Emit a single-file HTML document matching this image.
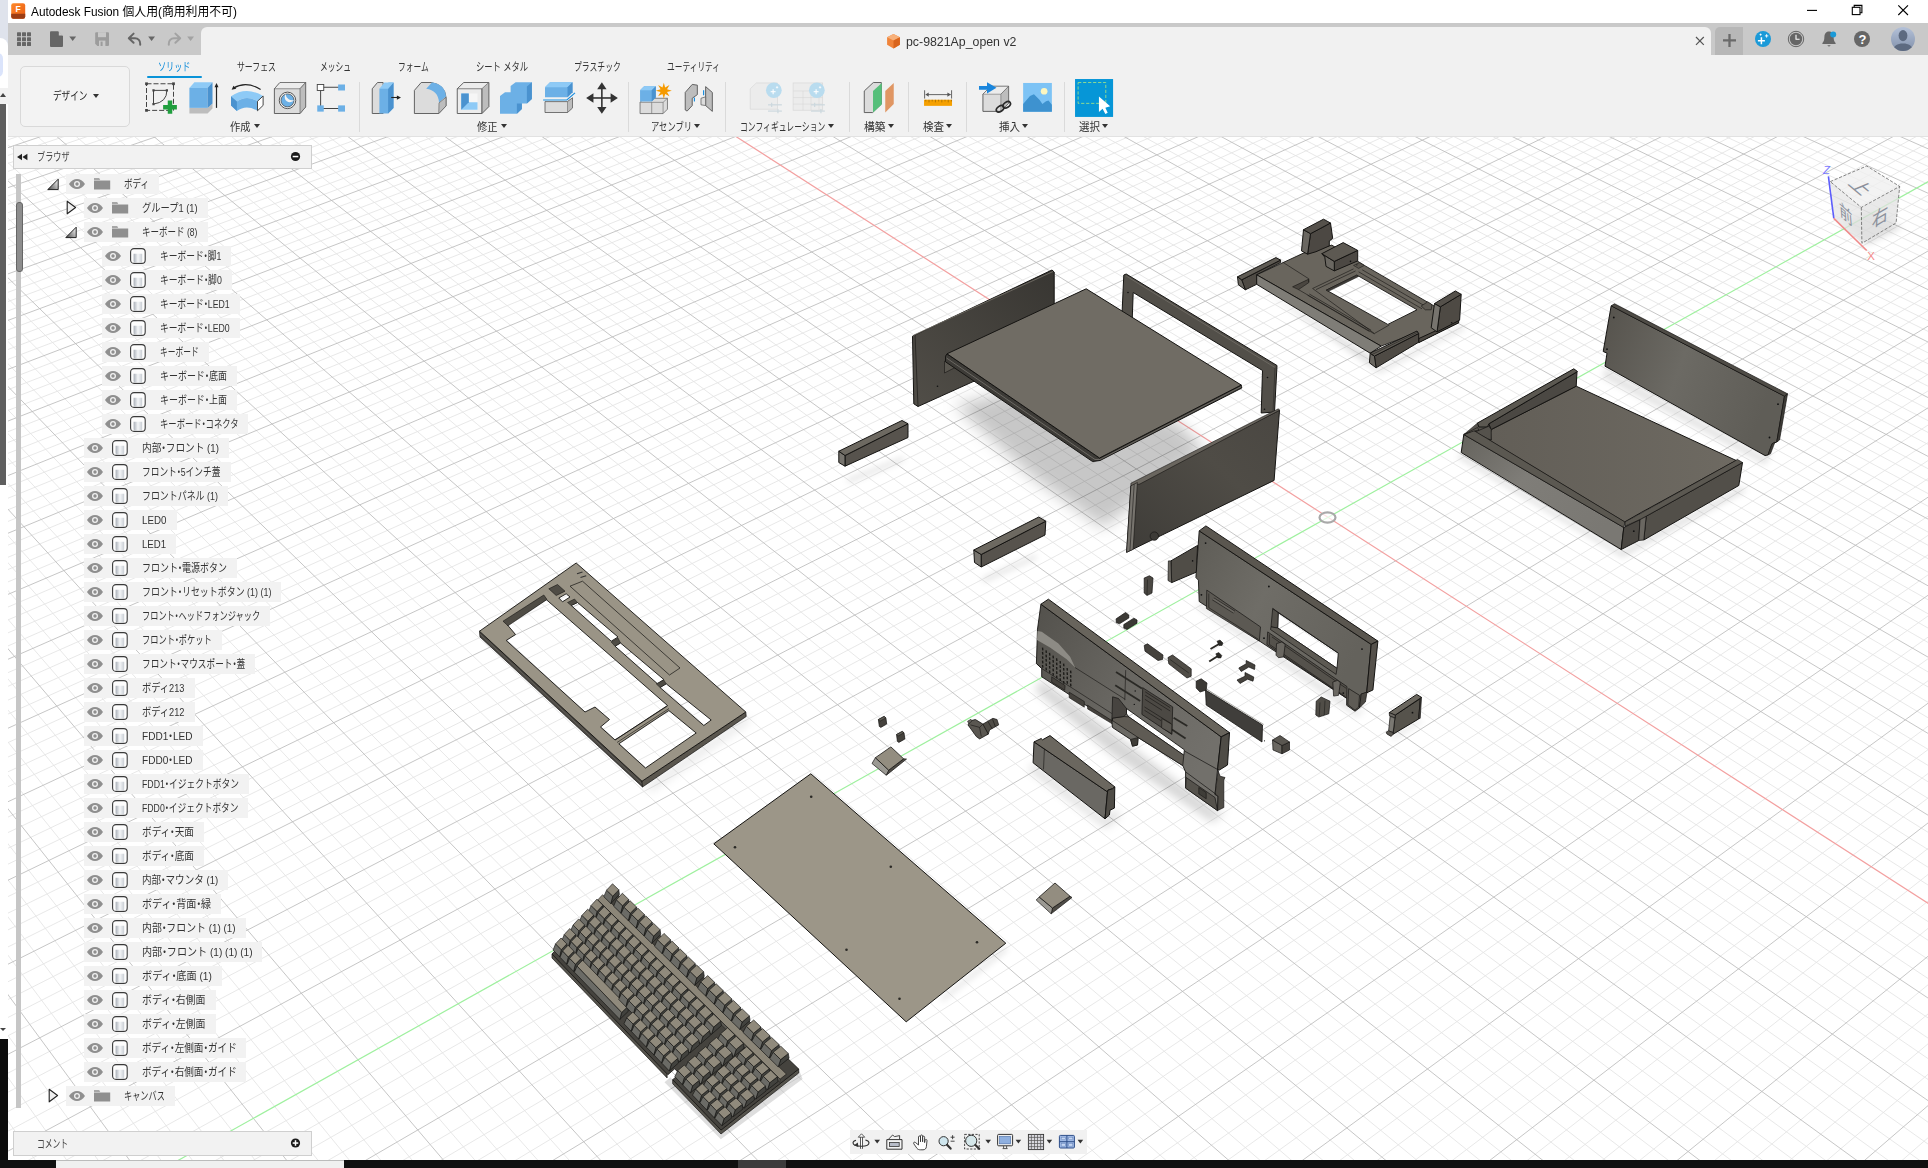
<!DOCTYPE html>
<html><head><meta charset="utf-8"><title>Autodesk Fusion</title>
<style>
html,body{margin:0;padding:0;background:#fff;}
body{width:1928px;height:1168px;position:relative;overflow:hidden;font-family:"Liberation Sans","Noto Sans CJK JP",sans-serif;font-size:11px;color:#333;}
.abs{position:absolute;}
#vp{position:absolute;left:0;top:137px;width:1928px;height:1023px;background:#fff;overflow:hidden;}
#vp svg{position:absolute;left:0;top:0;}
.rb{position:absolute;height:20px;background:#f2f2f2;}
.ic{position:absolute;overflow:visible;}
.tx{position:absolute;white-space:nowrap;font-size:11.5px;line-height:18px;height:18px;color:#333;transform-origin:0 50%;}
.tt{position:absolute;white-space:nowrap;height:18px;transform-origin:0 50%;}
.md{font-style:normal;margin:0 -0.27em}
.dd{position:absolute;width:0;height:0;border-left:3.2px solid transparent;border-right:3.2px solid transparent;border-top:4px solid #333;}
.vdiv{position:absolute;width:1px;top:82px;height:50px;background:#dadada;}
</style></head><body>
<!-- viewport -->
<div id="vp"><svg width="1928" height="1023" viewBox="0 0 1928 1023">
<g>
<path d="M-5.0 -0.6L8.2 -5.0M-5.0 7.1L31.3 -5.0M-5.0 22.8L77.5 -5.0M-5.0 30.8L100.6 -5.0M-5.0 38.8L123.7 -5.0M-5.0 47.0L146.8 -5.0M-5.0 63.4L192.9 -5.0M-5.0 71.8L216.0 -5.0M-5.0 80.2L239.1 -5.0M-5.0 88.7L262.2 -5.0M-5.0 106.0L308.4 -5.0M-5.0 1010.2L7.3 1028.0M-5.0 114.8L331.5 -5.0M-5.0 965.5L38.7 1028.0M-5.0 123.6L354.6 -5.0M-5.0 922.3L70.2 1028.0M-5.0 132.6L377.6 -5.0M-5.0 880.5L101.6 1028.0M-5.0 150.8L423.8 -5.0M-5.0 800.8L164.5 1028.0M-5.0 160.0L446.9 -5.0M-5.0 762.8L196.0 1028.0M-5.0 169.3L470.0 -5.0M-5.0 725.9L227.4 1028.0M-5.0 178.7L493.1 -5.0M-5.0 690.2L258.9 1028.0M-5.0 197.8L539.3 -5.0M-5.0 621.9L321.8 1028.0M-5.0 207.6L562.4 -5.0M-5.0 589.2L353.3 1028.0M-5.0 217.4L585.4 -5.0M-5.0 557.4L384.7 1028.0M-5.0 227.3L608.5 -5.0M-5.0 526.5L416.2 1028.0M-5.0 247.4L654.7 -5.0M-5.0 467.3L479.1 1028.0M-5.0 257.7L677.8 -5.0M-5.0 438.8L510.6 1028.0M-5.0 268.0L700.9 -5.0M-5.0 411.1L542.0 1028.0M-5.0 278.5L724.0 -5.0M-5.0 384.2L573.5 1028.0M-5.0 299.8L770.2 -5.0M-5.0 332.3L636.4 1028.0M-5.0 310.6L793.3 -5.0M-5.0 307.3L667.8 1028.0M-5.0 321.5L816.3 -5.0M-5.0 283.0L699.3 1028.0M-5.0 332.6L839.4 -5.0M-5.0 259.3L730.8 1028.0M-5.0 355.1L885.6 -5.0M-5.0 213.5L793.7 1028.0M-5.0 366.5L908.7 -5.0M-5.0 191.4L825.1 1028.0M-5.0 378.1L931.8 -5.0M-5.0 169.8L856.6 1028.0M-5.0 389.8L954.9 -5.0M-5.0 148.8L888.0 1028.0M-5.0 413.6L1001.1 -5.0M-5.0 108.0L951.0 1028.0M-5.0 425.7L1024.2 -5.0M-5.0 88.4L982.4 1028.0M-5.0 438.0L1047.2 -5.0M-5.0 69.1L1013.9 1028.0M-5.0 450.4L1070.3 -5.0M-5.0 50.3L1045.3 1028.0M-5.0 475.6L1116.5 -5.0M-5.0 13.9L1108.2 1028.0M-5.0 488.5L1139.6 -5.0M-5.0 -3.8L1139.7 1028.0M-5.0 501.5L1162.7 -5.0M13.0 -5.0L1171.2 1028.0M-5.0 514.6L1185.8 -5.0M32.3 -5.0L1202.6 1028.0M-5.0 541.4L1232.0 -5.0M71.0 -5.0L1265.5 1028.0M-5.0 555.1L1255.1 -5.0M90.4 -5.0L1297.0 1028.0M-5.0 568.9L1278.2 -5.0M109.7 -5.0L1328.4 1028.0M-5.0 582.9L1301.2 -5.0M129.1 -5.0L1359.9 1028.0M-5.0 611.5L1347.4 -5.0M167.8 -5.0L1422.8 1028.0M-5.0 626.0L1370.5 -5.0M187.1 -5.0L1454.3 1028.0M-5.0 640.8L1393.6 -5.0M206.5 -5.0L1485.7 1028.0M-5.0 655.7L1416.7 -5.0M225.8 -5.0L1517.2 1028.0M-5.0 686.2L1462.9 -5.0M264.5 -5.0L1580.1 1028.0M-5.0 701.7L1486.0 -5.0M283.9 -5.0L1611.6 1028.0M-5.0 717.4L1509.1 -5.0M303.2 -5.0L1643.0 1028.0M-5.0 733.4L1532.2 -5.0M322.6 -5.0L1674.5 1028.0M-5.0 765.9L1578.3 -5.0M361.3 -5.0L1737.4 1028.0M-5.0 782.5L1601.4 -5.0M380.6 -5.0L1768.9 1028.0M-5.0 799.3L1624.5 -5.0M400.0 -5.0L1800.3 1028.0M-5.0 816.4L1647.6 -5.0M419.3 -5.0L1831.8 1028.0M-5.0 851.3L1693.8 -5.0M458.0 -5.0L1894.7 1028.0M-5.0 869.1L1716.9 -5.0M477.4 -5.0L1926.2 1028.0M-5.0 887.1L1740.0 -5.0M496.7 -5.0L1933.0 1010.6M-5.0 905.4L1763.1 -5.0M516.1 -5.0L1933.0 988.7M-5.0 942.9L1809.3 -5.0M554.8 -5.0L1933.0 945.9M-5.0 962.0L1832.4 -5.0M574.1 -5.0L1933.0 925.0M-5.0 981.4L1855.4 -5.0M593.5 -5.0L1933.0 904.5M-5.0 1001.1L1878.5 -5.0M612.8 -5.0L1933.0 884.3M19.7 1028.0L1924.7 -5.0M651.5 -5.0L1933.0 844.8M57.3 1028.0L1933.0 3.1M670.9 -5.0L1933.0 825.5M94.8 1028.0L1933.0 15.9M690.2 -5.0L1933.0 806.5M132.4 1028.0L1933.0 28.8M709.6 -5.0L1933.0 787.8M207.4 1028.0L1933.0 55.4M748.3 -5.0L1933.0 751.2M245.0 1028.0L1933.0 69.0M767.6 -5.0L1933.0 733.4M282.5 1028.0L1933.0 82.8M787.0 -5.0L1933.0 715.7M320.1 1028.0L1933.0 96.9M806.3 -5.0L1933.0 698.4M395.1 1028.0L1933.0 125.6M845.0 -5.0L1933.0 664.4M432.7 1028.0L1933.0 140.4M864.4 -5.0L1933.0 647.8M470.2 1028.0L1933.0 155.4M883.7 -5.0L1933.0 631.4M507.7 1028.0L1933.0 170.6M903.1 -5.0L1933.0 615.3M582.8 1028.0L1933.0 201.9M941.8 -5.0L1933.0 583.7M620.4 1028.0L1933.0 217.9M961.1 -5.0L1933.0 568.2M657.9 1028.0L1933.0 234.2M980.5 -5.0L1933.0 552.9M695.4 1028.0L1933.0 250.8M999.8 -5.0L1933.0 537.8M770.5 1028.0L1933.0 284.9M1038.5 -5.0L1933.0 508.3M808.1 1028.0L1933.0 302.4M1057.9 -5.0L1933.0 493.9M845.6 1028.0L1933.0 320.3M1077.2 -5.0L1933.0 479.6M883.2 1028.0L1933.0 338.4M1096.6 -5.0L1933.0 465.5M958.2 1028.0L1933.0 375.8M1135.3 -5.0L1933.0 437.9M995.8 1028.0L1933.0 395.0M1154.6 -5.0L1933.0 424.4M1033.3 1028.0L1933.0 414.5M1174.0 -5.0L1933.0 411.0M1070.9 1028.0L1933.0 434.5M1193.3 -5.0L1933.0 397.8M1145.9 1028.0L1933.0 475.5M1232.0 -5.0L1933.0 371.9M1183.5 1028.0L1933.0 496.6M1251.4 -5.0L1933.0 359.2M1221.0 1028.0L1933.0 518.2M1270.7 -5.0L1933.0 346.7M1258.6 1028.0L1933.0 540.2M1290.1 -5.0L1933.0 334.3M1333.6 1028.0L1933.0 585.6M1328.8 -5.0L1933.0 310.0M1371.2 1028.0L1933.0 608.9M1348.2 -5.0L1933.0 298.0M1408.7 1028.0L1933.0 632.8M1367.5 -5.0L1933.0 286.2M1446.3 1028.0L1933.0 657.2M1386.9 -5.0L1933.0 274.6M1521.4 1028.0L1933.0 707.6M1425.6 -5.0L1933.0 251.7M1558.9 1028.0L1933.0 733.6M1444.9 -5.0L1933.0 240.4M1596.4 1028.0L1933.0 760.2M1464.3 -5.0L1933.0 229.3M1634.0 1028.0L1933.0 787.4M1483.6 -5.0L1933.0 218.3M1709.1 1028.0L1933.0 843.7M1522.3 -5.0L1933.0 196.8M1746.6 1028.0L1933.0 872.8M1541.7 -5.0L1933.0 186.1M1784.2 1028.0L1933.0 902.6M1561.0 -5.0L1933.0 175.7M1821.7 1028.0L1933.0 933.1M1580.4 -5.0L1933.0 165.3M1896.8 1028.0L1933.0 996.4M1619.1 -5.0L1933.0 144.9M1638.4 -5.0L1933.0 134.9M1657.8 -5.0L1933.0 125.0M1677.1 -5.0L1933.0 115.2M1715.8 -5.0L1933.0 95.9M1735.2 -5.0L1933.0 86.4M1754.5 -5.0L1933.0 77.0M1773.9 -5.0L1933.0 67.7M1812.6 -5.0L1933.0 49.4M1832.0 -5.0L1933.0 40.4M1851.3 -5.0L1933.0 31.6M1870.7 -5.0L1933.0 22.7M1909.4 -5.0L1933.0 5.4M1928.7 -5.0L1933.0 -3.1" stroke="#e4e4e4" stroke-width="0.85" fill="none"/>
<path d="M-5.0 15.0L54.4 -5.0M-5.0 55.1L169.8 -5.0M-5.0 97.3L285.3 -5.0M-5.0 141.6L400.7 -5.0M-5.0 840.0L133.1 1028.0M-5.0 188.2L516.2 -5.0M-5.0 655.5L290.4 1028.0M-5.0 237.3L631.6 -5.0M-5.0 496.5L447.6 1028.0M-5.0 289.1L747.1 -5.0M-5.0 357.9L604.9 1028.0M-5.0 343.8L862.5 -5.0M-5.0 236.1L762.2 1028.0M-5.0 401.6L978.0 -5.0M-5.0 128.2L919.5 1028.0M-5.0 462.9L1093.4 -5.0M-5.0 31.9L1076.8 1028.0M-5.0 528.0L1208.9 -5.0M51.7 -5.0L1234.1 1028.0M-5.0 597.1L1324.3 -5.0M148.4 -5.0L1391.4 1028.0M-5.0 670.8L1439.8 -5.0M245.2 -5.0L1548.7 1028.0M-5.0 749.5L1555.2 -5.0M341.9 -5.0L1705.9 1028.0M-5.0 833.7L1670.7 -5.0M438.7 -5.0L1863.2 1028.0M-5.0 924.0L1786.2 -5.0M535.4 -5.0L1933.0 967.1M-5.0 1021.1L1901.6 -5.0M632.2 -5.0L1933.0 864.4M357.6 1028.0L1933.0 111.1M825.7 -5.0L1933.0 681.3M545.3 1028.0L1933.0 186.1M922.4 -5.0L1933.0 599.4M733.0 1028.0L1933.0 267.7M1019.2 -5.0L1933.0 523.0M920.7 1028.0L1933.0 356.9M1115.9 -5.0L1933.0 451.6M1108.4 1028.0L1933.0 454.8M1212.7 -5.0L1933.0 384.8M1296.1 1028.0L1933.0 562.6M1309.5 -5.0L1933.0 322.0M1483.8 1028.0L1933.0 682.1M1406.2 -5.0L1933.0 263.1M1671.5 1028.0L1933.0 815.2M1503.0 -5.0L1933.0 207.5M1859.2 1028.0L1933.0 964.3M1599.7 -5.0L1933.0 155.0M1696.5 -5.0L1933.0 105.5M1793.3 -5.0L1933.0 58.5M1890.0 -5.0L1933.0 14.0" stroke="#bcbcbc" stroke-width="0.85" fill="none"/>
<path d="M728.9 -5.0L1933.0 769.4" stroke="#f3a0a0" stroke-width="1.2" fill="none"/>
<path d="M169.9 1028.0L1933.0 42.0" stroke="#9ff09f" stroke-width="1.2" fill="none"/>
</g>
<g transform="translate(0,-137)" stroke-linejoin="round">
<defs><filter id="b5" x="-20%" y="-20%" width="140%" height="140%"><feGaussianBlur stdDeviation="5"/></filter><filter id="b3" x="-20%" y="-20%" width="140%" height="140%"><feGaussianBlur stdDeviation="3"/></filter><filter id="b8" x="-20%" y="-20%" width="140%" height="140%"><feGaussianBlur stdDeviation="8"/></filter><linearGradient id="gpl" x1="0" y1="0" x2="1" y2="0"><stop offset="0" stop-color="#3a3834"/><stop offset="1" stop-color="#55524b"/></linearGradient><linearGradient id="glp" x1="1" y1="0" x2="0" y2="1"><stop offset="0" stop-color="#383632"/><stop offset="1" stop-color="#514e48"/></linearGradient><linearGradient id="grp" x1="0" y1="1" x2="1" y2="0"><stop offset="0" stop-color="#3e3c38"/><stop offset="0.6" stop-color="#4f4c46"/><stop offset="1" stop-color="#4a4742"/></linearGradient></defs>
<path d="M955.0 405.0L1020.0 390.0L1175.0 420.0L1205.0 450.0L1102.5 527.5L1030.0 475.0Z" fill="#000" fill-opacity="0.22" filter="url(#b8)"/>
<path d="M912.5 336.2L1052.0 270.0L1054.2 272.0L1054.2 345.0L918.0 406.5L913.8 403.8Z" fill="url(#glp)" stroke="#151412" stroke-width="1.0" />
<path d="M915.0 334.5L918.0 406.5" fill="none" stroke="#1c1b19" stroke-width="0.7"/>
<path d="M913.2 336.2L915.0 334.5L1053.0 271.5" fill="none" stroke="#77736b" stroke-width="0.8"/>
<path d="M944.5 361.2L955.0 356.2L955.0 367.5L944.5 373.0Z" fill="#5a5750" stroke="#151412" stroke-width="0.6" />
<circle cx="937.5" cy="386.2" r="0.8" fill="#111"/>
<path d="M1123.8 275.0L1126.2 274.0L1277.0 365.5L1274.5 412.0L1261.2 413.0L1262.5 370.5L1133.2 292.5L1132.0 325.0L1121.5 325.0Z" fill="#524f49" stroke="#151412" stroke-width="1.0" />
<path d="M1126.2 276.0L1275.0 367.5" fill="none" stroke="#77736b" stroke-width="0.7"/>
<path d="M1275.0 367.5L1273.0 412.0" fill="none" stroke="#2a2927" stroke-width="0.6"/>
<circle cx="1128.0" cy="292.5" r="0.8" fill="#111"/>
<circle cx="1267.5" cy="377.5" r="0.8" fill="#111"/>
<circle cx="1264.5" cy="409.2" r="0.8" fill="#111"/>
<path d="M945.5 356.2L947.0 353.8L1099.5 458.0L1241.2 385.0L1241.8 388.0L1100.0 460.5L1092.5 461.5L945.5 361.8Z" fill="#3d3b37" stroke="#151412" stroke-width="1.0" />
<path d="M946.5 358.0L1095.0 459.5L1100.0 459.5L1241.5 386.5" fill="none" stroke="#8a877f" stroke-width="0.6"/>
<path d="M947.0 353.8L1086.2 288.8L1241.2 385.0L1099.5 458.0Z" fill="#706c64" stroke="#151412" stroke-width="1.0" />
<path d="M1130.9 485.8L1279.5 410.2L1274.1 480.4L1126.6 552.3Z" fill="url(#grp)" stroke="#151412" stroke-width="1.0" />
<path d="M1130.9 485.8L1139.9 484.0L1279.5 410.2L1278.4 408.8L1130.9 483.2Z" fill="#6a665f" stroke="#151412" stroke-width="0.6" />
<path d="M1130.9 485.8L1137.4 482.5L1133.1 549.4L1126.6 552.3Z" fill="#77746e" stroke="#151412" stroke-width="0.6" />
<path d="M1134.2 484.3L1129.9 550.9" fill="none" stroke="#1c1b19" stroke-width="0.6"/>
<circle cx="1154.3" cy="536.1" r="4.2" fill="#3d3b37" stroke="#1c1b19" stroke-width="0.8"/>
<path d="M1256.7 285.1L1370.2 355.3L1376.9 369.4L1438.7 338.6L1462.1 325.2L1465.4 328.5L1378.6 373.6L1368.6 365.3Z" fill="#000" fill-opacity="0.12" filter="url(#b3)"/>
<path d="M1241.7 279.8L1280.6 260.1L1280.6 262.6L1256.7 274.8L1256.7 284.3L1245.4 289.8Z" fill="#4e4a44" stroke="#151412" stroke-width="1.0" />
<path d="M1237.5 276.8L1241.7 279.8L1245.4 289.8L1238.4 284.8Z" fill="#6a6761" stroke="#151412" stroke-width="1.0" />
<path d="M1237.5 276.8L1275.9 257.6L1280.6 260.1L1241.7 279.8Z" fill="#5f5b54" stroke="#151412" stroke-width="1.0" />
<path d="M1256.7 274.8L1303.5 253.1L1331.8 245.1L1364.4 265.4L1432.8 305.2L1458.7 322.7L1418.7 342.2L1417.0 332.7L1381.1 346.1Z M1326.3 290.1L1356.9 275.1L1417.0 309.8L1387.8 324.4Z" fill-rule="evenodd" fill="#69655d" stroke="#151412" stroke-width="0.9"/>
<path d="M1326.3 290.1L1356.9 275.1L1358.6 276.5L1328.5 291.3Z" fill="#3f3c38" stroke="#151412" stroke-width="0.5" />
<path d="M1256.7 274.8L1381.1 346.1L1370.2 353.2L1256.7 284.3Z" fill="#7f7d77" stroke="#151412" stroke-width="1.0" />
<path d="M1418.7 338.6L1458.7 320.2L1458.7 322.7L1418.7 342.7Z" fill="#4e4a44" stroke="#151412" stroke-width="1.0" />
<path d="M1292.6 286.8L1308.5 279.3L1308.8 282.6L1298.5 289.6Z" fill="#4a4640" stroke="#151412" stroke-width="0.6" />
<path d="M1282.6 262.1L1308.8 278.8L1308.8 282.1" fill="none" stroke="#151412" stroke-width="0.6"/>
<path d="M1312.6 288.5L1353.5 268.9" fill="none" stroke="#151412" stroke-width="0.6"/>
<path d="M1316.0 289.6L1355.6 270.9" fill="none" stroke="#151412" stroke-width="0.6"/>
<path d="M1312.6 288.5L1374.4 333.5L1389.4 324.9" fill="none" stroke="#151412" stroke-width="0.6"/>
<path d="M1307.6 295.2L1369.4 331.5" fill="none" stroke="#151412" stroke-width="0.6"/>
<path d="M1309.3 294.0L1371.1 330.2" fill="none" stroke="#151412" stroke-width="0.6"/>
<path d="M1358.6 271.8L1422.0 308.8" fill="none" stroke="#151412" stroke-width="0.6"/>
<path d="M1362.2 269.8L1427.0 307.2" fill="none" stroke="#151412" stroke-width="0.6"/>
<path d="M1298.5 289.6L1374.4 333.9" fill="none" stroke="#151412" stroke-width="0.6"/>
<path d="M1310.5 233.7L1330.5 223.0L1332.7 238.4L1329.3 240.9L1329.3 245.9L1316.0 251.7L1307.6 254.2Z" fill="#4c4843" stroke="#151412" stroke-width="1.0" />
<path d="M1303.5 229.7L1310.5 233.7L1307.6 254.2L1301.5 250.9Z" fill="#6a6761" stroke="#151412" stroke-width="1.0" />
<path d="M1303.5 229.7L1323.5 219.2L1330.5 223.0L1310.5 233.7Z" fill="#55514b" stroke="#151412" stroke-width="1.0" />
<path d="M1334.3 261.4L1357.7 250.4L1357.7 260.9L1334.3 270.9Z" fill="#4c4843" stroke="#151412" stroke-width="1.0" />
<path d="M1321.8 253.7L1334.3 261.4L1334.3 270.9L1326.0 266.4L1324.8 257.1Z" fill="#6a6761" stroke="#151412" stroke-width="1.0" />
<path d="M1321.8 253.7L1343.2 242.6L1357.7 250.4L1334.3 261.4Z" fill="#5d5952" stroke="#151412" stroke-width="1.0" />
<circle cx="1350.5" cy="261.4" r="0.8" fill="#111"/>
<path d="M1353.5 265.4L1359.4 262.6L1364.4 265.4L1358.6 268.4Z" fill="#5a564f" stroke="#151412" stroke-width="0.5" />
<circle cx="1356.9" cy="264.8" r="0.6" fill="#111"/>
<path d="M1421.2 306.0L1427.8 301.8L1432.0 304.8L1431.2 309.8L1425.3 309.8Z" fill="#5f5b54" stroke="#151412" stroke-width="0.6" />
<path d="M1440.4 306.8L1461.2 294.3L1459.6 320.2L1437.0 331.9Z" fill="#4e4a44" stroke="#151412" stroke-width="1.0" />
<path d="M1434.5 303.5L1440.4 306.8L1437.0 331.9L1431.2 327.7Z" fill="#77746e" stroke="#151412" stroke-width="1.0" />
<path d="M1434.5 303.5L1455.4 291.0L1461.2 294.3L1440.4 306.8Z" fill="#55514b" stroke="#151412" stroke-width="1.0" />
<circle cx="1451.7" cy="322.7" r="0.8" fill="#111"/>
<path d="M1374.4 356.1L1418.7 333.5L1418.7 342.2L1376.1 367.8Z" fill="#4e4a44" stroke="#151412" stroke-width="1.0" />
<path d="M1370.2 353.2L1374.4 356.1L1376.1 367.8L1369.4 362.8Z" fill="#6a6761" stroke="#151412" stroke-width="1.0" />
<path d="M1370.2 353.2L1417.0 331.0L1418.7 333.5L1374.4 356.1Z" fill="#5f5b54" stroke="#151412" stroke-width="1.0" />
<path d="M1371.9 354.6L1417.8 332.2" fill="none" stroke="#151412" stroke-width="0.5"/>
<defs><linearGradient id="gbp" x1="0" y1="0" x2="1" y2="0.3"><stop offset="0" stop-color="#55524c"/><stop offset="0.5" stop-color="#6c6a64"/><stop offset="1" stop-color="#5f5d57"/></linearGradient><linearGradient id="gfl" x1="0" y1="0" x2="1" y2="0"><stop offset="0" stop-color="#625e57"/><stop offset="1" stop-color="#6e6a62"/></linearGradient><linearGradient id="glw" x1="0" y1="0" x2="1" y2="0.6"><stop offset="0" stop-color="#65635d"/><stop offset="0.45" stop-color="#7f7d78"/><stop offset="1" stop-color="#7a7873"/></linearGradient></defs>
<path d="M1605.0 367.5L1765.0 456.2L1772.5 452.5L1765.0 465.0L1602.5 377.5Z" fill="#000" fill-opacity="0.1" filter="url(#b3)"/>
<path d="M1611.2 305.8L1784.5 396.2L1776.8 442.0L1772.0 443.8L1768.0 455.0L1765.0 455.5L1605.0 366.2L1607.0 353.2L1603.2 351.5Z" fill="url(#gbp)" stroke="#151412" stroke-width="1.0" />
<path d="M1611.2 305.8L1614.5 303.8L1787.5 393.8L1784.5 396.2Z" fill="#4f4c46" stroke="#151412" stroke-width="0.7" />
<path d="M1784.5 396.2L1787.5 393.8L1779.5 440.0L1776.8 442.0Z" fill="#3f3d38" stroke="#151412" stroke-width="0.7" />
<path d="M1772.0 443.8L1775.0 442.0L1770.5 453.8L1768.0 455.0Z" fill="#3f3d38" stroke="#151412" stroke-width="0.6" />
<circle cx="1613.8" cy="317.5" r="0.9" fill="#111"/>
<circle cx="1607.0" cy="349.2" r="0.9" fill="#111"/>
<circle cx="1778.0" cy="404.2" r="0.9" fill="#111"/>
<circle cx="1769.5" cy="437.5" r="0.9" fill="#111"/>
<path d="M1461.2 453.8L1621.2 551.2L1740.0 487.5L1747.5 490.0L1622.5 557.5L1457.5 457.5Z" fill="#000" fill-opacity="0.12" filter="url(#b3)"/>
<path d="M1491.2 429.5L1576.2 386.2L1736.2 460.5L1641.2 512.5L1624.5 522.0L1488.8 440.0Z" fill="url(#gfl)" stroke="#151412" stroke-width="1.0" />
<path d="M1463.8 434.5L1477.5 423.0L1490.0 423.8L1491.2 440.0L1475.0 433.0Z" fill="#55524c" stroke="#151412" stroke-width="0.5" />
<path d="M1488.8 423.8L1577.0 372.0L1576.2 386.2L1491.2 429.5Z" fill="#4b4843" stroke="#151412" stroke-width="1.0" />
<path d="M1477.5 423.0L1573.8 368.8L1577.5 371.5L1488.8 423.8L1487.5 427.0L1478.8 427.0Z" fill="#5b5851" stroke="#151412" stroke-width="1.0" />
<path d="M1475.0 432.0L1488.8 426.2L1491.2 429.5L1491.2 440.0L1487.5 438.8Z" fill="#55524c" stroke="#151412" stroke-width="0.7" />
<path d="M1463.8 434.5L1623.8 527.5L1621.2 549.5L1461.2 452.5Z" fill="url(#glw)" stroke="#151412" stroke-width="1.0" />
<path d="M1463.8 434.5L1473.8 430.5L1625.0 522.0L1623.8 527.5Z" fill="#5b5851" stroke="#151412" stroke-width="0.7" />
<path d="M1463.8 434.5L1477.5 427.5L1478.8 430.0L1473.8 431.0Z" fill="#5b5851" stroke="#151412" stroke-width="0.6" />
<path d="M1623.8 527.5L1640.0 519.5L1638.8 540.5L1621.2 549.5Z" fill="#4b4843" stroke="#151412" stroke-width="1.0" />
<circle cx="1633.8" cy="531.2" r="0.9" fill="#111"/>
<path d="M1646.2 516.2L1742.5 462.5L1738.8 485.5L1643.8 540.0Z" fill="#524f49" stroke="#151412" stroke-width="1.0" />
<path d="M1640.0 519.5L1646.2 516.2L1643.8 540.0L1638.8 540.5Z" fill="#6a6761" stroke="#151412" stroke-width="0.7" />
<path d="M1737.5 459.5L1742.5 462.5L1646.2 516.2L1640.0 519.5L1625.0 526.2L1625.0 522.0L1641.2 513.0Z" fill="#5b5851" stroke="#151412" stroke-width="0.7" />
<path d="M846.2 479.5L902.5 457.0L905.0 460.0L850.0 482.5Z" fill="#000" fill-opacity="0.12" filter="url(#b3)"/>
<path d="M845.0 455.5L908.0 423.8L908.0 437.5L845.0 466.2Z" fill="#57534d" stroke="#151412" stroke-width="1.0" />
<path d="M838.8 451.2L845.0 455.5L845.0 466.2L838.8 462.5Z" fill="#77746e" stroke="#151412" stroke-width="1.0" />
<path d="M838.8 451.2L902.0 420.5L908.0 423.8L845.0 455.5Z" fill="#6d6961" stroke="#151412" stroke-width="1.0" />
<path d="M981.2 578.8L1035.0 555.0L1037.5 558.0L985.0 582.0Z" fill="#000" fill-opacity="0.12" filter="url(#b3)"/>
<path d="M981.2 554.5L1045.8 521.2L1045.0 535.0L981.2 567.0Z" fill="#57534d" stroke="#151412" stroke-width="1.0" />
<path d="M973.8 550.0L981.2 554.5L981.2 567.0L974.5 562.5Z" fill="#77746e" stroke="#151412" stroke-width="1.0" />
<path d="M973.8 550.0L1038.8 517.0L1045.8 521.2L981.2 554.5Z" fill="#6d6961" stroke="#151412" stroke-width="1.0" />
<path d="M1144.2 578.0L1149.5 575.8L1153.0 578.0L1152.0 593.0L1147.0 595.5L1144.2 593.0Z" fill="#4b4843" stroke="#151412" stroke-width="0.7" />
<path d="M1147.5 579.5L1147.0 595.0" fill="none" stroke="#151412" stroke-width="0.5"/>
<path d="M1116.2 618.8L1125.5 612.5L1128.8 615.0L1128.8 618.0L1119.5 623.8L1116.2 622.5Z" fill="#3b3935" stroke="#151412" stroke-width="0.7" />
<path d="M1123.8 624.5L1133.8 618.2L1137.0 620.0L1137.0 623.2L1127.0 629.5L1123.8 628.0Z" fill="#3b3935" stroke="#151412" stroke-width="0.7" />
<defs><linearGradient id="gif" x1="0" y1="0" x2="1" y2="0.5"><stop offset="0" stop-color="#5e5c56"/><stop offset="0.45" stop-color="#6f6d67"/><stop offset="1" stop-color="#64625c"/></linearGradient></defs>
<path d="M1170.9 560.9L1197.6 545.4L1196.4 572.1L1171.7 582.6Z" fill="#504d47" stroke="#151412" stroke-width="1.0" />
<path d="M1168.4 560.9L1170.9 560.9L1171.7 582.6L1168.0 580.5Z" fill="#6a6761" stroke="#151412" stroke-width="0.7" />
<circle cx="1192.6" cy="560.9" r="0.8" fill="#111"/>
<path d="M1199.2 602.7L1347.0 700.3L1355.3 712.0L1367.0 707.0L1357.0 717.0L1196.7 606.8Z" fill="#000" fill-opacity="0.1" filter="url(#b3)"/>
<path d="M1199.2 530.9L1371.2 644.4L1366.7 692.8L1361.2 694.0L1359.5 707.8L1355.0 711.2L1346.7 705.3L1346.7 698.3L1199.2 601.5L1198.4 580.1L1195.9 577.6Z M1278.2 612.7L1338.3 653.2L1337.0 668.3L1277.7 628.0Z" fill-rule="evenodd" fill="url(#gif)" stroke="#151412" stroke-width="0.9"/>
<path d="M1272.7 608.5L1278.2 612.7L1277.7 628.0L1271.0 626.9Z" fill="#524f49" stroke="#151412" stroke-width="0.7" />
<path d="M1271.0 626.9L1277.7 628.0L1337.0 668.3L1336.1 674.4L1270.5 629.5Z" fill="#5d5a53" stroke="#151412" stroke-width="0.7" />
<path d="M1272.7 608.5L1338.3 653.2" fill="none" stroke="#151412" stroke-width="0.7"/>
<path d="M1199.2 530.9L1205.9 525.9L1377.9 641.1L1371.2 644.4Z" fill="#5a564f" stroke="#151412" stroke-width="1.0" />
<path d="M1371.2 644.4L1377.9 641.1L1372.9 690.0L1366.7 692.8Z" fill="#55514b" stroke="#151412" stroke-width="1.0" />
<path d="M1361.2 694.0L1367.0 692.0L1365.4 702.0L1359.5 707.8Z" fill="#4b4843" stroke="#151412" stroke-width="0.7" />
<path d="M1206.8 590.1L1260.5 626.9L1259.3 641.1L1206.4 608.5Z" fill="#5c5953" stroke="#151412" stroke-width="0.7" />
<path d="M1208.8 593.5L1208.8 607.7L1258.5 639.4" fill="none" stroke="#151412" stroke-width="0.6"/>
<path d="M1213.1 598.8L1234.3 612.2" fill="none" stroke="#2d2b28" stroke-width="3.2"/>
<path d="M1213.1 598.8L1234.3 612.2" fill="none" stroke="#6a6761" stroke-width="1.6"/>
<path d="M1267.7 631.9L1347.0 686.6L1346.7 698.3L1266.9 644.4Z" fill="#55524c" stroke="#151412" stroke-width="0.7" />
<path d="M1269.4 634.4L1269.4 644.4L1345.3 696.6" fill="none" stroke="#151412" stroke-width="0.6"/>
<path d="M1271.9 636.9L1346.2 688.3" fill="none" stroke="#151412" stroke-width="0.6"/>
<path d="M1276.5 643.6L1281.9 641.9L1285.2 644.4L1283.6 656.9L1278.5 657.7L1276.0 655.2Z" fill="#6a6761" stroke="#151412" stroke-width="0.7" />
<path d="M1332.8 682.0L1337.8 680.3L1340.3 682.8L1338.6 695.3L1333.6 696.1Z" fill="#6a6761" stroke="#151412" stroke-width="0.7" />
<path d="M1348.7 688.6L1359.5 695.3L1358.7 707.0L1355.0 710.3L1347.8 704.5Z" fill="#5e5b55" stroke="#151412" stroke-width="0.7" />
<circle cx="1205.6" cy="543.1" r="0.9" fill="#111"/>
<circle cx="1268.9" cy="586.5" r="0.9" fill="#111"/>
<circle cx="1201.4" cy="594.8" r="0.9" fill="#111"/>
<circle cx="1264.0" cy="638.2" r="0.9" fill="#111"/>
<circle cx="1362.0" cy="649.1" r="0.9" fill="#111"/>
<circle cx="1343.3" cy="693.1" r="0.9" fill="#111"/>
<defs><linearGradient id="gbz" x1="0" y1="0" x2="1" y2="0.6"><stop offset="0" stop-color="#53514c"/><stop offset="0.5" stop-color="#686661"/><stop offset="1" stop-color="#72706b"/></linearGradient></defs>
<path d="M1041.7 680.2L1132.5 747.5L1217.5 812.5L1227.5 808.8L1212.5 822.5L1112.5 755.0L1035.0 690.2Z" fill="#000" fill-opacity="0.16" filter="url(#b5)"/>
<path d="M1040.9 604.2L1221.2 736.9L1217.5 770.0L1215.0 794.4L1218.1 796.2L1217.5 810.6L1185.6 788.1L1185.6 771.9L1182.8 765.6L1138.1 737.5L1137.5 745.0L1132.5 746.2L1130.6 739.4L1112.5 727.5L1111.8 721.9L1041.7 676.8L1041.7 668.5L1036.4 663.5L1037.5 629.2Z M1126.5 708.5L1184.4 749.8L1183.8 755.2L1128.8 716.9L1126.5 713.8Z" fill-rule="evenodd" fill="url(#gbz)" stroke="#151412" stroke-width="0.9"/>
<path d="M1040.9 604.2L1048.4 599.2L1229.5 732.7L1221.2 736.9Z" fill="#68645c" stroke="#151412" stroke-width="1.0" />
<path d="M1221.2 736.9L1229.5 732.7L1227.5 765.0L1219.4 770.0L1217.5 770.0Z" fill="#4f4c46" stroke="#151412" stroke-width="1.0" />
<path d="M1218.1 770.6L1220.0 776.2L1225.0 777.5L1223.8 780.0L1223.8 807.5L1217.5 810.6L1218.1 796.2L1215.0 794.4Z" fill="#4f4c46" stroke="#151412" stroke-width="0.7" />
<path d="M1186.2 777.5L1215.0 797.5L1217.5 810.6L1185.6 788.1Z" fill="#55524c" stroke="#151412" stroke-width="0.7" />
<path d="M1198.8 787.5L1206.2 792.5L1206.2 798.8L1198.8 793.8Z" fill="#3f3d38" stroke="#151412" stroke-width="0.6" />
<path d="M1184.8 751.2L1218.5 770.0" fill="none" stroke="#151412" stroke-width="0.7"/>
<path d="M1185.6 771.9L1216.2 794.4" fill="none" stroke="#151412" stroke-width="0.7"/>
<path d="M1112.5 718.1L1123.8 716.5L1128.8 716.9L1183.8 755.2L1182.8 765.6L1138.1 737.5L1112.5 720.6Z" fill="#5f5b54" stroke="#151412" stroke-width="0.7" />
<path d="M1112.6 696.8L1118.5 698.5L1126.5 708.5L1126.5 713.8L1123.8 716.5L1112.5 718.1L1111.8 721.9Z" fill="#474440" stroke="#151412" stroke-width="0.7" />
<path d="M1130.6 739.4L1138.1 737.5L1137.5 745.0L1132.5 746.2Z" fill="#3f3d38" stroke="#151412" stroke-width="0.6" />
<path d="M1037.5 630.9L1041.7 631.7L1058.4 643.4L1070.1 656.8L1075.1 667.6L1066.7 659.3L1050.0 647.6L1037.0 640.1Z" fill="#8d8b85" stroke="none" stroke-width="1.0" />
<path d="M1036.4 663.5L1041.7 668.5L1111.8 713.5" fill="none" stroke="#151412" stroke-width="0.6"/>
<path d="M1075.1 667.6L1125.2 699.3" fill="none" stroke="#151412" stroke-width="0.6"/>
<path d="M1125.7 670.1L1124.8 700.2" fill="none" stroke="#151412" stroke-width="0.6"/>
<path d="M1042.5 647.6L1042.9 650.3" fill="none" stroke="#1b1a17" stroke-width="1.35"/>
<path d="M1042.5 651.9L1042.9 654.6" fill="none" stroke="#1b1a17" stroke-width="1.35"/>
<path d="M1042.5 656.3L1042.9 658.9" fill="none" stroke="#1b1a17" stroke-width="1.35"/>
<path d="M1042.5 660.6L1042.9 663.3" fill="none" stroke="#1b1a17" stroke-width="1.35"/>
<path d="M1042.5 665.0L1042.9 667.6" fill="none" stroke="#1b1a17" stroke-width="1.35"/>
<path d="M1046.0 650.3L1046.4 652.9" fill="none" stroke="#1b1a17" stroke-width="1.35"/>
<path d="M1046.0 654.6L1046.4 657.3" fill="none" stroke="#1b1a17" stroke-width="1.35"/>
<path d="M1046.0 658.9L1046.4 661.6" fill="none" stroke="#1b1a17" stroke-width="1.35"/>
<path d="M1046.0 663.3L1046.4 666.0" fill="none" stroke="#1b1a17" stroke-width="1.35"/>
<path d="M1046.0 667.6L1046.4 670.3" fill="none" stroke="#1b1a17" stroke-width="1.35"/>
<path d="M1049.5 652.9L1049.9 655.6" fill="none" stroke="#1b1a17" stroke-width="1.35"/>
<path d="M1049.5 657.3L1049.9 659.9" fill="none" stroke="#1b1a17" stroke-width="1.35"/>
<path d="M1049.5 661.6L1049.9 664.3" fill="none" stroke="#1b1a17" stroke-width="1.35"/>
<path d="M1049.5 666.0L1049.9 668.6" fill="none" stroke="#1b1a17" stroke-width="1.35"/>
<path d="M1049.5 670.3L1049.9 673.0" fill="none" stroke="#1b1a17" stroke-width="1.35"/>
<path d="M1053.0 655.6L1053.4 658.3" fill="none" stroke="#1b1a17" stroke-width="1.35"/>
<path d="M1053.0 659.9L1053.4 662.6" fill="none" stroke="#1b1a17" stroke-width="1.35"/>
<path d="M1053.0 664.3L1053.4 667.0" fill="none" stroke="#1b1a17" stroke-width="1.35"/>
<path d="M1053.0 668.6L1053.4 671.3" fill="none" stroke="#1b1a17" stroke-width="1.35"/>
<path d="M1053.0 673.0L1053.4 675.6" fill="none" stroke="#1b1a17" stroke-width="1.35"/>
<path d="M1056.6 658.3L1056.9 661.0" fill="none" stroke="#1b1a17" stroke-width="1.35"/>
<path d="M1056.6 662.6L1056.9 665.3" fill="none" stroke="#1b1a17" stroke-width="1.35"/>
<path d="M1056.6 667.0L1056.9 669.6" fill="none" stroke="#1b1a17" stroke-width="1.35"/>
<path d="M1056.6 671.3L1056.9 674.0" fill="none" stroke="#1b1a17" stroke-width="1.35"/>
<path d="M1056.6 675.6L1056.9 678.3" fill="none" stroke="#1b1a17" stroke-width="1.35"/>
<path d="M1060.1 661.0L1060.4 663.6" fill="none" stroke="#1b1a17" stroke-width="1.35"/>
<path d="M1060.1 665.3L1060.4 668.0" fill="none" stroke="#1b1a17" stroke-width="1.35"/>
<path d="M1060.1 669.6L1060.4 672.3" fill="none" stroke="#1b1a17" stroke-width="1.35"/>
<path d="M1060.1 674.0L1060.4 676.6" fill="none" stroke="#1b1a17" stroke-width="1.35"/>
<path d="M1060.1 678.3L1060.4 681.0" fill="none" stroke="#1b1a17" stroke-width="1.35"/>
<path d="M1063.6 663.6L1063.9 666.3" fill="none" stroke="#1b1a17" stroke-width="1.35"/>
<path d="M1063.6 668.0L1063.9 670.6" fill="none" stroke="#1b1a17" stroke-width="1.35"/>
<path d="M1063.6 672.3L1063.9 675.0" fill="none" stroke="#1b1a17" stroke-width="1.35"/>
<path d="M1063.6 676.6L1063.9 679.3" fill="none" stroke="#1b1a17" stroke-width="1.35"/>
<path d="M1063.6 681.0L1063.9 683.7" fill="none" stroke="#1b1a17" stroke-width="1.35"/>
<path d="M1067.1 668.0L1067.4 670.6" fill="none" stroke="#1b1a17" stroke-width="1.35"/>
<path d="M1067.1 672.3L1067.4 675.0" fill="none" stroke="#1b1a17" stroke-width="1.35"/>
<path d="M1067.1 676.6L1067.4 679.3" fill="none" stroke="#1b1a17" stroke-width="1.35"/>
<path d="M1067.1 681.0L1067.4 683.7" fill="none" stroke="#1b1a17" stroke-width="1.35"/>
<path d="M1070.6 670.6L1070.9 673.3" fill="none" stroke="#1b1a17" stroke-width="1.35"/>
<path d="M1070.6 675.0L1070.9 677.6" fill="none" stroke="#1b1a17" stroke-width="1.35"/>
<path d="M1070.6 679.3L1070.9 682.0" fill="none" stroke="#1b1a17" stroke-width="1.35"/>
<path d="M1070.6 683.7L1070.9 686.3" fill="none" stroke="#1b1a17" stroke-width="1.35"/>
<path d="M1116.0 672.1L1141.9 688.5" fill="none" stroke="#2a2925" stroke-width="1.8"/>
<path d="M1115.2 685.2L1140.2 701.0" fill="none" stroke="#2a2925" stroke-width="1.8"/>
<path d="M1173.6 717.7L1187.3 726.1" fill="none" stroke="#2a2925" stroke-width="1.8"/>
<path d="M1171.9 729.4L1185.6 738.6" fill="none" stroke="#2a2925" stroke-width="1.8"/>
<path d="M1142.7 687.7L1172.7 706.9L1171.9 734.4L1141.9 714.4Z" fill="#4c4944" stroke="#151412" stroke-width="0.7" />
<path d="M1145.2 691.8L1170.2 707.7" fill="none" stroke="#151412" stroke-width="0.6"/>
<path d="M1145.2 695.2L1170.2 711.0" fill="none" stroke="#151412" stroke-width="0.6"/>
<path d="M1144.9 699.3L1161.9 710.2" fill="none" stroke="#151412" stroke-width="0.6"/>
<path d="M1144.4 706.9L1171.1 723.6" fill="none" stroke="#151412" stroke-width="0.6"/>
<path d="M1144.4 710.2L1161.1 720.7" fill="none" stroke="#151412" stroke-width="0.6"/>
<path d="M1161.9 718.5L1171.9 724.4L1171.6 733.6L1161.6 727.7Z" fill="#5a5751" stroke="#151412" stroke-width="0.6" />
<circle cx="1135.2" cy="691.0" r="0.7" fill="#111"/>
<circle cx="1134.3" cy="704.4" r="0.7" fill="#111"/>
<path d="M1051.7 676.8L1065.1 685.5L1064.7 690.2L1051.7 682.2Z" fill="#45423d" stroke="#151412" stroke-width="0.6" />
<path d="M1069.2 692.2L1084.3 701.5L1084.3 707.2L1069.2 697.7Z" fill="#45423d" stroke="#151412" stroke-width="0.6" />
<path d="M1087.6 705.2L1111.8 720.6L1111.8 723.6L1087.6 708.9Z" fill="#45423d" stroke="#151412" stroke-width="0.6" />
<path d="M1144.2 645.5L1147.5 643.8L1163.0 655.0L1162.5 659.5L1158.0 660.5L1145.0 651.2Z" fill="#45423d" stroke="#151412" stroke-width="0.7" />
<path d="M1168.0 657.5L1172.5 655.0L1191.2 668.8L1191.2 676.2L1187.0 678.0L1168.8 663.8Z" fill="#504d47" stroke="#151412" stroke-width="0.7" />
<path d="M1170.0 659.5L1188.8 673.0" fill="none" stroke="#151412" stroke-width="0.5"/>
<path d="M1210.5 649.0L1220.8 643.0" fill="none" stroke="#2a2925" stroke-width="2.0"/>
<path d="M1209.2 661.5L1219.5 655.0" fill="none" stroke="#2a2925" stroke-width="2.0"/>
<path d="M1217.0 641.2L1220.0 640.0L1223.0 643.0L1222.0 645.5L1219.0 645.5Z" fill="#2a2925" stroke="#151412" stroke-width="0.5" />
<path d="M1215.8 653.8L1218.8 652.5L1221.8 655.5L1220.8 658.0L1217.8 658.0Z" fill="#2a2925" stroke="#151412" stroke-width="0.5" />
<path d="M1238.8 668.0L1246.2 663.8L1246.2 660.5L1255.0 665.0L1254.5 669.5L1248.8 667.0L1241.2 671.5Z" fill="#45423d" stroke="#151412" stroke-width="0.7" />
<path d="M1237.0 680.0L1245.0 676.2L1245.0 672.5L1253.8 677.0L1253.0 681.2L1247.5 679.2L1240.0 683.5Z" fill="#45423d" stroke="#151412" stroke-width="0.7" />
<path d="M1205.5 690.0L1262.5 725.0L1262.0 742.0L1206.2 705.0Z" fill="#403e3b" stroke="#151412" stroke-width="0.8" />
<path d="M1207.0 689.5L1263.8 724.5" fill="none" stroke="#8a8882" stroke-width="0.7"/>
<path d="M1196.2 681.2L1201.2 678.8L1207.0 683.0L1206.2 690.0L1200.0 692.0L1196.2 688.0Z" fill="#3b3935" stroke="#151412" stroke-width="0.7" />
<circle cx="1264.5" cy="740.8" r="0.6" fill="#111"/>
<path d="M1272.5 740.0L1282.0 745.5L1282.0 753.8L1273.0 750.0Z" fill="#6a6761" stroke="#151412" stroke-width="0.7" />
<path d="M1282.0 745.5L1289.5 742.0L1289.5 750.0L1282.0 753.8Z" fill="#45423d" stroke="#151412" stroke-width="0.7" />
<path d="M1272.5 740.0L1280.0 735.5L1289.5 742.0L1282.0 745.5Z" fill="#5a5751" stroke="#151412" stroke-width="0.7" />
<path d="M1316.2 701.2L1321.2 697.0L1330.0 701.2L1328.8 713.8L1318.8 717.0L1315.8 715.0Z" fill="#504d47" stroke="#151412" stroke-width="0.7" />
<path d="M1320.0 702.5L1319.2 716.2" fill="none" stroke="#151412" stroke-width="0.5"/>
<path d="M1325.0 700.5L1324.2 715.0" fill="none" stroke="#151412" stroke-width="0.5"/>
<path d="M1391.0 736.9L1419.1 719.5L1422.1 721.3L1394.0 739.3Z" fill="#000" fill-opacity="0.12" filter="url(#b3)"/>
<path d="M1395.2 715.1L1420.3 698.6L1418.7 718.9L1393.1 734.2Z" fill="#56534c" stroke="#151412" stroke-width="1.0" />
<path d="M1420.3 698.6L1421.5 697.4L1420.2 718.3L1418.7 718.9Z" fill="#45423d" stroke="#151412" stroke-width="0.7" />
<path d="M1389.2 712.7L1416.7 694.4L1421.5 697.4L1395.2 715.1Z" fill="#6b675f" stroke="#151412" stroke-width="1.0" />
<path d="M1389.2 712.7L1395.2 715.1L1395.2 718.0L1389.5 715.9Z" fill="#6a6761" stroke="#151412" stroke-width="0.7" />
<path d="M1390.1 716.2L1394.9 718.3L1393.1 732.4L1388.6 730.9Z" fill="#7a7872" stroke="#151412" stroke-width="0.7" />
<path d="M1386.2 732.1L1388.6 730.9L1393.1 732.6L1393.1 734.4L1391.0 736.4L1386.8 733.9Z" fill="#5a5751" stroke="#151412" stroke-width="0.7" />
<circle cx="1412.5" cy="712.7" r="0.9" fill="#111"/>
<path d="M1033.1 763.8L1105.0 820.0L1115.0 810.0L1120.0 815.0L1106.2 827.5L1030.0 770.0Z" fill="#000" fill-opacity="0.16" filter="url(#b5)"/>
<path d="M1034.0 741.9L1107.5 791.9L1105.0 818.8L1033.1 762.8Z" fill="#6a6863" stroke="#151412" stroke-width="1.0" />
<path d="M1034.0 741.9L1041.2 738.5L1042.5 739.8L1050.0 735.6L1114.8 786.9L1112.5 788.8L1108.1 790.0L1107.5 791.9Z" fill="#6b675f" stroke="#151412" stroke-width="1.0" />
<path d="M1107.5 791.9L1108.1 790.0L1112.5 788.8L1114.8 786.9L1114.4 808.1L1110.0 810.2L1109.4 815.0L1105.0 818.8Z" fill="#4f4c46" stroke="#151412" stroke-width="1.0" />
<path d="M1044.4 748.8L1043.5 769.4" fill="none" stroke="#151412" stroke-width="0.6"/>
<path d="M645.0 787.0L745.8 716.5L751.2 720.5L651.2 791.2Z" fill="#000" fill-opacity="0.1" filter="url(#b5)"/>
<path d="M479.5 631.2L642.0 781.2L642.5 787.0L480.0 637.0Z" fill="#4a4742" stroke="#151412" stroke-width="0.7" />
<path d="M479.8 634.0L642.2 784.0" fill="none" stroke="#77746e" stroke-width="0.5"/>
<path d="M642.0 781.2L745.8 712.0L746.2 716.5L642.5 787.0Z" fill="#5a564e" stroke="#151412" stroke-width="0.7" />
<path d="M479.5 631.2L576.2 563.0L745.8 712.0L642.0 781.2Z M507.5 625.0L546.2 599.5L667.5 705.5L615.0 740.0L600.5 727.0L609.5 719.5L595.0 707.0L585.0 712.0L506.2 640.5L515.5 634.5Z M618.8 743.8L668.8 710.5L696.2 733.0L645.5 768.0Z M571.2 605.5L577.5 602.5L618.0 637.0L611.2 641.2Z M615.0 646.2L620.5 643.0L663.8 679.5L657.5 683.8Z M660.0 687.5L666.2 683.8L711.2 720.0L703.8 725.5Z M558.8 598.0L566.2 593.8L570.0 597.0L562.5 601.8Z" fill-rule="evenodd" fill="#9a9486" stroke="#151412" stroke-width="0.9"/>
<path d="M503.0 621.2L543.8 595.0L547.0 599.5L508.0 625.8Z" fill="#4f4c45" stroke="#151412" stroke-width="0.6" />
<path d="M567.5 602.5L574.5 599.0L577.5 602.5L571.2 605.5Z" fill="#4f4c45" stroke="#151412" stroke-width="0.5" />
<path d="M611.2 642.0L618.0 638.0L620.5 643.0L615.0 646.2Z" fill="#4f4c45" stroke="#151412" stroke-width="0.5" />
<path d="M656.2 683.8L663.8 680.0L666.2 683.8L660.0 687.5Z" fill="#4f4c45" stroke="#151412" stroke-width="0.5" />
<path d="M548.8 588.8L557.5 584.5L565.0 591.2L556.2 595.5Z" fill="#4f4c45" stroke="#151412" stroke-width="0.6" />
<path d="M615.0 740.0L667.5 706.0" fill="none" stroke="#151412" stroke-width="0.6"/>
<path d="M617.0 742.5L669.0 708.5" fill="none" stroke="#151412" stroke-width="0.6"/>
<path d="M570.0 586.2L582.5 581.2L680.0 668.0L669.5 675.0Z" fill="none" stroke="#151412" stroke-width="0.7" />
<path d="M577.0 573.8L582.5 572.0" fill="none" stroke="#333" stroke-width="1.2"/>
<path d="M580.5 577.5L586.2 575.8" fill="none" stroke="#333" stroke-width="1.2"/>
<path d="M878.4 719.5L884.1 716.4L885.9 717.9L886.7 724.1L880.8 727.4L879.3 726.4Z" fill="#45423d" stroke="#151412" stroke-width="0.7" />
<path d="M878.4 719.5L884.1 716.4L885.9 717.9L879.9 721.2Z" fill="#5f5c55" stroke="#151412" stroke-width="0.5" />
<path d="M896.5 734.5L902.2 731.4L904.0 732.8L904.9 739.0L898.9 742.4L897.4 741.4Z" fill="#45423d" stroke="#151412" stroke-width="0.7" />
<path d="M896.5 734.5L902.2 731.4L904.0 732.8L898.0 736.1Z" fill="#5f5c55" stroke="#151412" stroke-width="0.5" />
<path d="M888.7 770.2L903.6 758.8L906.5 759.1L886.4 775.2Z" fill="#4f4c46" stroke="#151412" stroke-width="0.7" />
<path d="M872.0 763.5L875.4 757.7L888.7 770.2L886.2 775.2Z" fill="#9b9993" stroke="#151412" stroke-width="0.7" />
<path d="M875.4 757.7L890.9 746.9L903.6 758.8L888.7 770.2Z" fill="#938d80" stroke="#151412" stroke-width="0.8" />
<path d="M982.9 724.1L992.9 718.3L997.0 719.5L998.7 724.9L989.6 729.9L988.3 734.1L984.6 734.9Z" fill="#4f4c46" stroke="#151412" stroke-width="0.7" />
<path d="M988.3 722.0L992.1 728.7" fill="none" stroke="#151412" stroke-width="0.6"/>
<path d="M992.5 719.3L995.4 726.6" fill="none" stroke="#151412" stroke-width="0.6"/>
<path d="M968.0 724.9L970.5 720.8L975.4 719.5L982.9 724.1L988.3 734.1L979.6 738.9L976.3 736.5Z" fill="#5a5751" stroke="#151412" stroke-width="0.8" />
<path d="M970.5 724.9L979.6 727.4L982.9 724.1" fill="none" stroke="#151412" stroke-width="0.6"/>
<path d="M979.6 727.4L981.3 736.5" fill="none" stroke="#151412" stroke-width="0.6"/>
<path d="M967.6 721.2L970.9 719.3L972.1 720.8L968.8 723.7Z" fill="#6a6761" stroke="#151412" stroke-width="0.6" />
<path d="M940.0 998.8L1005.8 946.2L1007.5 950.0L942.5 1001.2Z" fill="#000" fill-opacity="0.12" filter="url(#b3)"/>
<path d="M713.8 843.8L810.8 773.8L1005.8 943.2L906.2 1021.8Z" fill="#9c9688" stroke="#151412" stroke-width="1.0" />
<circle cx="811.2" cy="796.8" r="1.3" fill="#2a2925"/>
<circle cx="735.0" cy="847.2" r="1.3" fill="#2a2925"/>
<circle cx="890.8" cy="866.8" r="1.3" fill="#2a2925"/>
<circle cx="977.0" cy="942.2" r="1.3" fill="#2a2925"/>
<circle cx="846.5" cy="949.8" r="1.3" fill="#2a2925"/>
<circle cx="899.5" cy="998.8" r="1.3" fill="#2a2925"/>
<path d="M1052.5 908.0L1070.0 896.2L1072.0 897.5L1051.2 913.8Z" fill="#4f4c46" stroke="#151412" stroke-width="0.7" />
<path d="M1036.2 900.0L1039.2 897.0L1052.5 908.0L1051.2 913.8Z" fill="#9b9993" stroke="#151412" stroke-width="0.7" />
<path d="M1039.2 897.0L1055.0 883.0L1070.0 896.2L1052.5 908.0Z" fill="#938d80" stroke="#151412" stroke-width="0.8" />
<path d="M721.0 1130.0L798.7 1069.0L802.6 1079.0L720.8 1139.3L664.5 1082.2L670.3 1077.2Z" fill="#000" fill-opacity="0.13" filter="url(#b4)"/>
<path d="M798.7 1069.0L721.0 1130.0L672.7 1079.7L672.7 1083.7L721.0 1134.0L798.7 1073.0Z" fill="#55534c" stroke="#151412" stroke-width="0.7" />
<path d="M552.0 954.0L667.1 1073.9L667.1 1077.9L552.0 958.0Z" fill="#55534c" stroke="#151412" stroke-width="0.7" />
<path d="M612.0 889.0L798.7 1069.0L721.0 1130.0L672.7 1079.7L679.5 1073.8L674.7 1068.8L667.9 1074.7L552.0 954.0Z" fill="#45433e" stroke="#151412" stroke-width="0.8" />
<path d="M602.6 894.7L786.4 1074.1L780.1 1079.1L597.7 900.0Z" fill="#8c8678" stroke="#151412" stroke-width="0.6" />
<path d="M597.7 900.0L780.1 1079.1L779.8 1082.3L597.5 903.2Z" fill="#5a5852" stroke="#151412" stroke-width="0.4" />
<path d="M618.8 889.8L612.8 896.2L610.8 903.6L619.4 894.4Z" fill="#42423e" stroke="#141412" stroke-width="0.65" />
<path d="M606.6 890.2L612.8 896.2L610.8 903.6L603.8 896.7Z" fill="#6b6b66" stroke="#141412" stroke-width="0.65" />
<path d="M612.5 883.8L618.8 889.8L612.8 896.2L606.6 890.2Z" fill="#908a7c" stroke="#141412" stroke-width="0.65" />
<path d="M628.7 899.4L622.6 905.8L620.7 913.1L629.4 904.0Z" fill="#42423e" stroke="#141412" stroke-width="0.65" />
<path d="M616.4 899.8L622.6 905.8L620.7 913.1L613.6 906.2Z" fill="#6b6b66" stroke="#141412" stroke-width="0.65" />
<path d="M622.4 893.3L628.7 899.4L622.6 905.8L616.4 899.8Z" fill="#908a7c" stroke="#141412" stroke-width="0.65" />
<path d="M602.9 905.2L597.1 911.5L595.2 918.7L603.5 909.8Z" fill="#42423e" stroke="#141412" stroke-width="0.65" />
<path d="M591.1 905.5L597.1 911.5L595.2 918.7L588.4 911.9Z" fill="#6b6b66" stroke="#141412" stroke-width="0.65" />
<path d="M596.9 899.2L602.9 905.2L597.1 911.5L591.1 905.5Z" fill="#908a7c" stroke="#141412" stroke-width="0.65" />
<path d="M636.5 906.9L630.3 913.3L628.3 920.6L637.1 911.5Z" fill="#42423e" stroke="#141412" stroke-width="0.65" />
<path d="M624.0 907.2L630.3 913.3L628.3 920.6L621.1 913.6Z" fill="#6b6b66" stroke="#141412" stroke-width="0.65" />
<path d="M630.1 900.8L636.5 906.9L630.3 913.3L624.0 907.2Z" fill="#908a7c" stroke="#141412" stroke-width="0.65" />
<path d="M610.3 912.4L604.4 918.7L602.5 925.9L610.9 917.1Z" fill="#42423e" stroke="#141412" stroke-width="0.65" />
<path d="M598.3 912.7L604.4 918.7L602.5 925.9L595.6 919.0Z" fill="#6b6b66" stroke="#141412" stroke-width="0.65" />
<path d="M604.2 906.4L610.3 912.4L604.4 918.7L598.3 912.7Z" fill="#908a7c" stroke="#141412" stroke-width="0.65" />
<path d="M644.3 914.4L638.0 920.8L636.0 928.1L644.9 919.1Z" fill="#42423e" stroke="#141412" stroke-width="0.65" />
<path d="M631.7 914.6L638.0 920.8L636.0 928.1L628.8 921.1Z" fill="#6b6b66" stroke="#141412" stroke-width="0.65" />
<path d="M637.9 908.2L644.3 914.4L638.0 920.8L631.7 914.6Z" fill="#908a7c" stroke="#141412" stroke-width="0.65" />
<path d="M593.7 915.1L587.9 921.3L586.1 928.5L594.3 919.7Z" fill="#42423e" stroke="#141412" stroke-width="0.65" />
<path d="M582.0 915.3L587.9 921.3L586.1 928.5L579.3 921.7Z" fill="#6b6b66" stroke="#141412" stroke-width="0.65" />
<path d="M587.7 909.2L593.7 915.1L587.9 921.3L582.0 915.3Z" fill="#908a7c" stroke="#141412" stroke-width="0.65" />
<path d="M617.7 919.7L611.7 926.0L609.8 933.2L618.3 924.4Z" fill="#42423e" stroke="#141412" stroke-width="0.65" />
<path d="M605.6 919.9L611.7 926.0L609.8 933.2L602.8 926.3Z" fill="#6b6b66" stroke="#141412" stroke-width="0.65" />
<path d="M611.5 913.7L617.7 919.7L611.7 926.0L605.6 919.9Z" fill="#908a7c" stroke="#141412" stroke-width="0.65" />
<path d="M652.2 922.0L645.8 928.4L643.8 935.7L652.8 926.7Z" fill="#42423e" stroke="#141412" stroke-width="0.65" />
<path d="M639.4 922.2L645.8 928.4L643.8 935.7L636.5 928.6Z" fill="#6b6b66" stroke="#141412" stroke-width="0.65" />
<path d="M645.7 915.8L652.2 922.0L645.8 928.4L639.4 922.2Z" fill="#908a7c" stroke="#141412" stroke-width="0.65" />
<path d="M600.9 922.3L595.1 928.5L593.3 935.7L601.5 927.0Z" fill="#42423e" stroke="#141412" stroke-width="0.65" />
<path d="M589.1 922.5L595.1 928.5L593.3 935.7L586.4 928.8Z" fill="#6b6b66" stroke="#141412" stroke-width="0.65" />
<path d="M594.9 916.3L600.9 922.3L595.1 928.5L589.1 922.5Z" fill="#908a7c" stroke="#141412" stroke-width="0.65" />
<path d="M584.6 924.9L578.9 930.9L577.1 938.1L585.2 929.5Z" fill="#42423e" stroke="#141412" stroke-width="0.65" />
<path d="M573.1 925.0L578.9 930.9L577.1 938.1L570.4 931.3Z" fill="#6b6b66" stroke="#141412" stroke-width="0.65" />
<path d="M578.7 918.9L584.6 924.9L578.9 930.9L573.1 925.0Z" fill="#908a7c" stroke="#141412" stroke-width="0.65" />
<path d="M625.2 927.1L619.2 933.3L617.2 940.6L625.8 931.7Z" fill="#42423e" stroke="#141412" stroke-width="0.65" />
<path d="M613.0 927.2L619.2 933.3L617.2 940.6L610.2 933.6Z" fill="#6b6b66" stroke="#141412" stroke-width="0.65" />
<path d="M619.0 921.0L625.2 927.1L619.2 933.3L613.0 927.2Z" fill="#908a7c" stroke="#141412" stroke-width="0.65" />
<path d="M608.2 929.6L602.4 935.7L600.5 943.0L608.8 934.2Z" fill="#42423e" stroke="#141412" stroke-width="0.65" />
<path d="M596.3 929.7L602.4 935.7L600.5 943.0L593.6 936.0Z" fill="#6b6b66" stroke="#141412" stroke-width="0.65" />
<path d="M602.1 923.6L608.2 929.6L602.4 935.7L596.3 929.7Z" fill="#908a7c" stroke="#141412" stroke-width="0.65" />
<path d="M660.1 929.7L653.7 936.1L651.7 943.4L660.8 934.4Z" fill="#42423e" stroke="#141412" stroke-width="0.65" />
<path d="M647.3 929.8L653.7 936.1L651.7 943.4L644.3 936.2Z" fill="#6b6b66" stroke="#141412" stroke-width="0.65" />
<path d="M653.6 923.4L660.1 929.7L653.7 936.1L647.3 929.8Z" fill="#908a7c" stroke="#141412" stroke-width="0.65" />
<path d="M591.7 932.1L586.0 938.1L584.2 945.3L592.3 936.7Z" fill="#42423e" stroke="#141412" stroke-width="0.65" />
<path d="M580.1 932.1L586.0 938.1L584.2 945.3L577.4 938.4Z" fill="#6b6b66" stroke="#141412" stroke-width="0.65" />
<path d="M585.8 926.1L591.7 932.1L586.0 938.1L580.1 932.1Z" fill="#908a7c" stroke="#141412" stroke-width="0.65" />
<path d="M575.6 934.5L570.1 940.4L568.3 947.5L576.2 939.1Z" fill="#42423e" stroke="#141412" stroke-width="0.65" />
<path d="M564.3 934.5L570.1 940.4L568.3 947.5L561.7 940.7Z" fill="#6b6b66" stroke="#141412" stroke-width="0.65" />
<path d="M569.8 928.5L575.6 934.5L570.1 940.4L564.3 934.5Z" fill="#908a7c" stroke="#141412" stroke-width="0.65" />
<path d="M632.8 934.5L626.7 940.8L624.7 948.0L633.4 939.2Z" fill="#42423e" stroke="#141412" stroke-width="0.65" />
<path d="M620.4 934.6L626.7 940.8L624.7 948.0L617.6 940.9Z" fill="#6b6b66" stroke="#141412" stroke-width="0.65" />
<path d="M626.5 928.3L632.8 934.5L626.7 940.8L620.4 934.6Z" fill="#908a7c" stroke="#141412" stroke-width="0.65" />
<path d="M615.6 937.0L609.7 943.1L607.8 950.3L616.2 941.6Z" fill="#42423e" stroke="#141412" stroke-width="0.65" />
<path d="M603.6 937.0L609.7 943.1L607.8 950.3L600.8 943.3Z" fill="#6b6b66" stroke="#141412" stroke-width="0.65" />
<path d="M609.5 930.8L615.6 937.0L609.7 943.1L603.6 937.0Z" fill="#908a7c" stroke="#141412" stroke-width="0.65" />
<path d="M598.9 939.3L593.2 945.4L591.3 952.5L599.5 944.0Z" fill="#42423e" stroke="#141412" stroke-width="0.65" />
<path d="M587.2 939.3L593.2 945.4L591.3 952.5L584.5 945.6Z" fill="#6b6b66" stroke="#141412" stroke-width="0.65" />
<path d="M592.9 933.3L598.9 939.3L593.2 945.4L587.2 939.3Z" fill="#908a7c" stroke="#141412" stroke-width="0.65" />
<path d="M670.6 939.8L664.1 946.2L662.0 953.5L671.3 944.5Z" fill="#42423e" stroke="#141412" stroke-width="0.65" />
<path d="M657.6 939.8L664.1 946.2L662.0 953.5L654.5 946.2Z" fill="#6b6b66" stroke="#141412" stroke-width="0.65" />
<path d="M664.0 933.4L670.6 939.8L664.1 946.2L657.6 939.8Z" fill="#908a7c" stroke="#141412" stroke-width="0.65" />
<path d="M582.7 941.6L577.0 947.6L575.3 954.7L583.2 946.3Z" fill="#42423e" stroke="#141412" stroke-width="0.65" />
<path d="M571.2 941.6L577.0 947.6L575.3 954.7L568.6 947.9Z" fill="#6b6b66" stroke="#141412" stroke-width="0.65" />
<path d="M576.8 935.7L582.7 941.6L577.0 947.6L571.2 941.6Z" fill="#908a7c" stroke="#141412" stroke-width="0.65" />
<path d="M640.4 942.0L634.2 948.2L632.2 955.5L641.0 946.7Z" fill="#42423e" stroke="#141412" stroke-width="0.65" />
<path d="M627.9 942.0L634.2 948.2L632.2 955.5L625.0 948.3Z" fill="#6b6b66" stroke="#141412" stroke-width="0.65" />
<path d="M634.0 935.8L640.4 942.0L634.2 948.2L627.9 942.0Z" fill="#908a7c" stroke="#141412" stroke-width="0.65" />
<path d="M566.8 943.9L561.3 949.7L559.6 956.8L567.4 948.5Z" fill="#42423e" stroke="#141412" stroke-width="0.65" />
<path d="M555.6 943.8L561.3 949.7L559.6 956.8L553.1 950.0Z" fill="#6b6b66" stroke="#141412" stroke-width="0.65" />
<path d="M561.1 938.0L566.8 943.9L561.3 949.7L555.6 943.8Z" fill="#908a7c" stroke="#141412" stroke-width="0.65" />
<path d="M623.1 944.4L617.1 950.5L615.2 957.7L623.7 949.0Z" fill="#42423e" stroke="#141412" stroke-width="0.65" />
<path d="M610.9 944.3L617.1 950.5L615.2 957.7L608.1 950.6Z" fill="#6b6b66" stroke="#141412" stroke-width="0.65" />
<path d="M616.9 938.2L623.1 944.4L617.1 950.5L610.9 944.3Z" fill="#908a7c" stroke="#141412" stroke-width="0.65" />
<path d="M606.2 946.7L600.4 952.7L598.5 959.8L606.8 951.3Z" fill="#42423e" stroke="#141412" stroke-width="0.65" />
<path d="M594.4 946.6L600.4 952.7L598.5 959.8L591.6 952.9Z" fill="#6b6b66" stroke="#141412" stroke-width="0.65" />
<path d="M600.1 940.6L606.2 946.7L600.4 952.7L594.4 946.6Z" fill="#908a7c" stroke="#141412" stroke-width="0.65" />
<path d="M678.7 947.7L672.2 954.0L670.1 961.3L679.4 952.3Z" fill="#42423e" stroke="#141412" stroke-width="0.65" />
<path d="M665.5 947.6L672.2 954.0L670.1 961.3L662.5 954.0Z" fill="#6b6b66" stroke="#141412" stroke-width="0.65" />
<path d="M672.1 941.2L678.7 947.7L672.2 954.0L665.5 947.6Z" fill="#908a7c" stroke="#141412" stroke-width="0.65" />
<path d="M589.8 948.9L584.1 954.8L582.3 961.9L590.4 953.5Z" fill="#42423e" stroke="#141412" stroke-width="0.65" />
<path d="M578.2 948.8L584.1 954.8L582.3 961.9L575.6 955.0Z" fill="#6b6b66" stroke="#141412" stroke-width="0.65" />
<path d="M583.8 942.9L589.8 948.9L584.1 954.8L578.2 948.8Z" fill="#908a7c" stroke="#141412" stroke-width="0.65" />
<path d="M648.1 949.6L641.8 955.8L639.8 963.1L648.7 954.3Z" fill="#42423e" stroke="#141412" stroke-width="0.65" />
<path d="M635.5 949.5L641.8 955.8L639.8 963.1L632.6 955.8Z" fill="#6b6b66" stroke="#141412" stroke-width="0.65" />
<path d="M641.7 943.3L648.1 949.6L641.8 955.8L635.5 949.5Z" fill="#908a7c" stroke="#141412" stroke-width="0.65" />
<path d="M573.9 951.2L568.3 957.0L566.6 964.1L574.4 955.8Z" fill="#42423e" stroke="#141412" stroke-width="0.65" />
<path d="M562.6 951.0L568.3 957.0L566.6 964.1L560.0 957.2Z" fill="#6b6b66" stroke="#141412" stroke-width="0.65" />
<path d="M568.1 945.2L573.9 951.2L568.3 957.0L562.6 951.0Z" fill="#908a7c" stroke="#141412" stroke-width="0.65" />
<path d="M630.6 951.9L624.5 958.0L622.6 965.2L631.2 956.5Z" fill="#42423e" stroke="#141412" stroke-width="0.65" />
<path d="M618.3 951.7L624.5 958.0L622.6 965.2L615.5 958.0Z" fill="#6b6b66" stroke="#141412" stroke-width="0.65" />
<path d="M624.3 945.6L630.6 951.9L624.5 958.0L618.3 951.7Z" fill="#908a7c" stroke="#141412" stroke-width="0.65" />
<path d="M613.5 954.1L607.6 960.1L605.8 967.2L614.2 958.7Z" fill="#42423e" stroke="#141412" stroke-width="0.65" />
<path d="M601.6 953.9L607.6 960.1L605.8 967.2L598.8 960.2Z" fill="#6b6b66" stroke="#141412" stroke-width="0.65" />
<path d="M607.4 947.9L613.5 954.1L607.6 960.1L601.6 953.9Z" fill="#908a7c" stroke="#141412" stroke-width="0.65" />
<path d="M686.9 955.6L680.3 961.9L678.2 969.2L687.6 960.3Z" fill="#42423e" stroke="#141412" stroke-width="0.65" />
<path d="M673.6 955.4L680.3 961.9L678.2 969.2L670.5 961.8Z" fill="#6b6b66" stroke="#141412" stroke-width="0.65" />
<path d="M680.2 949.1L686.9 955.6L680.3 961.9L673.6 955.4Z" fill="#908a7c" stroke="#141412" stroke-width="0.65" />
<path d="M596.9 956.2L591.2 962.1L589.4 969.2L597.5 960.8Z" fill="#42423e" stroke="#141412" stroke-width="0.65" />
<path d="M585.3 956.0L591.2 962.1L589.4 969.2L582.6 962.3Z" fill="#6b6b66" stroke="#141412" stroke-width="0.65" />
<path d="M591.0 950.1L596.9 956.2L591.2 962.1L585.3 956.0Z" fill="#908a7c" stroke="#141412" stroke-width="0.65" />
<path d="M655.9 957.3L649.5 963.4L647.5 970.7L656.5 961.9Z" fill="#42423e" stroke="#141412" stroke-width="0.65" />
<path d="M643.1 957.1L649.5 963.4L647.5 970.7L640.2 963.4Z" fill="#6b6b66" stroke="#141412" stroke-width="0.65" />
<path d="M649.4 950.9L655.9 957.3L649.5 963.4L643.1 957.1Z" fill="#908a7c" stroke="#141412" stroke-width="0.65" />
<path d="M581.0 958.5L575.4 964.3L573.6 971.4L581.6 963.1Z" fill="#42423e" stroke="#141412" stroke-width="0.65" />
<path d="M569.6 958.3L575.4 964.3L573.6 971.4L567.0 964.5Z" fill="#6b6b66" stroke="#141412" stroke-width="0.65" />
<path d="M575.1 952.5L581.0 958.5L575.4 964.3L569.6 958.3Z" fill="#908a7c" stroke="#141412" stroke-width="0.65" />
<path d="M638.2 959.4L632.0 965.5L630.1 972.7L638.8 964.1Z" fill="#42423e" stroke="#141412" stroke-width="0.65" />
<path d="M625.8 959.2L632.0 965.5L630.1 972.7L622.9 965.5Z" fill="#6b6b66" stroke="#141412" stroke-width="0.65" />
<path d="M631.9 953.1L638.2 959.4L632.0 965.5L625.8 959.2Z" fill="#908a7c" stroke="#141412" stroke-width="0.65" />
<path d="M621.0 961.5L615.0 967.5L613.1 974.7L621.6 966.2Z" fill="#42423e" stroke="#141412" stroke-width="0.65" />
<path d="M608.9 961.3L615.0 967.5L613.1 974.7L606.1 967.6Z" fill="#6b6b66" stroke="#141412" stroke-width="0.65" />
<path d="M614.8 955.3L621.0 961.5L615.0 967.5L608.9 961.3Z" fill="#908a7c" stroke="#141412" stroke-width="0.65" />
<path d="M604.2 963.6L598.4 969.5L596.5 976.6L604.8 968.2Z" fill="#42423e" stroke="#141412" stroke-width="0.65" />
<path d="M592.4 963.3L598.4 969.5L596.5 976.6L589.7 969.6Z" fill="#6b6b66" stroke="#141412" stroke-width="0.65" />
<path d="M598.2 957.4L604.2 963.6L598.4 969.5L592.4 963.3Z" fill="#908a7c" stroke="#141412" stroke-width="0.65" />
<path d="M695.2 963.6L688.5 969.9L686.4 977.2L695.9 968.3Z" fill="#42423e" stroke="#141412" stroke-width="0.65" />
<path d="M681.8 963.4L688.5 969.9L686.4 977.2L678.7 969.7Z" fill="#6b6b66" stroke="#141412" stroke-width="0.65" />
<path d="M688.4 957.0L695.2 963.6L688.5 969.9L681.8 963.4Z" fill="#908a7c" stroke="#141412" stroke-width="0.65" />
<path d="M663.7 965.0L657.3 971.1L655.3 978.4L664.4 969.6Z" fill="#42423e" stroke="#141412" stroke-width="0.65" />
<path d="M650.8 964.7L657.3 971.1L655.3 978.4L647.9 971.0Z" fill="#6b6b66" stroke="#141412" stroke-width="0.65" />
<path d="M657.2 958.6L663.7 965.0L657.3 971.1L650.8 964.7Z" fill="#908a7c" stroke="#141412" stroke-width="0.65" />
<path d="M645.8 967.0L639.6 973.1L637.6 980.3L646.5 971.7Z" fill="#42423e" stroke="#141412" stroke-width="0.65" />
<path d="M633.3 966.8L639.6 973.1L637.6 980.3L630.4 973.0Z" fill="#6b6b66" stroke="#141412" stroke-width="0.65" />
<path d="M639.4 960.7L645.8 967.0L639.6 973.1L633.3 966.8Z" fill="#908a7c" stroke="#141412" stroke-width="0.65" />
<path d="M628.4 969.1L622.4 975.0L620.5 982.2L629.1 973.7Z" fill="#42423e" stroke="#141412" stroke-width="0.65" />
<path d="M616.2 968.8L622.4 975.0L620.5 982.2L613.4 975.0Z" fill="#6b6b66" stroke="#141412" stroke-width="0.65" />
<path d="M622.2 962.8L628.4 969.1L622.4 975.0L616.2 968.8Z" fill="#908a7c" stroke="#141412" stroke-width="0.65" />
<path d="M611.5 971.0L605.6 976.9L603.8 984.0L612.1 975.7Z" fill="#42423e" stroke="#141412" stroke-width="0.65" />
<path d="M599.6 970.7L605.6 976.9L603.8 984.0L596.9 976.9Z" fill="#6b6b66" stroke="#141412" stroke-width="0.65" />
<path d="M605.4 964.8L611.5 971.0L605.6 976.9L599.6 970.7Z" fill="#908a7c" stroke="#141412" stroke-width="0.65" />
<path d="M703.6 971.7L696.8 978.0L694.6 985.3L704.3 976.4Z" fill="#42423e" stroke="#141412" stroke-width="0.65" />
<path d="M690.0 971.4L696.8 978.0L694.6 985.3L686.9 977.7Z" fill="#6b6b66" stroke="#141412" stroke-width="0.65" />
<path d="M696.7 965.1L703.6 971.7L696.8 978.0L690.0 971.4Z" fill="#908a7c" stroke="#141412" stroke-width="0.65" />
<path d="M671.6 972.8L665.1 978.9L663.1 986.1L672.3 977.4Z" fill="#42423e" stroke="#141412" stroke-width="0.65" />
<path d="M658.6 972.4L665.1 978.9L663.1 986.1L655.6 978.7Z" fill="#6b6b66" stroke="#141412" stroke-width="0.65" />
<path d="M665.0 966.3L671.6 972.8L665.1 978.9L658.6 972.4Z" fill="#908a7c" stroke="#141412" stroke-width="0.65" />
<path d="M653.6 974.7L647.3 980.8L645.3 988.0L654.2 979.4Z" fill="#42423e" stroke="#141412" stroke-width="0.65" />
<path d="M640.9 974.4L647.3 980.8L645.3 988.0L638.0 980.7Z" fill="#6b6b66" stroke="#141412" stroke-width="0.65" />
<path d="M647.1 968.3L653.6 974.7L647.3 980.8L640.9 974.4Z" fill="#908a7c" stroke="#141412" stroke-width="0.65" />
<path d="M636.0 976.7L629.9 982.6L627.9 989.8L636.6 981.3Z" fill="#42423e" stroke="#141412" stroke-width="0.65" />
<path d="M623.6 976.3L629.9 982.6L627.9 989.8L620.8 982.5Z" fill="#6b6b66" stroke="#141412" stroke-width="0.65" />
<path d="M629.7 970.3L636.0 976.7L629.9 982.6L623.6 976.3Z" fill="#908a7c" stroke="#141412" stroke-width="0.65" />
<path d="M618.9 978.5L612.9 984.4L611.0 991.5L619.5 983.2Z" fill="#42423e" stroke="#141412" stroke-width="0.65" />
<path d="M606.8 978.1L612.9 984.4L611.0 991.5L604.1 984.4Z" fill="#6b6b66" stroke="#141412" stroke-width="0.65" />
<path d="M612.7 972.3L618.9 978.5L612.9 984.4L606.8 978.1Z" fill="#908a7c" stroke="#141412" stroke-width="0.65" />
<path d="M679.6 980.6L673.0 986.7L671.0 994.0L680.3 985.3Z" fill="#42423e" stroke="#141412" stroke-width="0.65" />
<path d="M666.5 980.2L673.0 986.7L671.0 994.0L663.4 986.5Z" fill="#6b6b66" stroke="#141412" stroke-width="0.65" />
<path d="M672.9 974.1L679.6 980.6L673.0 986.7L666.5 980.2Z" fill="#908a7c" stroke="#141412" stroke-width="0.65" />
<path d="M714.6 982.3L707.7 988.6L705.5 995.9L715.3 987.0Z" fill="#42423e" stroke="#141412" stroke-width="0.65" />
<path d="M700.8 981.9L707.7 988.6L705.5 995.9L697.6 988.2Z" fill="#6b6b66" stroke="#141412" stroke-width="0.65" />
<path d="M707.7 975.6L714.6 982.3L707.7 988.6L700.8 981.9Z" fill="#908a7c" stroke="#141412" stroke-width="0.65" />
<path d="M661.3 982.5L655.0 988.5L653.0 995.7L662.0 987.2Z" fill="#42423e" stroke="#141412" stroke-width="0.65" />
<path d="M648.6 982.1L655.0 988.5L653.0 995.7L645.6 988.3Z" fill="#6b6b66" stroke="#141412" stroke-width="0.65" />
<path d="M654.9 976.0L661.3 982.5L655.0 988.5L648.6 982.1Z" fill="#908a7c" stroke="#141412" stroke-width="0.65" />
<path d="M643.6 984.3L637.4 990.3L635.4 997.4L644.2 989.0Z" fill="#42423e" stroke="#141412" stroke-width="0.65" />
<path d="M631.1 983.9L637.4 990.3L635.4 997.4L628.3 990.1Z" fill="#6b6b66" stroke="#141412" stroke-width="0.65" />
<path d="M637.2 977.9L643.6 984.3L637.4 990.3L631.1 983.9Z" fill="#908a7c" stroke="#141412" stroke-width="0.65" />
<path d="M626.3 986.1L620.3 991.9L618.4 999.1L626.9 990.7Z" fill="#42423e" stroke="#141412" stroke-width="0.65" />
<path d="M614.2 985.6L620.3 991.9L618.4 999.1L611.4 991.8Z" fill="#6b6b66" stroke="#141412" stroke-width="0.65" />
<path d="M620.1 979.8L626.3 986.1L620.3 991.9L614.2 985.6Z" fill="#908a7c" stroke="#141412" stroke-width="0.65" />
<path d="M627.7 1006.7L621.7 1012.4L619.8 1019.4L628.3 1011.3Z" fill="#42423e" stroke="#141412" stroke-width="0.65" />
<path d="M577.0 966.0L621.7 1012.4L619.8 1019.4L574.4 972.2Z" fill="#6b6b66" stroke="#141412" stroke-width="0.65" />
<path d="M582.6 960.2L627.7 1006.7L621.7 1012.4L577.0 966.0Z" fill="#908a7c" stroke="#141412" stroke-width="0.65" />
<path d="M687.7 988.6L681.0 994.7L678.9 1001.9L688.3 993.2Z" fill="#42423e" stroke="#141412" stroke-width="0.65" />
<path d="M674.4 988.1L681.0 994.7L678.9 1001.9L671.3 994.3Z" fill="#6b6b66" stroke="#141412" stroke-width="0.65" />
<path d="M680.9 981.9L687.7 988.6L681.0 994.7L674.4 988.1Z" fill="#908a7c" stroke="#141412" stroke-width="0.65" />
<path d="M669.2 990.3L662.8 996.3L660.7 1003.5L669.9 995.0Z" fill="#42423e" stroke="#141412" stroke-width="0.65" />
<path d="M656.3 989.8L662.8 996.3L660.7 1003.5L653.3 996.1Z" fill="#6b6b66" stroke="#141412" stroke-width="0.65" />
<path d="M662.7 983.8L669.2 990.3L662.8 996.3L656.3 989.8Z" fill="#908a7c" stroke="#141412" stroke-width="0.65" />
<path d="M723.2 990.6L716.2 996.8L714.0 1004.1L723.9 995.3Z" fill="#42423e" stroke="#141412" stroke-width="0.65" />
<path d="M709.2 990.1L716.2 996.8L714.0 1004.1L706.0 996.4Z" fill="#6b6b66" stroke="#141412" stroke-width="0.65" />
<path d="M716.2 983.8L723.2 990.6L716.2 996.8L709.2 990.1Z" fill="#908a7c" stroke="#141412" stroke-width="0.65" />
<path d="M651.3 992.1L645.0 998.0L643.0 1005.1L651.9 996.7Z" fill="#42423e" stroke="#141412" stroke-width="0.65" />
<path d="M638.7 991.5L645.0 998.0L643.0 1005.1L635.8 997.8Z" fill="#6b6b66" stroke="#141412" stroke-width="0.65" />
<path d="M644.9 985.6L651.3 992.1L645.0 998.0L638.7 991.5Z" fill="#908a7c" stroke="#141412" stroke-width="0.65" />
<path d="M633.8 993.7L627.7 999.6L625.8 1006.7L634.4 998.4Z" fill="#42423e" stroke="#141412" stroke-width="0.65" />
<path d="M621.5 993.2L627.7 999.6L625.8 1006.7L618.7 999.4Z" fill="#6b6b66" stroke="#141412" stroke-width="0.65" />
<path d="M627.5 987.4L633.8 993.7L627.7 999.6L621.5 993.2Z" fill="#908a7c" stroke="#141412" stroke-width="0.65" />
<path d="M695.8 996.6L689.1 1002.6L687.0 1009.9L696.5 1001.2Z" fill="#42423e" stroke="#141412" stroke-width="0.65" />
<path d="M682.4 996.0L689.1 1002.6L687.0 1009.9L679.3 1002.3Z" fill="#6b6b66" stroke="#141412" stroke-width="0.65" />
<path d="M689.0 989.9L695.8 996.6L689.1 1002.6L682.4 996.0Z" fill="#908a7c" stroke="#141412" stroke-width="0.65" />
<path d="M677.2 998.2L670.7 1004.2L668.6 1011.4L677.8 1002.9Z" fill="#42423e" stroke="#141412" stroke-width="0.65" />
<path d="M664.1 997.7L670.7 1004.2L668.6 1011.4L661.1 1003.9Z" fill="#6b6b66" stroke="#141412" stroke-width="0.65" />
<path d="M670.5 991.6L677.2 998.2L670.7 1004.2L664.1 997.7Z" fill="#908a7c" stroke="#141412" stroke-width="0.65" />
<path d="M731.8 998.9L724.8 1005.2L722.5 1012.5L732.6 1003.6Z" fill="#42423e" stroke="#141412" stroke-width="0.65" />
<path d="M717.7 998.3L724.8 1005.2L722.5 1012.5L714.5 1004.6Z" fill="#6b6b66" stroke="#141412" stroke-width="0.65" />
<path d="M724.7 992.1L731.8 998.9L724.8 1005.2L717.7 998.3Z" fill="#908a7c" stroke="#141412" stroke-width="0.65" />
<path d="M659.0 999.9L652.7 1005.8L650.7 1012.9L659.7 1004.5Z" fill="#42423e" stroke="#141412" stroke-width="0.65" />
<path d="M646.3 999.3L652.7 1005.8L650.7 1012.9L643.4 1005.5Z" fill="#6b6b66" stroke="#141412" stroke-width="0.65" />
<path d="M652.6 993.4L659.0 999.9L652.7 1005.8L646.3 999.3Z" fill="#908a7c" stroke="#141412" stroke-width="0.65" />
<path d="M641.4 1001.4L635.2 1007.3L633.3 1014.4L642.0 1006.1Z" fill="#42423e" stroke="#141412" stroke-width="0.65" />
<path d="M629.0 1000.9L635.2 1007.3L633.3 1014.4L626.1 1007.0Z" fill="#6b6b66" stroke="#141412" stroke-width="0.65" />
<path d="M635.1 995.0L641.4 1001.4L635.2 1007.3L629.0 1000.9Z" fill="#908a7c" stroke="#141412" stroke-width="0.65" />
<path d="M704.0 1004.6L697.2 1010.7L695.1 1018.0L704.7 1009.3Z" fill="#42423e" stroke="#141412" stroke-width="0.65" />
<path d="M690.5 1004.0L697.2 1010.7L695.1 1018.0L687.3 1010.3Z" fill="#6b6b66" stroke="#141412" stroke-width="0.65" />
<path d="M697.2 997.9L704.0 1004.6L697.2 1010.7L690.5 1004.0Z" fill="#908a7c" stroke="#141412" stroke-width="0.65" />
<path d="M685.2 1006.2L678.6 1012.2L676.5 1019.4L685.8 1010.9Z" fill="#42423e" stroke="#141412" stroke-width="0.65" />
<path d="M672.0 1005.6L678.6 1012.2L676.5 1019.4L668.9 1011.8Z" fill="#6b6b66" stroke="#141412" stroke-width="0.65" />
<path d="M678.5 999.6L685.2 1006.2L678.6 1012.2L672.0 1005.6Z" fill="#908a7c" stroke="#141412" stroke-width="0.65" />
<path d="M740.6 1007.4L733.4 1013.6L731.1 1020.9L741.3 1012.1Z" fill="#42423e" stroke="#141412" stroke-width="0.65" />
<path d="M726.3 1006.7L733.4 1013.6L731.1 1020.9L723.0 1013.0Z" fill="#6b6b66" stroke="#141412" stroke-width="0.65" />
<path d="M733.4 1000.4L740.6 1007.4L733.4 1013.6L726.3 1006.7Z" fill="#908a7c" stroke="#141412" stroke-width="0.65" />
<path d="M666.8 1007.7L660.5 1013.6L658.4 1020.8L667.5 1012.4Z" fill="#42423e" stroke="#141412" stroke-width="0.65" />
<path d="M654.0 1007.1L660.5 1013.6L658.4 1020.8L651.0 1013.3Z" fill="#6b6b66" stroke="#141412" stroke-width="0.65" />
<path d="M660.3 1001.2L666.8 1007.7L660.5 1013.6L654.0 1007.1Z" fill="#908a7c" stroke="#141412" stroke-width="0.65" />
<path d="M649.0 1009.2L642.8 1015.0L640.8 1022.1L649.6 1013.9Z" fill="#42423e" stroke="#141412" stroke-width="0.65" />
<path d="M636.5 1008.6L642.8 1015.0L640.8 1022.1L633.6 1014.7Z" fill="#6b6b66" stroke="#141412" stroke-width="0.65" />
<path d="M642.6 1002.7L649.0 1009.2L642.8 1015.0L636.5 1008.6Z" fill="#908a7c" stroke="#141412" stroke-width="0.65" />
<path d="M712.3 1012.8L705.4 1018.9L703.2 1026.1L713.0 1017.5Z" fill="#42423e" stroke="#141412" stroke-width="0.65" />
<path d="M698.6 1012.1L705.4 1018.9L703.2 1026.1L695.4 1018.3Z" fill="#6b6b66" stroke="#141412" stroke-width="0.65" />
<path d="M705.4 1006.0L712.3 1012.8L705.4 1018.9L698.6 1012.1Z" fill="#908a7c" stroke="#141412" stroke-width="0.65" />
<path d="M693.3 1014.3L686.6 1020.2L684.5 1027.4L693.9 1019.0Z" fill="#42423e" stroke="#141412" stroke-width="0.65" />
<path d="M679.9 1013.5L686.6 1020.2L684.5 1027.4L676.9 1019.8Z" fill="#6b6b66" stroke="#141412" stroke-width="0.65" />
<path d="M686.5 1007.6L693.3 1014.3L686.6 1020.2L679.9 1013.5Z" fill="#908a7c" stroke="#141412" stroke-width="0.65" />
<path d="M674.7 1015.7L668.3 1021.6L666.2 1028.7L675.4 1020.4Z" fill="#42423e" stroke="#141412" stroke-width="0.65" />
<path d="M661.8 1015.0L668.3 1021.6L666.2 1028.7L658.8 1021.1Z" fill="#6b6b66" stroke="#141412" stroke-width="0.65" />
<path d="M668.2 1009.1L674.7 1015.7L668.3 1021.6L661.8 1015.0Z" fill="#908a7c" stroke="#141412" stroke-width="0.65" />
<path d="M749.4 1015.9L742.1 1022.1L739.8 1029.4L750.1 1020.6Z" fill="#42423e" stroke="#141412" stroke-width="0.65" />
<path d="M735.0 1015.1L742.1 1022.1L739.8 1029.4L731.6 1021.4Z" fill="#6b6b66" stroke="#141412" stroke-width="0.65" />
<path d="M742.2 1008.9L749.4 1015.9L742.1 1022.1L735.0 1015.1Z" fill="#908a7c" stroke="#141412" stroke-width="0.65" />
<path d="M656.7 1017.1L650.4 1022.9L648.4 1030.0L657.4 1021.8Z" fill="#42423e" stroke="#141412" stroke-width="0.65" />
<path d="M644.1 1016.3L650.4 1022.9L648.4 1030.0L641.2 1022.5Z" fill="#6b6b66" stroke="#141412" stroke-width="0.65" />
<path d="M650.3 1010.5L656.7 1017.1L650.4 1022.9L644.1 1016.3Z" fill="#908a7c" stroke="#141412" stroke-width="0.65" />
<path d="M639.2 1018.4L633.1 1024.1L631.1 1031.2L639.8 1023.1Z" fill="#42423e" stroke="#141412" stroke-width="0.65" />
<path d="M626.8 1017.7L633.1 1024.1L631.1 1031.2L624.0 1023.8Z" fill="#6b6b66" stroke="#141412" stroke-width="0.65" />
<path d="M632.9 1012.0L639.2 1018.4L633.1 1024.1L626.8 1017.7Z" fill="#908a7c" stroke="#141412" stroke-width="0.65" />
<path d="M720.7 1021.0L713.7 1027.1L711.5 1034.3L721.4 1025.7Z" fill="#42423e" stroke="#141412" stroke-width="0.65" />
<path d="M706.8 1020.2L713.7 1027.1L711.5 1034.3L703.6 1026.5Z" fill="#6b6b66" stroke="#141412" stroke-width="0.65" />
<path d="M713.7 1014.2L720.7 1021.0L713.7 1027.1L706.8 1020.2Z" fill="#908a7c" stroke="#141412" stroke-width="0.65" />
<path d="M701.4 1022.4L694.7 1028.3L692.5 1035.5L702.1 1027.1Z" fill="#42423e" stroke="#141412" stroke-width="0.65" />
<path d="M688.0 1021.6L694.7 1028.3L692.5 1035.5L684.8 1027.8Z" fill="#6b6b66" stroke="#141412" stroke-width="0.65" />
<path d="M694.6 1015.6L701.4 1022.4L694.7 1028.3L688.0 1021.6Z" fill="#908a7c" stroke="#141412" stroke-width="0.65" />
<path d="M682.7 1023.7L676.2 1029.6L674.1 1036.7L683.4 1028.4Z" fill="#42423e" stroke="#141412" stroke-width="0.65" />
<path d="M669.6 1022.9L676.2 1029.6L674.1 1036.7L666.6 1029.1Z" fill="#6b6b66" stroke="#141412" stroke-width="0.65" />
<path d="M676.1 1017.0L682.7 1023.7L676.2 1029.6L669.6 1022.9Z" fill="#908a7c" stroke="#141412" stroke-width="0.65" />
<path d="M664.5 1025.0L658.1 1030.8L656.1 1037.9L665.1 1029.7Z" fill="#42423e" stroke="#141412" stroke-width="0.65" />
<path d="M651.7 1024.2L658.1 1030.8L656.1 1037.9L648.8 1030.3Z" fill="#6b6b66" stroke="#141412" stroke-width="0.65" />
<path d="M658.0 1018.4L664.5 1025.0L658.1 1030.8L651.7 1024.2Z" fill="#908a7c" stroke="#141412" stroke-width="0.65" />
<path d="M646.8 1026.3L640.6 1031.9L638.6 1039.0L647.4 1030.9Z" fill="#42423e" stroke="#141412" stroke-width="0.65" />
<path d="M634.3 1025.4L640.6 1031.9L638.6 1039.0L631.5 1031.6Z" fill="#6b6b66" stroke="#141412" stroke-width="0.65" />
<path d="M640.4 1019.7L646.8 1026.3L640.6 1031.9L634.3 1025.4Z" fill="#908a7c" stroke="#141412" stroke-width="0.65" />
<path d="M761.0 1027.1L753.6 1033.2L751.3 1040.5L761.7 1031.8Z" fill="#42423e" stroke="#141412" stroke-width="0.65" />
<path d="M746.4 1026.2L753.6 1033.2L751.3 1040.5L743.0 1032.4Z" fill="#6b6b66" stroke="#141412" stroke-width="0.65" />
<path d="M753.7 1020.0L761.0 1027.1L753.6 1033.2L746.4 1026.2Z" fill="#908a7c" stroke="#141412" stroke-width="0.65" />
<path d="M709.7 1030.6L702.9 1036.5L700.7 1043.7L710.4 1035.3Z" fill="#42423e" stroke="#141412" stroke-width="0.65" />
<path d="M696.1 1029.7L702.9 1036.5L700.7 1043.7L692.9 1035.9Z" fill="#6b6b66" stroke="#141412" stroke-width="0.65" />
<path d="M702.8 1023.8L709.7 1030.6L702.9 1036.5L696.1 1029.7Z" fill="#908a7c" stroke="#141412" stroke-width="0.65" />
<path d="M690.8 1031.8L684.1 1037.7L682.0 1044.8L691.4 1036.5Z" fill="#42423e" stroke="#141412" stroke-width="0.65" />
<path d="M677.5 1030.9L684.1 1037.7L682.0 1044.8L674.4 1037.1Z" fill="#6b6b66" stroke="#141412" stroke-width="0.65" />
<path d="M684.1 1025.1L690.8 1031.8L684.1 1037.7L677.5 1030.9Z" fill="#908a7c" stroke="#141412" stroke-width="0.65" />
<path d="M672.3 1033.0L665.9 1038.8L663.9 1045.9L673.0 1037.7Z" fill="#42423e" stroke="#141412" stroke-width="0.65" />
<path d="M659.4 1032.1L665.9 1038.8L663.9 1045.9L656.5 1038.2Z" fill="#6b6b66" stroke="#141412" stroke-width="0.65" />
<path d="M665.8 1026.3L672.3 1033.0L665.9 1038.8L659.4 1032.1Z" fill="#908a7c" stroke="#141412" stroke-width="0.65" />
<path d="M654.4 1034.2L648.2 1039.8L646.2 1046.9L655.1 1038.8Z" fill="#42423e" stroke="#141412" stroke-width="0.65" />
<path d="M641.9 1033.3L648.2 1039.8L646.2 1046.9L639.0 1039.4Z" fill="#6b6b66" stroke="#141412" stroke-width="0.65" />
<path d="M648.0 1027.6L654.4 1034.2L648.2 1039.8L641.9 1033.3Z" fill="#908a7c" stroke="#141412" stroke-width="0.65" />
<path d="M734.7 1034.8L727.6 1040.8L725.3 1048.0L735.4 1039.5Z" fill="#42423e" stroke="#141412" stroke-width="0.65" />
<path d="M720.6 1033.8L727.6 1040.8L725.3 1048.0L717.3 1040.1Z" fill="#6b6b66" stroke="#141412" stroke-width="0.65" />
<path d="M727.6 1027.8L734.7 1034.8L727.6 1040.8L720.6 1033.8Z" fill="#908a7c" stroke="#141412" stroke-width="0.65" />
<path d="M770.0 1035.8L762.6 1041.9L760.2 1049.2L770.8 1040.5Z" fill="#42423e" stroke="#141412" stroke-width="0.65" />
<path d="M755.2 1034.8L762.6 1041.9L760.2 1049.2L751.8 1041.1Z" fill="#6b6b66" stroke="#141412" stroke-width="0.65" />
<path d="M762.6 1028.6L770.0 1035.8L762.6 1041.9L755.2 1034.8Z" fill="#908a7c" stroke="#141412" stroke-width="0.65" />
<path d="M698.9 1040.0L692.2 1045.8L690.0 1053.0L699.6 1044.7Z" fill="#42423e" stroke="#141412" stroke-width="0.65" />
<path d="M685.5 1039.0L692.2 1045.8L690.0 1053.0L682.4 1045.2Z" fill="#6b6b66" stroke="#141412" stroke-width="0.65" />
<path d="M692.1 1033.2L698.9 1040.0L692.2 1045.8L685.5 1039.0Z" fill="#908a7c" stroke="#141412" stroke-width="0.65" />
<path d="M680.3 1041.1L673.8 1046.8L671.7 1053.9L680.9 1045.8Z" fill="#42423e" stroke="#141412" stroke-width="0.65" />
<path d="M667.2 1040.1L673.8 1046.8L671.7 1053.9L664.2 1046.2Z" fill="#6b6b66" stroke="#141412" stroke-width="0.65" />
<path d="M673.7 1034.4L680.3 1041.1L673.8 1046.8L667.2 1040.1Z" fill="#908a7c" stroke="#141412" stroke-width="0.65" />
<path d="M662.2 1042.1L655.9 1047.8L653.8 1054.8L662.8 1046.8Z" fill="#42423e" stroke="#141412" stroke-width="0.65" />
<path d="M649.5 1041.2L655.9 1047.8L653.8 1054.8L646.5 1047.3Z" fill="#6b6b66" stroke="#141412" stroke-width="0.65" />
<path d="M655.7 1035.5L662.2 1042.1L655.9 1047.8L649.5 1041.2Z" fill="#908a7c" stroke="#141412" stroke-width="0.65" />
<path d="M743.4 1043.4L736.2 1049.4L733.9 1056.6L744.1 1048.1Z" fill="#42423e" stroke="#141412" stroke-width="0.65" />
<path d="M729.1 1042.3L736.2 1049.4L733.9 1056.6L725.8 1048.5Z" fill="#6b6b66" stroke="#141412" stroke-width="0.65" />
<path d="M736.2 1036.3L743.4 1043.4L736.2 1049.4L729.1 1042.3Z" fill="#908a7c" stroke="#141412" stroke-width="0.65" />
<path d="M723.5 1044.3L716.5 1050.2L714.3 1057.4L724.2 1049.0Z" fill="#42423e" stroke="#141412" stroke-width="0.65" />
<path d="M709.6 1043.3L716.5 1050.2L714.3 1057.4L706.4 1049.5Z" fill="#6b6b66" stroke="#141412" stroke-width="0.65" />
<path d="M716.5 1037.4L723.5 1044.3L716.5 1050.2L709.6 1043.3Z" fill="#908a7c" stroke="#141412" stroke-width="0.65" />
<path d="M779.1 1044.6L771.6 1050.7L769.1 1058.0L779.9 1049.3Z" fill="#42423e" stroke="#141412" stroke-width="0.65" />
<path d="M764.2 1043.5L771.6 1050.7L769.1 1058.0L760.7 1049.7Z" fill="#6b6b66" stroke="#141412" stroke-width="0.65" />
<path d="M771.6 1037.4L779.1 1044.6L771.6 1050.7L764.2 1043.5Z" fill="#908a7c" stroke="#141412" stroke-width="0.65" />
<path d="M688.3 1049.2L681.7 1054.9L679.6 1062.0L688.9 1053.9Z" fill="#42423e" stroke="#141412" stroke-width="0.65" />
<path d="M675.1 1048.2L681.7 1054.9L679.6 1062.0L672.1 1054.3Z" fill="#6b6b66" stroke="#141412" stroke-width="0.65" />
<path d="M681.6 1042.4L688.3 1049.2L681.7 1054.9L675.1 1048.2Z" fill="#908a7c" stroke="#141412" stroke-width="0.65" />
<path d="M670.0 1050.2L663.6 1055.8L661.5 1062.9L670.6 1054.9Z" fill="#42423e" stroke="#141412" stroke-width="0.65" />
<path d="M657.1 1049.1L663.6 1055.8L661.5 1062.9L654.2 1055.2Z" fill="#6b6b66" stroke="#141412" stroke-width="0.65" />
<path d="M663.5 1043.5L670.0 1050.2L663.6 1055.8L657.1 1049.1Z" fill="#908a7c" stroke="#141412" stroke-width="0.65" />
<path d="M732.0 1052.9L725.0 1058.7L722.8 1065.9L732.7 1057.6Z" fill="#42423e" stroke="#141412" stroke-width="0.65" />
<path d="M718.0 1051.7L725.0 1058.7L722.8 1065.9L714.8 1057.9Z" fill="#6b6b66" stroke="#141412" stroke-width="0.65" />
<path d="M725.0 1045.9L732.0 1052.9L725.0 1058.7L718.0 1051.7Z" fill="#908a7c" stroke="#141412" stroke-width="0.65" />
<path d="M753.1 1052.9L745.8 1058.9L743.5 1066.1L753.8 1057.6Z" fill="#42423e" stroke="#141412" stroke-width="0.65" />
<path d="M739.5 1052.6L745.8 1058.9L743.5 1066.1L736.2 1058.8Z" fill="#6b6b66" stroke="#141412" stroke-width="0.65" />
<path d="M746.7 1046.7L753.1 1052.9L745.8 1058.9L739.5 1052.6Z" fill="#908a7c" stroke="#141412" stroke-width="0.65" />
<path d="M788.3 1053.5L780.7 1059.6L778.2 1066.9L789.1 1058.2Z" fill="#42423e" stroke="#141412" stroke-width="0.65" />
<path d="M773.2 1052.3L780.7 1059.6L778.2 1066.9L769.7 1058.5Z" fill="#6b6b66" stroke="#141412" stroke-width="0.65" />
<path d="M780.8 1046.2L788.3 1053.5L780.7 1059.6L773.2 1052.3Z" fill="#908a7c" stroke="#141412" stroke-width="0.65" />
<path d="M712.4 1053.7L705.6 1059.4L703.4 1066.6L713.1 1058.4Z" fill="#42423e" stroke="#141412" stroke-width="0.65" />
<path d="M698.8 1052.5L705.6 1059.4L703.4 1066.6L695.7 1058.7Z" fill="#6b6b66" stroke="#141412" stroke-width="0.65" />
<path d="M705.6 1046.7L712.4 1053.7L705.6 1059.4L698.8 1052.5Z" fill="#908a7c" stroke="#141412" stroke-width="0.65" />
<path d="M677.8 1058.3L671.4 1063.9L669.3 1071.0L678.5 1063.0Z" fill="#42423e" stroke="#141412" stroke-width="0.65" />
<path d="M664.9 1057.2L671.4 1063.9L669.3 1071.0L661.9 1063.2Z" fill="#6b6b66" stroke="#141412" stroke-width="0.65" />
<path d="M671.3 1051.5L677.8 1058.3L671.4 1063.9L664.9 1057.2Z" fill="#908a7c" stroke="#141412" stroke-width="0.65" />
<path d="M761.1 1060.8L753.8 1066.7L751.4 1074.0L761.8 1065.5Z" fill="#42423e" stroke="#141412" stroke-width="0.65" />
<path d="M747.4 1060.4L753.8 1066.7L751.4 1074.0L744.0 1066.6Z" fill="#6b6b66" stroke="#141412" stroke-width="0.65" />
<path d="M754.7 1054.5L761.1 1060.8L753.8 1066.7L747.4 1060.4Z" fill="#908a7c" stroke="#141412" stroke-width="0.65" />
<path d="M720.9 1062.2L714.0 1067.9L711.8 1075.1L721.6 1066.9Z" fill="#42423e" stroke="#141412" stroke-width="0.65" />
<path d="M707.1 1061.0L714.0 1067.9L711.8 1075.1L703.9 1067.1Z" fill="#6b6b66" stroke="#141412" stroke-width="0.65" />
<path d="M714.0 1055.2L720.9 1062.2L714.0 1067.9L707.1 1061.0Z" fill="#908a7c" stroke="#141412" stroke-width="0.65" />
<path d="M741.6 1062.4L734.5 1068.2L732.2 1075.4L742.3 1067.1Z" fill="#42423e" stroke="#141412" stroke-width="0.65" />
<path d="M728.3 1062.0L734.5 1068.2L732.2 1075.4L725.0 1068.1Z" fill="#6b6b66" stroke="#141412" stroke-width="0.65" />
<path d="M735.3 1056.1L741.6 1062.4L734.5 1068.2L728.3 1062.0Z" fill="#908a7c" stroke="#141412" stroke-width="0.65" />
<path d="M701.6 1062.8L694.9 1068.5L692.8 1075.6L702.3 1067.5Z" fill="#42423e" stroke="#141412" stroke-width="0.65" />
<path d="M688.2 1061.6L694.9 1068.5L692.8 1075.6L685.1 1067.7Z" fill="#6b6b66" stroke="#141412" stroke-width="0.65" />
<path d="M694.9 1055.9L701.6 1062.8L694.9 1068.5L688.2 1061.6Z" fill="#908a7c" stroke="#141412" stroke-width="0.65" />
<path d="M769.2 1068.7L761.8 1074.7L759.4 1081.9L769.9 1073.5Z" fill="#42423e" stroke="#141412" stroke-width="0.65" />
<path d="M755.3 1068.3L761.8 1074.7L759.4 1081.9L751.9 1074.5Z" fill="#6b6b66" stroke="#141412" stroke-width="0.65" />
<path d="M762.7 1062.4L769.2 1068.7L761.8 1074.7L755.3 1068.3Z" fill="#908a7c" stroke="#141412" stroke-width="0.65" />
<path d="M749.5 1070.2L742.3 1076.0L739.9 1083.2L750.2 1074.9Z" fill="#42423e" stroke="#141412" stroke-width="0.65" />
<path d="M736.0 1069.8L742.3 1076.0L739.9 1083.2L732.7 1075.9Z" fill="#6b6b66" stroke="#141412" stroke-width="0.65" />
<path d="M743.1 1063.9L749.5 1070.2L742.3 1076.0L736.0 1069.8Z" fill="#908a7c" stroke="#141412" stroke-width="0.65" />
<path d="M710.0 1071.3L703.2 1077.0L701.0 1084.1L710.6 1076.0Z" fill="#42423e" stroke="#141412" stroke-width="0.65" />
<path d="M696.4 1070.0L703.2 1077.0L701.0 1084.1L693.3 1076.1Z" fill="#6b6b66" stroke="#141412" stroke-width="0.65" />
<path d="M703.1 1064.4L710.0 1071.3L703.2 1077.0L696.4 1070.0Z" fill="#908a7c" stroke="#141412" stroke-width="0.65" />
<path d="M691.0 1071.8L684.4 1077.4L682.3 1084.5L691.7 1076.5Z" fill="#42423e" stroke="#141412" stroke-width="0.65" />
<path d="M677.8 1070.6L684.4 1077.4L682.3 1084.5L674.8 1076.6Z" fill="#6b6b66" stroke="#141412" stroke-width="0.65" />
<path d="M684.3 1065.0L691.0 1071.8L684.4 1077.4L677.8 1070.6Z" fill="#908a7c" stroke="#141412" stroke-width="0.65" />
<path d="M730.3 1071.6L723.3 1077.4L721.1 1084.5L731.0 1076.4Z" fill="#42423e" stroke="#141412" stroke-width="0.65" />
<path d="M717.2 1071.2L723.3 1077.4L721.1 1084.5L714.0 1077.3Z" fill="#6b6b66" stroke="#141412" stroke-width="0.65" />
<path d="M724.1 1065.4L730.3 1071.6L723.3 1077.4L717.2 1071.2Z" fill="#908a7c" stroke="#141412" stroke-width="0.65" />
<path d="M777.3 1076.8L769.8 1082.7L767.4 1089.9L778.1 1081.5Z" fill="#42423e" stroke="#141412" stroke-width="0.65" />
<path d="M763.4 1076.3L769.8 1082.7L767.4 1089.9L759.9 1082.4Z" fill="#6b6b66" stroke="#141412" stroke-width="0.65" />
<path d="M770.8 1070.3L777.3 1076.8L769.8 1082.7L763.4 1076.3Z" fill="#908a7c" stroke="#141412" stroke-width="0.65" />
<path d="M757.4 1078.1L750.1 1083.9L747.8 1091.1L758.1 1082.9Z" fill="#42423e" stroke="#141412" stroke-width="0.65" />
<path d="M743.8 1077.6L750.1 1083.9L747.8 1091.1L740.5 1083.7Z" fill="#6b6b66" stroke="#141412" stroke-width="0.65" />
<path d="M751.0 1071.8L757.4 1078.1L750.1 1083.9L743.8 1077.6Z" fill="#908a7c" stroke="#141412" stroke-width="0.65" />
<path d="M738.0 1079.5L731.0 1085.2L728.7 1092.3L738.8 1084.2Z" fill="#42423e" stroke="#141412" stroke-width="0.65" />
<path d="M724.8 1078.9L731.0 1085.2L728.7 1092.3L721.6 1085.0Z" fill="#6b6b66" stroke="#141412" stroke-width="0.65" />
<path d="M731.8 1073.2L738.0 1079.5L731.0 1085.2L724.8 1078.9Z" fill="#908a7c" stroke="#141412" stroke-width="0.65" />
<path d="M699.2 1080.3L692.6 1085.8L690.4 1092.9L699.9 1085.0Z" fill="#42423e" stroke="#141412" stroke-width="0.65" />
<path d="M685.9 1078.9L692.6 1085.8L690.4 1092.9L682.8 1085.0Z" fill="#6b6b66" stroke="#141412" stroke-width="0.65" />
<path d="M692.5 1073.4L699.2 1080.3L692.6 1085.8L685.9 1078.9Z" fill="#908a7c" stroke="#141412" stroke-width="0.65" />
<path d="M719.2 1080.7L712.3 1086.4L710.1 1093.5L719.9 1085.5Z" fill="#42423e" stroke="#141412" stroke-width="0.65" />
<path d="M706.3 1080.2L712.3 1086.4L710.1 1093.5L703.2 1086.3Z" fill="#6b6b66" stroke="#141412" stroke-width="0.65" />
<path d="M713.1 1074.6L719.2 1080.7L712.3 1086.4L706.3 1080.2Z" fill="#908a7c" stroke="#141412" stroke-width="0.65" />
<path d="M765.4 1086.1L758.1 1091.9L755.7 1099.1L766.2 1090.9Z" fill="#42423e" stroke="#141412" stroke-width="0.65" />
<path d="M751.7 1085.5L758.1 1091.9L755.7 1099.1L748.3 1091.6Z" fill="#6b6b66" stroke="#141412" stroke-width="0.65" />
<path d="M759.0 1079.7L765.4 1086.1L758.1 1091.9L751.7 1085.5Z" fill="#908a7c" stroke="#141412" stroke-width="0.65" />
<path d="M745.9 1087.3L738.7 1093.0L736.4 1100.2L746.6 1092.1Z" fill="#42423e" stroke="#141412" stroke-width="0.65" />
<path d="M732.5 1086.7L738.7 1093.0L736.4 1100.2L729.2 1092.8Z" fill="#6b6b66" stroke="#141412" stroke-width="0.65" />
<path d="M739.6 1081.0L745.9 1087.3L738.7 1093.0L732.5 1086.7Z" fill="#908a7c" stroke="#141412" stroke-width="0.65" />
<path d="M726.8 1088.5L719.9 1094.1L717.7 1101.2L727.5 1093.2Z" fill="#42423e" stroke="#141412" stroke-width="0.65" />
<path d="M713.8 1087.9L719.9 1094.1L717.7 1101.2L710.6 1094.0Z" fill="#6b6b66" stroke="#141412" stroke-width="0.65" />
<path d="M720.7 1082.3L726.8 1088.5L719.9 1094.1L713.8 1087.9Z" fill="#908a7c" stroke="#141412" stroke-width="0.65" />
<path d="M708.3 1089.7L701.6 1095.2L699.4 1102.3L709.0 1094.4Z" fill="#42423e" stroke="#141412" stroke-width="0.65" />
<path d="M695.7 1089.1L701.6 1095.2L699.4 1102.3L692.5 1095.1Z" fill="#6b6b66" stroke="#141412" stroke-width="0.65" />
<path d="M702.3 1083.5L708.3 1089.7L701.6 1095.2L695.7 1089.1Z" fill="#908a7c" stroke="#141412" stroke-width="0.65" />
<path d="M753.8 1095.3L746.6 1101.0L744.2 1108.1L754.5 1100.0Z" fill="#42423e" stroke="#141412" stroke-width="0.65" />
<path d="M740.3 1094.6L746.6 1101.0L744.2 1108.1L737.0 1100.7Z" fill="#6b6b66" stroke="#141412" stroke-width="0.65" />
<path d="M747.5 1088.9L753.8 1095.3L746.6 1101.0L740.3 1094.6Z" fill="#908a7c" stroke="#141412" stroke-width="0.65" />
<path d="M734.6 1096.4L727.5 1102.0L725.3 1109.0L735.3 1101.1Z" fill="#42423e" stroke="#141412" stroke-width="0.65" />
<path d="M721.4 1095.7L727.5 1102.0L725.3 1109.0L718.2 1101.7Z" fill="#6b6b66" stroke="#141412" stroke-width="0.65" />
<path d="M728.4 1090.1L734.6 1096.4L727.5 1102.0L721.4 1095.7Z" fill="#908a7c" stroke="#141412" stroke-width="0.65" />
<path d="M715.8 1097.4L709.0 1102.9L706.8 1110.0L716.5 1102.1Z" fill="#42423e" stroke="#141412" stroke-width="0.65" />
<path d="M703.1 1096.7L709.0 1102.9L706.8 1110.0L699.9 1102.8Z" fill="#6b6b66" stroke="#141412" stroke-width="0.65" />
<path d="M709.8 1091.2L715.8 1097.4L709.0 1102.9L703.1 1096.7Z" fill="#908a7c" stroke="#141412" stroke-width="0.65" />
<path d="M742.3 1104.3L735.2 1109.9L733.0 1116.9L743.0 1109.0Z" fill="#42423e" stroke="#141412" stroke-width="0.65" />
<path d="M729.1 1103.5L735.2 1109.9L733.0 1116.9L725.8 1109.6Z" fill="#6b6b66" stroke="#141412" stroke-width="0.65" />
<path d="M736.1 1097.9L742.3 1104.3L735.2 1109.9L729.1 1103.5Z" fill="#908a7c" stroke="#141412" stroke-width="0.65" />
<path d="M723.4 1105.2L716.5 1110.7L714.3 1117.8L724.1 1110.0Z" fill="#42423e" stroke="#141412" stroke-width="0.65" />
<path d="M710.5 1104.5L716.5 1110.7L714.3 1117.8L707.3 1110.5Z" fill="#6b6b66" stroke="#141412" stroke-width="0.65" />
<path d="M717.4 1099.0L723.4 1105.2L716.5 1110.7L710.5 1104.5Z" fill="#908a7c" stroke="#141412" stroke-width="0.65" />
<path d="M731.1 1113.1L724.1 1118.6L721.9 1125.6L731.8 1117.9Z" fill="#42423e" stroke="#141412" stroke-width="0.65" />
<path d="M718.1 1112.3L724.1 1118.6L721.9 1125.6L714.8 1118.3Z" fill="#6b6b66" stroke="#141412" stroke-width="0.65" />
<path d="M725.0 1106.8L731.1 1113.1L724.1 1118.6L718.1 1112.3Z" fill="#908a7c" stroke="#141412" stroke-width="0.65" />
</g>
</svg></div>
<!-- title bar -->
<div class="abs" style="left:8px;top:0;width:1920px;height:23px;background:#fff"></div>
<div class="abs" style="left:8px;top:23px;width:1920px;height:32px;background:#c9c9c9"></div>
<div class="abs" style="left:201px;top:27px;width:1510px;height:28px;background:#f1f1f1;border-radius:6px 6px 0 0"></div>
<div class="abs" style="left:1715px;top:27px;width:28px;height:28px;background:#b7b7b7;border-radius:5px 0 0 0"></div>
<div class="abs" style="left:8px;top:54.5px;width:1920px;height:81.5px;background:#f1f1f1;border-bottom:1.5px solid #e2e2e2"></div>
<div class="abs" style="left:20px;top:66px;width:108px;height:59px;border:1px solid #d9d9d9;border-radius:5px;background:#f3f3f3"></div>
<div class="abs" style="left:147px;top:75.5px;width:55px;height:2.6px;background:#0a93d8;border-radius:1px"></div>
<!-- left strip -->
<div class="abs" style="left:0;top:0;width:8px;height:88px;background:#dfe3ec"></div>
<div class="abs" style="left:0;top:38px;width:8px;height:50px;background:#fff;border-radius:0 8px 0 0"></div>
<div class="abs" style="left:-8px;top:53px;width:11px;height:24px;background:#dbe4fb;border-radius:6px"></div>
<div class="abs" style="left:0;top:88px;width:8px;height:16px;background:#f1f1f1"></div>
<div class="abs" style="left:0;top:93px;width:0;height:0;border-left:3.5px solid transparent;border-right:3.5px solid transparent;border-bottom:4px solid #444"></div>
<div class="abs" style="left:0;top:104px;width:6px;height:381px;background:#5f5f5f"></div>
<div class="abs" style="left:6px;top:104px;width:2px;height:381px;background:#fff"></div>
<div class="abs" style="left:0;top:485px;width:8px;height:555px;background:#fff"></div>
<div class="abs" style="left:0;top:1028px;width:0;height:0;border-left:3px solid transparent;border-right:3px solid transparent;border-top:3.5px solid #444"></div>
<div class="abs" style="left:0;top:1039px;width:8px;height:129px;background:#0c0c0c"></div>
<div class="abs" style="left:0;top:1160px;width:1928px;height:8px;background:#101010"></div>
<div class="abs" style="left:56px;top:1160px;width:288px;height:8px;background:#f0f0f0;border-top:1px solid #bbb;box-sizing:border-box"></div>
<div class="abs" style="left:738px;top:1160px;width:48px;height:8px;background:#3c3c3c"></div>
<!-- toolbar dividers -->
<div class="vdiv" style="left:359px"></div><div class="vdiv" style="left:628px"></div><div class="vdiv" style="left:725px"></div><div class="vdiv" style="left:849px"></div><div class="vdiv" style="left:908px"></div><div class="vdiv" style="left:966px"></div><div class="vdiv" style="left:1064px"></div>
<!-- dropdown arrows -->
<div class="dd" style="left:92.5px;top:94px"></div>
<div class="dd" style="left:253.5px;top:124px"></div><div class="dd" style="left:500.5px;top:124px"></div><div class="dd" style="left:693.5px;top:124px"></div><div class="dd" style="left:828px;top:124px"></div><div class="dd" style="left:887.5px;top:124px"></div><div class="dd" style="left:946px;top:124px"></div><div class="dd" style="left:1022px;top:124px"></div><div class="dd" style="left:1102px;top:124px"></div>
<svg class="abs" style="left:0;top:0" width="1928" height="140" viewBox="0 0 1928 140">
<path d="M146.50 83.75L173.50 83.75L173.50 110.38L146.50 110.38Z" fill="none" stroke="#444" stroke-width="1" stroke-dasharray="5 2"/>
<rect x="145.12" y="82.38" width="2.75" height="2.75" fill="#444" stroke="none" stroke-width="1" />
<rect x="172.12" y="82.38" width="2.75" height="2.75" fill="#444" stroke="none" stroke-width="1" />
<rect x="145.12" y="109.00" width="2.75" height="2.75" fill="#444" stroke="none" stroke-width="1" />
<path d="M153.50 104.12L153.50 90.38L166.88 90.38" fill="none" stroke="#444" stroke-width="1" />
<path d="M166.9 90.4Q166.9 102.2 153.5 104.1" fill="none" stroke="#444" stroke-width="1"/>
<rect x="152.38" y="89.25" width="2.25" height="2.25" fill="#444" stroke="none" stroke-width="1" />
<rect x="165.75" y="89.25" width="2.25" height="2.25" fill="#444" stroke="none" stroke-width="1" />
<rect x="152.38" y="103.00" width="2.25" height="2.25" fill="#444" stroke="none" stroke-width="1" />
<path d="M167.75 100.38L172.25 100.38L172.25 105.00L176.88 105.00L176.88 109.50L172.25 109.50L172.25 113.75L167.75 113.75L167.75 109.50L163.12 109.50L163.12 105.00L167.75 105.00Z" fill="#1f9e3d" stroke="none" stroke-width="1" />
<path d="M189.38 107.88L207.50 107.88L212.50 103.50L212.50 108.50L207.50 113.50L189.38 113.50Z" fill="#bdbdbd" stroke="none" stroke-width="1" />
<path d="M189.38 87.88L207.50 87.88L207.50 107.88L189.38 107.88Z" fill="#6cb0e6" stroke="none" stroke-width="1" />
<path d="M189.38 87.88L194.38 82.25L212.50 82.25L207.50 87.88Z" fill="#8ecaf6" stroke="none" stroke-width="1" />
<path d="M207.50 87.88L212.50 82.25L212.50 103.50L207.50 107.88Z" fill="#4a92cf" stroke="none" stroke-width="1" />
<path d="M216.50 107.88L216.50 86.00" fill="none" stroke="#222" stroke-width="1.2" />
<path d="M214.50 87.25L216.50 82.88L218.50 87.25Z" fill="#222" stroke="none" stroke-width="1" />
<path d="M233.1 88.2Q246.2 80.4 260.6 89.5" fill="none" stroke="#222" stroke-width="1.1"/>
<path d="M231.62 89.75L233.50 85.75L236.25 88.75Z" fill="#222" stroke="none" stroke-width="1" />
<path d="M231.0 96.2 Q246.2 86.0 263.1 96.0 L257.5 101.2 Q246.2 94.8 236.9 101.6 Z" fill="#8ecaf6"/>
<path d="M231.0 96.2 L236.9 101.6 Q246.2 94.8 257.5 101.2 L257.5 110.8 Q246.2 104.1 236.9 111.0 L231.0 105.4 Z" fill="#6cb0e6"/>
<path d="M231.00 96.25L236.88 101.62L236.88 111.00L231.00 105.38Z" fill="#4a92cf" stroke="none" stroke-width="1" />
<path d="M257.50 101.25L263.12 96.00L263.12 105.38L257.50 110.75Z" fill="#fff" stroke="#333" stroke-width="0.9" />
<path d="M274.38 88.75L280.00 82.50L305.62 82.50L305.62 107.00L300.00 113.50L274.38 113.50Z" fill="#dcdcdc" stroke="#555" stroke-width="0.9" />
<path d="M274.38 88.75L280.00 82.50L305.62 82.50L300.00 88.75Z" fill="#ececec" stroke="#555" stroke-width="0.6" />
<path d="M300.00 88.75L305.62 82.50L305.62 107.00L300.00 113.50Z" fill="#bdbdbd" stroke="#555" stroke-width="0.6" />
<circle cx="287.50" cy="100.38" r="8.25" fill="#f4f4f4" stroke="#444" stroke-width="0.9"/>
<circle cx="287.50" cy="100.38" r="6.50" fill="#6cb0e6" stroke="#444" stroke-width="0.7"/>
<path d="M285.6 94.1A6.5 6.5 0 0 0 294.0 100.0A5.0 5.0 0 0 1 285.6 94.1Z" fill="#f4f4f4"/>
<path d="M320.62 87.25L341.50 87.25" fill="none" stroke="#444" stroke-width="1" />
<path d="M320.62 87.25L320.62 108.50" fill="none" stroke="#444" stroke-width="1" />
<path d="M320.62 108.50L341.50 108.50" fill="none" stroke="#444" stroke-width="1" />
<rect x="317.25" y="84.50" width="6.50" height="6.00" fill="#fff" stroke="#444" stroke-width="0.9" />
<rect x="338.12" y="84.50" width="6.88" height="6.00" fill="#6cb0e6" stroke="none" stroke-width="1" />
<rect x="317.25" y="105.38" width="6.50" height="6.25" fill="#6cb0e6" stroke="none" stroke-width="1" />
<rect x="338.12" y="105.38" width="6.88" height="6.25" fill="#6cb0e6" stroke="none" stroke-width="1" />
<path d="M372.25 88.75L377.50 82.50L383.12 82.50L383.12 113.50L372.25 113.50Z" fill="#dcdcdc" stroke="#555" stroke-width="0.9" />
<path d="M379.38 88.75L388.75 82.50L393.50 82.50L393.50 107.88L388.12 113.50L379.38 113.50Z" fill="#6cb0e6" stroke="none" stroke-width="1" />
<path d="M388.12 88.75L393.50 82.50L393.50 107.88L388.12 113.50Z" fill="#4a92cf" stroke="none" stroke-width="1" />
<path d="M379.38 88.75L384.38 82.50L393.50 82.50L388.12 88.75Z" fill="#8ecaf6" stroke="none" stroke-width="1" />
<path d="M391.25 97.50L398.75 97.50" fill="none" stroke="#222" stroke-width="1.1" />
<path d="M396.88 95.38L401.00 97.50L396.88 99.75Z" fill="#222" stroke="none" stroke-width="1" />
<path d="M414.4 90.4 L421.2 82.5 L431.2 82.5 Q445.0 84.8 446.0 97.2 L446.0 106.0 L438.8 113.5 L414.4 113.5 Z" fill="#dcdcdc" stroke="#555" stroke-width="0.9"/>
<path d="M431.9 82.5 Q445.0 84.1 446.0 96.6 L439.0 102.5 Q438.1 90.4 426.2 88.8 Z" fill="#6cb0e6"/>
<path d="M439.00 102.88L446.00 97.25L446.00 106.00L438.75 113.50Z" fill="#bdbdbd" stroke="#555" stroke-width="0.6" />
<path d="M457.25 88.75L463.75 82.50L488.75 82.50L488.75 106.62L481.88 113.50L457.25 113.50Z" fill="#ececec" stroke="#555" stroke-width="0.9" />
<path d="M481.88 88.75L488.75 82.50L488.75 106.62L481.88 113.50Z" fill="#bdbdbd" stroke="#555" stroke-width="0.6" />
<path d="M457.25 88.75L481.88 88.75L481.88 113.50" fill="none" stroke="#555" stroke-width="0.7" />
<rect x="461.25" y="93.50" width="16.25" height="16.25" fill="#f6f6f6" stroke="none" stroke-width="1" />
<path d="M461.25 93.50L468.75 93.50L468.75 102.25L477.50 102.25L477.50 109.75L461.25 109.75Z" fill="#8ecaf6" stroke="none" stroke-width="1" />
<path d="M461.25 93.50L468.75 93.50L468.75 102.25L461.25 109.75Z" fill="#4a92cf" stroke="none" stroke-width="1" />
<path d="M500.00 96.00L505.00 92.25L510.62 92.25L510.62 86.00L515.62 82.25L531.88 82.25L531.88 99.12L526.88 103.50L521.88 103.50L521.88 109.12L516.88 113.75L500.00 113.75Z" fill="#6cb0e6" stroke="none" stroke-width="1" />
<path d="M526.88 86.62L531.88 82.25L531.88 99.12L526.88 103.50Z" fill="#4a92cf" stroke="none" stroke-width="1" />
<path d="M516.88 103.50L521.88 103.50L521.88 109.12L516.88 113.75Z" fill="#4a92cf" stroke="none" stroke-width="1" />
<path d="M545.00 101.62L567.50 101.62L572.50 97.88L572.50 107.88L567.50 112.50L545.00 112.50Z" fill="#dcdcdc" stroke="#555" stroke-width="0.8" />
<path d="M567.50 101.62L572.50 97.88L572.50 107.88L567.50 112.50Z" fill="#bdbdbd" stroke="#555" stroke-width="0.5" />
<path d="M545.00 87.25L550.00 82.25L572.50 82.25L572.50 92.25L567.50 97.25L545.00 97.25Z" fill="#6cb0e6" stroke="none" stroke-width="1" />
<path d="M545.00 87.25L550.00 82.25L572.50 82.25L567.50 87.25Z" fill="#8ecaf6" stroke="none" stroke-width="1" />
<path d="M567.50 87.25L572.50 82.25L572.50 92.25L567.50 97.25Z" fill="#4a92cf" stroke="none" stroke-width="1" />
<path d="M543.12 100.00L566.88 100.00L575.00 92.88" fill="none" stroke="#1a8fe0" stroke-width="1.2" />
<path d="M601.86 87.34L601.86 109.20" fill="none" stroke="#333" stroke-width="1.6" />
<path d="M590.93 97.98L613.23 97.98" fill="none" stroke="#333" stroke-width="1.6" />
<path d="M597.20 89.23L601.86 82.24L606.53 89.23Z" fill="#333" stroke="none" stroke-width="1" />
<path d="M597.20 107.01L601.86 113.86L606.53 107.01Z" fill="#333" stroke="none" stroke-width="1" />
<path d="M593.41 93.17L586.12 97.98L593.41 102.64Z" fill="#333" stroke="none" stroke-width="1" />
<path d="M610.61 93.17L617.90 97.98L610.61 102.64Z" fill="#333" stroke="none" stroke-width="1" />
<path d="M640.05 102.35L644.13 98.27L667.45 98.27L667.45 109.20L663.08 113.57L640.05 113.57Z" fill="#dcdcdc" stroke="#666" stroke-width="0.8" />
<path d="M640.05 102.35L663.08 102.35L663.08 113.57" fill="none" stroke="#666" stroke-width="0.6" />
<path d="M663.08 102.35L667.45 98.27" fill="none" stroke="#666" stroke-width="0.6" />
<path d="M651.71 102.35L651.71 113.57" fill="none" stroke="#666" stroke-width="0.6" />
<path d="M640.05 90.25L644.13 86.32L655.79 86.32L655.79 97.54L651.71 101.47L640.05 101.47Z" fill="#6cb0e6" stroke="none" stroke-width="1" />
<path d="M640.05 90.25L644.13 86.32L655.79 86.32L651.71 90.25Z" fill="#8ecaf6" stroke="none" stroke-width="1" />
<path d="M651.71 90.25L655.79 86.32L655.79 97.54L651.71 101.47Z" fill="#4a92cf" stroke="none" stroke-width="1" />
<path d="M663.81 82.67L665.15 87.46L669.48 85.02L667.04 89.35L671.82 90.69L667.04 92.03L669.48 96.36L665.15 93.92L663.81 98.71L662.47 93.92L658.14 96.36L660.58 92.03L655.79 90.69L660.58 89.35L658.14 85.02L662.47 87.46Z" fill="#f59a00" stroke="none" stroke-width="1" />
<path d="M685.23 92.44L692.23 84.42L697.33 85.15L697.33 94.62L692.23 98.27L692.23 105.56L687.13 111.09L685.23 109.93Z" fill="#bdbdbd" stroke="#555" stroke-width="0.9" />
<path d="M705.64 86.61L712.34 92.44L712.34 111.39L705.64 105.56Z" fill="#bdbdbd" stroke="#555" stroke-width="0.9" />
<path d="M700.97 98.27L705.64 96.81L705.64 105.56L700.97 104.83Z" fill="#dcdcdc" stroke="#555" stroke-width="0.7" />
<path d="M694.41 97.54L694.41 101.47" fill="none" stroke="#1a8fe0" stroke-width="1.2" />
<path d="M703.60 90.25L703.60 95.35" fill="none" stroke="#1a8fe0" stroke-width="1.2" />
<g opacity="0.35">
<path d="M750.24 88.79L756.36 82.96L777.49 82.96L777.49 109.20L750.24 109.20Z" fill="#e4e4e4" stroke="#aaa" stroke-width="0.7" />
<path d="M768.02 104.83L781.87 104.83" fill="none" stroke="#8ab" stroke-width="1.2" />
<path d="M768.02 111.09L781.87 111.09" fill="none" stroke="#8ab" stroke-width="1.2" />
<path d="M771.66 102.64L771.66 107.01" fill="none" stroke="#8ab" stroke-width="1.2" />
<path d="M777.93 108.91L777.93 113.28" fill="none" stroke="#8ab" stroke-width="1.2" />
<rect x="793.09" y="82.96" width="29.59" height="27.26" fill="#e4e4e4" stroke="#aaa" stroke-width="0.7" />
<path d="M803.00 90.98L803.00 110.22" fill="none" stroke="#aaa" stroke-width="0.6" />
<path d="M811.02 90.98L811.02 110.22" fill="none" stroke="#aaa" stroke-width="0.6" />
<path d="M819.03 90.98L819.03 110.22" fill="none" stroke="#aaa" stroke-width="0.6" />
<path d="M793.09 90.98L822.68 90.98" fill="none" stroke="#aaa" stroke-width="0.6" />
<path d="M793.09 97.54L822.68 97.54" fill="none" stroke="#aaa" stroke-width="0.6" />
<path d="M793.09 104.10L822.68 104.10" fill="none" stroke="#aaa" stroke-width="0.6" />
<path d="M811.02 104.83L824.86 104.83" fill="none" stroke="#8ab" stroke-width="1.2" />
<path d="M811.02 111.09L824.86 111.09" fill="none" stroke="#8ab" stroke-width="1.2" />
<path d="M814.66 102.64L814.66 107.01" fill="none" stroke="#8ab" stroke-width="1.2" />
<path d="M820.93 108.91L820.93 113.28" fill="none" stroke="#8ab" stroke-width="1.2" />
</g>
<circle cx="773.85" cy="90.25" r="7.87" fill="#b9dcef" stroke="none" stroke-width="1"/>
<path d="M770.64 91.71L775.60 91.71" fill="none" stroke="#fff" stroke-width="1.1" />
<path d="M773.12 89.23L773.12 94.19" fill="none" stroke="#fff" stroke-width="1.1" />
<path d="M775.89 87.34L778.22 87.34" fill="none" stroke="#fff" stroke-width="0.8" />
<path d="M777.06 86.17L777.06 88.50" fill="none" stroke="#fff" stroke-width="0.8" />
<circle cx="816.85" cy="90.25" r="7.87" fill="#b9dcef" stroke="none" stroke-width="1"/>
<path d="M813.64 91.71L818.59 91.71" fill="none" stroke="#fff" stroke-width="1.1" />
<path d="M816.12 89.23L816.12 94.19" fill="none" stroke="#fff" stroke-width="1.1" />
<path d="M818.89 87.34L821.22 87.34" fill="none" stroke="#fff" stroke-width="0.8" />
<path d="M820.05 86.17L820.05 88.50" fill="none" stroke="#fff" stroke-width="0.8" />
<path d="M864.28 90.98L873.32 82.53L881.34 82.53L881.34 104.10L872.59 112.55L864.28 112.55Z" fill="#dcdcdc" stroke="#555" stroke-width="0.9" />
<path d="M873.03 90.98L881.77 82.96L881.77 104.39L873.03 112.55Z" fill="#56bf7a" stroke="none" stroke-width="1" />
<path d="M885.27 90.98L893.73 82.96L893.73 104.10L885.27 112.55Z" fill="#e09663" stroke="none" stroke-width="1" />
<rect x="924.04" y="99.73" width="27.98" height="6.12" fill="#f5a000" stroke="none" stroke-width="1" />
<path d="M925.79 99.73L925.79 101.47" fill="none" stroke="#8a5a00" stroke-width="0.6" />
<path d="M929.00 99.73L929.00 102.35" fill="none" stroke="#8a5a00" stroke-width="0.6" />
<path d="M932.20 99.73L932.20 101.47" fill="none" stroke="#8a5a00" stroke-width="0.6" />
<path d="M935.41 99.73L935.41 102.35" fill="none" stroke="#8a5a00" stroke-width="0.6" />
<path d="M938.62 99.73L938.62 101.47" fill="none" stroke="#8a5a00" stroke-width="0.6" />
<path d="M941.82 99.73L941.82 102.35" fill="none" stroke="#8a5a00" stroke-width="0.6" />
<path d="M945.03 99.73L945.03 101.47" fill="none" stroke="#8a5a00" stroke-width="0.6" />
<path d="M948.24 99.73L948.24 102.35" fill="none" stroke="#8a5a00" stroke-width="0.6" />
<path d="M951.44 99.73L951.44 101.47" fill="none" stroke="#8a5a00" stroke-width="0.6" />
<path d="M924.62 90.25L924.62 98.56" fill="none" stroke="#555" stroke-width="0.9" />
<path d="M951.59 90.25L951.59 98.56" fill="none" stroke="#555" stroke-width="0.9" />
<path d="M925.79 94.62L950.57 94.62" fill="none" stroke="#555" stroke-width="0.9" />
<path d="M928.71 92.44L925.50 94.62L928.71 96.81Z" fill="#555" stroke="none" stroke-width="1" />
<path d="M947.36 92.44L950.86 94.62L947.36 96.81Z" fill="#555" stroke="none" stroke-width="1" />
<path d="M982.93 94.19L990.65 86.32L1008.58 86.32L1008.58 103.37L1000.85 111.39L982.93 111.39Z" fill="#dcdcdc" stroke="#555" stroke-width="0.9" />
<path d="M982.93 94.19L990.65 86.32L1008.58 86.32L1000.85 94.19Z" fill="#ececec" stroke="#555" stroke-width="0.5" />
<path d="M1000.85 94.19L1008.58 86.32L1008.58 103.37L1000.85 111.39Z" fill="#bdbdbd" stroke="#555" stroke-width="0.5" />
<path d="M978.99 85.88L987.01 85.88L987.01 82.24L996.48 87.77L987.01 93.60L987.01 89.81L978.99 89.81Z" fill="#1a86dd" stroke="none" stroke-width="1" />
<g fill="none" stroke="#2a2a2a" stroke-width="1.7"><ellipse cx="1000.1" cy="108.8" rx="4.2" ry="2.6" transform="rotate(-35 1000.1 108.8)"/><ellipse cx="1006.7" cy="104.8" rx="4.2" ry="2.6" transform="rotate(-35 1006.7 104.8)"/></g>
<rect x="1023.15" y="82.96" width="28.71" height="28.71" fill="#7dc3f5" stroke="none" stroke-width="1" />
<path d="M1023.15 104.10L1030.00 96.08L1033.94 94.19L1039.48 99.73L1042.39 104.10L1046.04 101.18L1048.51 100.45L1051.87 104.83L1051.87 111.68L1023.15 111.68Z" fill="#3e92cf" stroke="none" stroke-width="1" />
<circle cx="1044.14" cy="91.27" r="3.35" fill="#fdf6bf" stroke="none" stroke-width="1"/>
<rect x="1075.04" y="79.03" width="38.04" height="37.90" fill="#0696d7" stroke="none" stroke-width="1" />
<rect x="1078.10" y="82.53" width="27.69" height="20.84" fill="none" stroke="#9be08a" stroke-width="0.9" stroke-dasharray="3.2 1.8"/>
<path d="M1098.94 96.52L1098.94 112.11L1102.59 108.76L1105.36 114.01L1107.69 112.84L1105.36 107.74L1110.17 106.28Z" fill="#fff" stroke="none" stroke-width="1" />
<defs><linearGradient id="aig" x1="0" y1="0" x2="1" y2="1"><stop offset="0" stop-color="#ff8a2a"/><stop offset="1" stop-color="#e85a12"/></linearGradient><linearGradient id="avg" x1="0" y1="0" x2="0" y2="1"><stop offset="0" stop-color="#b4c1d8"/><stop offset="1" stop-color="#8291ab"/></linearGradient><clipPath id="avc"><circle cx="1903" cy="39" r="12"/></clipPath></defs>
<rect x="11.2" y="3.2" width="14" height="15.6" rx="2.2" fill="url(#aig)"/><path d="M11.2 13.8h14v2.8a2.2 2.2 0 0 1-2.2 2.2h-9.6a2.2 2.2 0 0 1-2.2-2.2z" fill="#9c3d14"/>
<text x="15.4" y="12.4" font-family="Liberation Sans,sans-serif" font-weight="bold" font-size="8.5" fill="#fff">F</text>
<rect x="17.0" y="32.3" width="4" height="4" rx="0.5" fill="#666"/>
<rect x="17.0" y="37.2" width="4" height="4" rx="0.5" fill="#666"/>
<rect x="17.0" y="42.1" width="4" height="4" rx="0.5" fill="#666"/>
<rect x="22.0" y="32.3" width="4" height="4" rx="0.5" fill="#666"/>
<rect x="22.0" y="37.2" width="4" height="4" rx="0.5" fill="#666"/>
<rect x="22.0" y="42.1" width="4" height="4" rx="0.5" fill="#666"/>
<rect x="27.0" y="32.3" width="4" height="4" rx="0.5" fill="#666"/>
<rect x="27.0" y="37.2" width="4" height="4" rx="0.5" fill="#666"/>
<rect x="27.0" y="42.1" width="4" height="4" rx="0.5" fill="#666"/>
<path d="M50 32.2a1 1 0 0 1 1-1h7.2l4.8 4.8v10a1 1 0 0 1-1 1H51a1 1 0 0 1-1-1z" fill="#666"/><path d="M58.8 31.2v4.2h4.2z" fill="#c9c9c9"/>
<path d="M69.3 36.4h6.8l-3.4 4.6z" fill="#666"/>
<path d="M95.2 33.2a1 1 0 0 1 1-1h11.8a1 1 0 0 1 1 1v11.8a1 1 0 0 1-1 1H97.4l-2.2-2.2z" fill="#9c9c9c"/><rect x="98" y="32.2" width="8" height="5" fill="#c9c9c9"/><rect x="99" y="40.6" width="6.4" height="5.4" fill="#c9c9c9"/><rect x="100.6" y="41.6" width="2" height="4.4" fill="#9c9c9c"/>
<path d="M133.6 33.6l-4.8 4.6 4.8 4.6M129.4 38.2h5.6a5.2 5.2 0 0 1 5.2 5.6v1" fill="none" stroke="#666" stroke-width="2" stroke-linecap="round" stroke-linejoin="round"/>
<path d="M148.2 36.4h6.8l-3.4 4.6z" fill="#666"/>
<path d="M175.4 33.6l4.8 4.6-4.8 4.6M179.6 38.2H174a5.2 5.2 0 0 0-5.2 5.6v1" fill="none" stroke="#a2a2a2" stroke-width="2" stroke-linecap="round" stroke-linejoin="round"/>
<path d="M187.2 36.4h6.8l-3.4 4.6z" fill="#a2a2a2"/>
<path d="M893.5 34l6.4 3.2v7.6l-6.4 3.6-6.4-3.6v-7.6z" fill="#f0843a"/><path d="M893.5 34l6.4 3.2-6.4 3.4-6.4-3.4z" fill="#f7b07a"/><path d="M893.5 40.6l6.4-3.4v7.6l-6.4 3.6z" fill="#d9641c"/>
<path d="M1696 37l7.8 7.8M1703.8 37l-7.8 7.8" stroke="#555" stroke-width="1.2" fill="none"/>
<path d="M1723 40.4h13M1729.5 33.9v13" stroke="#6a6a6a" stroke-width="2.3" fill="none"/>
<circle cx="1763" cy="39" r="8" fill="#1b9ad8"/><path d="M1761.4 37.2v7M1757.9 40.7h7" stroke="#fff" stroke-width="1.5"/><path d="M1766.6 34.2v3.4M1764.9 35.9h3.4M1760.6 33.6v2M1759.6 34.6h2" stroke="#fff" stroke-width="0.9"/>
<circle cx="1796" cy="39" r="7.7" fill="none" stroke="#666" stroke-width="1"/><circle cx="1796" cy="39" r="6.2" fill="#666"/><path d="M1796 34.8v4.4h3.6" stroke="#fff" stroke-width="1.1" fill="none"/>
<path d="M1829 31.4c-3.2 0-4.6 2.6-4.6 5.4 0 3.4-.8 5-2 6.2v1h13.2v-1c-1.200-1.200-2-2.800-2-6.200 0-2.800-1.400-5.400-4.600-5.400z" fill="#666"/><path d="M1827.2 45.2h3.600l-1.800 1.600z" fill="#666"/><circle cx="1833.200" cy="34.600" r="3" fill="#1b9ad8"/>
<circle cx="1862" cy="39" r="8" fill="#666"/><text x="1858.400" y="43.800" font-family="Liberation Sans,sans-serif" font-weight="bold" font-size="13" fill="#fff">?</text>
<circle cx="1903" cy="39" r="12" fill="url(#avg)"/><g clip-path="url(#avc)" fill="#5d6a80"><ellipse cx="1903" cy="35.600" rx="4.400" ry="5.600"/><path d="M1893 52c0-6 4-8.500 10-8.500s10 2.500 10 8.500z"/></g>
<path d="M1807 10.400h10" stroke="#000" stroke-width="1.100"/><rect x="1852.300" y="7.300" width="7.700" height="7.300" fill="none" stroke="#000" stroke-width="1.100"/><path d="M1854.200 7.300v-1.900h7.700v7.300h-1.900" fill="none" stroke="#000" stroke-width="1.100"/><path d="M1898.300 5.300l9.700 9.700M1908 5.300l-9.700 9.700" stroke="#000" stroke-width="1.100"/>
</svg>
<!-- browser -->
<div class="abs" style="left:12.5px;top:144.5px;width:297px;height:22.5px;background:#f2f2f2;border:1px solid #cfcfcf"></div>
<div class="abs" style="left:12.5px;top:1131px;width:297px;height:23px;background:#f2f2f2;border:1px solid #cfcfcf"></div>
<div class="abs" style="left:16.3px;top:174px;width:5.2px;height:934px;background:#c6c6c6"></div>
<div class="abs" style="left:15.8px;top:202px;width:5.2px;height:68px;background:#8d8d8d;border:0.6px solid #666;border-radius:3px"></div>
<svg class="abs" style="left:0;top:0;overflow:visible" width="320" height="1168">
<path d="M17 157l5-3.3v6.6zM22.4 157l5-3.3v6.6z" fill="#222"/>
<circle cx="295.5" cy="156.5" r="4.6" fill="#1a1a1a"/><rect x="292.7" y="155.8" width="5.6" height="1.5" fill="#fff"/>
<circle cx="295.5" cy="1143" r="4.6" fill="#1a1a1a"/><rect x="292.7" y="1142.3" width="5.6" height="1.5" fill="#fff"/><rect x="294.75" y="1140.2" width="1.5" height="5.6" fill="#fff"/>
</svg>
<div class="rb" style="left:65.8px;top:174px;width:93.2px"></div>
<svg class="ic" style="left:46.7px;top:178px" width="13" height="13" viewBox="0 0 13 13"><defs><linearGradient id="tg0" x1="0" y1="1" x2="1" y2="0.3"><stop offset="0" stop-color="#444"/><stop offset="1" stop-color="#e8e8e8"/></linearGradient></defs><path d="M0.8 11.6L11.2 1.2V11.6z" fill="url(#tg0)" stroke="#222" stroke-width="1"/></svg>
<svg class="ic" style="left:69.3px;top:178.8px" width="16" height="10" viewBox="0 0 16 10"><path d="M0 5C2.2 1.7 5 0 8 0s5.8 1.7 8 5c-2.2 3.3-5 5-8 5S2.2 8.3 0 5z" fill="#8f8f8f"/><circle cx="8" cy="5" r="3" fill="#f2f2f2"/><circle cx="8" cy="5" r="1.7" fill="#8f8f8f"/></svg>
<svg class="ic" style="left:94.0px;top:177.4px" width="17" height="13" viewBox="0 0 17 13"><path d="M0 1.2h5.2l1 1.6H0z M0 3.6h16.2v9H0z" fill="#8f8f8f"/></svg>
<span class="tx" id="r0" style="left:124.2px;top:175px;transform:scaleX(0.7441)">ボディ</span>
<div class="rb" style="left:84.0px;top:198px;width:123.5px"></div>
<svg class="ic" style="left:65.8px;top:200px" width="12" height="15" viewBox="0 0 12 15"><path d="M1.2 1.2L9.6 7.5L1.2 13.8z" fill="#eee" stroke="#222" stroke-width="1.1" stroke-linejoin="round"/></svg>
<svg class="ic" style="left:87.3px;top:202.8px" width="16" height="10" viewBox="0 0 16 10"><path d="M0 5C2.2 1.7 5 0 8 0s5.8 1.7 8 5c-2.2 3.3-5 5-8 5S2.2 8.3 0 5z" fill="#8f8f8f"/><circle cx="8" cy="5" r="3" fill="#f2f2f2"/><circle cx="8" cy="5" r="1.7" fill="#8f8f8f"/></svg>
<svg class="ic" style="left:112.0px;top:201.4px" width="17" height="13" viewBox="0 0 17 13"><path d="M0 1.2h5.2l1 1.6H0z M0 3.6h16.2v9H0z" fill="#8f8f8f"/></svg>
<span class="tx" id="r1" style="left:142.4px;top:199px;transform:scaleX(0.8058)">グループ1 (1)</span>
<div class="rb" style="left:84.0px;top:222px;width:123.5px"></div>
<svg class="ic" style="left:64.7px;top:226px" width="13" height="13" viewBox="0 0 13 13"><defs><linearGradient id="tg2" x1="0" y1="1" x2="1" y2="0.3"><stop offset="0" stop-color="#444"/><stop offset="1" stop-color="#e8e8e8"/></linearGradient></defs><path d="M0.8 11.6L11.2 1.2V11.6z" fill="url(#tg2)" stroke="#222" stroke-width="1"/></svg>
<svg class="ic" style="left:87.3px;top:226.8px" width="16" height="10" viewBox="0 0 16 10"><path d="M0 5C2.2 1.7 5 0 8 0s5.8 1.7 8 5c-2.2 3.3-5 5-8 5S2.2 8.3 0 5z" fill="#8f8f8f"/><circle cx="8" cy="5" r="3" fill="#f2f2f2"/><circle cx="8" cy="5" r="1.7" fill="#8f8f8f"/></svg>
<svg class="ic" style="left:112.0px;top:225.4px" width="17" height="13" viewBox="0 0 17 13"><path d="M0 1.2h5.2l1 1.6H0z M0 3.6h16.2v9H0z" fill="#8f8f8f"/></svg>
<span class="tx" id="r2" style="left:142.4px;top:223px;transform:scaleX(0.7413)">キーボード (8)</span>
<div class="rb" style="left:102.0px;top:246px;width:129.0px"></div>
<svg class="ic" style="left:105.3px;top:250.8px" width="16" height="10" viewBox="0 0 16 10"><path d="M0 5C2.2 1.7 5 0 8 0s5.8 1.7 8 5c-2.2 3.3-5 5-8 5S2.2 8.3 0 5z" fill="#8f8f8f"/><circle cx="8" cy="5" r="3" fill="#f2f2f2"/><circle cx="8" cy="5" r="1.7" fill="#8f8f8f"/></svg>
<svg class="ic" style="left:130.3px;top:248.0px" width="16" height="16" viewBox="0 0 16 16"><defs><linearGradient id="cg" x1="0" y1="0" x2="1" y2="0"><stop offset="0" stop-color="#aab0b8"/><stop offset="0.5" stop-color="#f4f6f8"/><stop offset="1" stop-color="#c9ced4"/></linearGradient></defs><rect x="0.6" y="0.6" width="14.6" height="14.8" rx="3.4" fill="#fdfdfd" stroke="#3a3a3a" stroke-width="1.1"/><path d="M3.6 5.8h8.6v7.2c0 .9-.7 1.4-1.4 1.4H5c-.8 0-1.4-.6-1.4-1.4z" fill="url(#cg)"/></svg>
<span class="tx" id="r3" style="left:160.0px;top:247px;transform:scaleX(0.7593)">キーボード<i class="md">・</i>脚1</span>
<div class="rb" style="left:102.0px;top:270px;width:129.5px"></div>
<svg class="ic" style="left:105.3px;top:274.8px" width="16" height="10" viewBox="0 0 16 10"><path d="M0 5C2.2 1.7 5 0 8 0s5.8 1.7 8 5c-2.2 3.3-5 5-8 5S2.2 8.3 0 5z" fill="#8f8f8f"/><circle cx="8" cy="5" r="3" fill="#f2f2f2"/><circle cx="8" cy="5" r="1.7" fill="#8f8f8f"/></svg>
<svg class="ic" style="left:130.3px;top:272.0px" width="16" height="16" viewBox="0 0 16 16"><defs><linearGradient id="cg" x1="0" y1="0" x2="1" y2="0"><stop offset="0" stop-color="#aab0b8"/><stop offset="0.5" stop-color="#f4f6f8"/><stop offset="1" stop-color="#c9ced4"/></linearGradient></defs><rect x="0.6" y="0.6" width="14.6" height="14.8" rx="3.4" fill="#fdfdfd" stroke="#3a3a3a" stroke-width="1.1"/><path d="M3.6 5.8h8.6v7.2c0 .9-.7 1.4-1.4 1.4H5c-.8 0-1.4-.6-1.4-1.4z" fill="url(#cg)"/></svg>
<span class="tx" id="r4" style="left:160.0px;top:271px;transform:scaleX(0.7654)">キーボード<i class="md">・</i>脚0</span>
<div class="rb" style="left:102.0px;top:294px;width:137.5px"></div>
<svg class="ic" style="left:105.3px;top:298.8px" width="16" height="10" viewBox="0 0 16 10"><path d="M0 5C2.2 1.7 5 0 8 0s5.8 1.7 8 5c-2.2 3.3-5 5-8 5S2.2 8.3 0 5z" fill="#8f8f8f"/><circle cx="8" cy="5" r="3" fill="#f2f2f2"/><circle cx="8" cy="5" r="1.7" fill="#8f8f8f"/></svg>
<svg class="ic" style="left:130.3px;top:296.0px" width="16" height="16" viewBox="0 0 16 16"><defs><linearGradient id="cg" x1="0" y1="0" x2="1" y2="0"><stop offset="0" stop-color="#aab0b8"/><stop offset="0.5" stop-color="#f4f6f8"/><stop offset="1" stop-color="#c9ced4"/></linearGradient></defs><rect x="0.6" y="0.6" width="14.6" height="14.8" rx="3.4" fill="#fdfdfd" stroke="#3a3a3a" stroke-width="1.1"/><path d="M3.6 5.8h8.6v7.2c0 .9-.7 1.4-1.4 1.4H5c-.8 0-1.4-.6-1.4-1.4z" fill="url(#cg)"/></svg>
<span class="tx" id="r5" style="left:160.0px;top:295px;transform:scaleX(0.7609)">キーボード<i class="md">・</i>LED1</span>
<div class="rb" style="left:102.0px;top:318px;width:137.5px"></div>
<svg class="ic" style="left:105.3px;top:322.8px" width="16" height="10" viewBox="0 0 16 10"><path d="M0 5C2.2 1.7 5 0 8 0s5.8 1.7 8 5c-2.2 3.3-5 5-8 5S2.2 8.3 0 5z" fill="#8f8f8f"/><circle cx="8" cy="5" r="3" fill="#f2f2f2"/><circle cx="8" cy="5" r="1.7" fill="#8f8f8f"/></svg>
<svg class="ic" style="left:130.3px;top:320.0px" width="16" height="16" viewBox="0 0 16 16"><defs><linearGradient id="cg" x1="0" y1="0" x2="1" y2="0"><stop offset="0" stop-color="#aab0b8"/><stop offset="0.5" stop-color="#f4f6f8"/><stop offset="1" stop-color="#c9ced4"/></linearGradient></defs><rect x="0.6" y="0.6" width="14.6" height="14.8" rx="3.4" fill="#fdfdfd" stroke="#3a3a3a" stroke-width="1.1"/><path d="M3.6 5.8h8.6v7.2c0 .9-.7 1.4-1.4 1.4H5c-.8 0-1.4-.6-1.4-1.4z" fill="url(#cg)"/></svg>
<span class="tx" id="r6" style="left:160.0px;top:319px;transform:scaleX(0.7609)">キーボード<i class="md">・</i>LED0</span>
<div class="rb" style="left:102.0px;top:342px;width:106.5px"></div>
<svg class="ic" style="left:105.3px;top:346.8px" width="16" height="10" viewBox="0 0 16 10"><path d="M0 5C2.2 1.7 5 0 8 0s5.8 1.7 8 5c-2.2 3.3-5 5-8 5S2.2 8.3 0 5z" fill="#8f8f8f"/><circle cx="8" cy="5" r="3" fill="#f2f2f2"/><circle cx="8" cy="5" r="1.7" fill="#8f8f8f"/></svg>
<svg class="ic" style="left:130.3px;top:344.0px" width="16" height="16" viewBox="0 0 16 16"><defs><linearGradient id="cg" x1="0" y1="0" x2="1" y2="0"><stop offset="0" stop-color="#aab0b8"/><stop offset="0.5" stop-color="#f4f6f8"/><stop offset="1" stop-color="#c9ced4"/></linearGradient></defs><rect x="0.6" y="0.6" width="14.6" height="14.8" rx="3.4" fill="#fdfdfd" stroke="#3a3a3a" stroke-width="1.1"/><path d="M3.6 5.8h8.6v7.2c0 .9-.7 1.4-1.4 1.4H5c-.8 0-1.4-.6-1.4-1.4z" fill="url(#cg)"/></svg>
<span class="tx" id="r7" style="left:160.0px;top:343px;transform:scaleX(0.6724)">キーボード</span>
<div class="rb" style="left:102.0px;top:366px;width:134.5px"></div>
<svg class="ic" style="left:105.3px;top:370.8px" width="16" height="10" viewBox="0 0 16 10"><path d="M0 5C2.2 1.7 5 0 8 0s5.8 1.7 8 5c-2.2 3.3-5 5-8 5S2.2 8.3 0 5z" fill="#8f8f8f"/><circle cx="8" cy="5" r="3" fill="#f2f2f2"/><circle cx="8" cy="5" r="1.7" fill="#8f8f8f"/></svg>
<svg class="ic" style="left:130.3px;top:368.0px" width="16" height="16" viewBox="0 0 16 16"><defs><linearGradient id="cg" x1="0" y1="0" x2="1" y2="0"><stop offset="0" stop-color="#aab0b8"/><stop offset="0.5" stop-color="#f4f6f8"/><stop offset="1" stop-color="#c9ced4"/></linearGradient></defs><rect x="0.6" y="0.6" width="14.6" height="14.8" rx="3.4" fill="#fdfdfd" stroke="#3a3a3a" stroke-width="1.1"/><path d="M3.6 5.8h8.6v7.2c0 .9-.7 1.4-1.4 1.4H5c-.8 0-1.4-.6-1.4-1.4z" fill="url(#cg)"/></svg>
<span class="tx" id="r8" style="left:160.0px;top:367px;transform:scaleX(0.7791)">キーボード<i class="md">・</i>底面</span>
<div class="rb" style="left:102.0px;top:390px;width:134.5px"></div>
<svg class="ic" style="left:105.3px;top:394.8px" width="16" height="10" viewBox="0 0 16 10"><path d="M0 5C2.2 1.7 5 0 8 0s5.8 1.7 8 5c-2.2 3.3-5 5-8 5S2.2 8.3 0 5z" fill="#8f8f8f"/><circle cx="8" cy="5" r="3" fill="#f2f2f2"/><circle cx="8" cy="5" r="1.7" fill="#8f8f8f"/></svg>
<svg class="ic" style="left:130.3px;top:392.0px" width="16" height="16" viewBox="0 0 16 16"><defs><linearGradient id="cg" x1="0" y1="0" x2="1" y2="0"><stop offset="0" stop-color="#aab0b8"/><stop offset="0.5" stop-color="#f4f6f8"/><stop offset="1" stop-color="#c9ced4"/></linearGradient></defs><rect x="0.6" y="0.6" width="14.6" height="14.8" rx="3.4" fill="#fdfdfd" stroke="#3a3a3a" stroke-width="1.1"/><path d="M3.6 5.8h8.6v7.2c0 .9-.7 1.4-1.4 1.4H5c-.8 0-1.4-.6-1.4-1.4z" fill="url(#cg)"/></svg>
<span class="tx" id="r9" style="left:160.0px;top:391px;transform:scaleX(0.7791)">キーボード<i class="md">・</i>上面</span>
<div class="rb" style="left:102.0px;top:414px;width:145.8px"></div>
<svg class="ic" style="left:105.3px;top:418.8px" width="16" height="10" viewBox="0 0 16 10"><path d="M0 5C2.2 1.7 5 0 8 0s5.8 1.7 8 5c-2.2 3.3-5 5-8 5S2.2 8.3 0 5z" fill="#8f8f8f"/><circle cx="8" cy="5" r="3" fill="#f2f2f2"/><circle cx="8" cy="5" r="1.7" fill="#8f8f8f"/></svg>
<svg class="ic" style="left:130.3px;top:416.0px" width="16" height="16" viewBox="0 0 16 16"><defs><linearGradient id="cg" x1="0" y1="0" x2="1" y2="0"><stop offset="0" stop-color="#aab0b8"/><stop offset="0.5" stop-color="#f4f6f8"/><stop offset="1" stop-color="#c9ced4"/></linearGradient></defs><rect x="0.6" y="0.6" width="14.6" height="14.8" rx="3.4" fill="#fdfdfd" stroke="#3a3a3a" stroke-width="1.1"/><path d="M3.6 5.8h8.6v7.2c0 .9-.7 1.4-1.4 1.4H5c-.8 0-1.4-.6-1.4-1.4z" fill="url(#cg)"/></svg>
<span class="tx" id="r10" style="left:160.0px;top:415px;transform:scaleX(0.7250)">キーボード<i class="md">・</i>コネクタ</span>
<div class="rb" style="left:84.0px;top:438px;width:145.2px"></div>
<svg class="ic" style="left:87.3px;top:442.8px" width="16" height="10" viewBox="0 0 16 10"><path d="M0 5C2.2 1.7 5 0 8 0s5.8 1.7 8 5c-2.2 3.3-5 5-8 5S2.2 8.3 0 5z" fill="#8f8f8f"/><circle cx="8" cy="5" r="3" fill="#f2f2f2"/><circle cx="8" cy="5" r="1.7" fill="#8f8f8f"/></svg>
<svg class="ic" style="left:112.3px;top:440.0px" width="16" height="16" viewBox="0 0 16 16"><defs><linearGradient id="cg" x1="0" y1="0" x2="1" y2="0"><stop offset="0" stop-color="#aab0b8"/><stop offset="0.5" stop-color="#f4f6f8"/><stop offset="1" stop-color="#c9ced4"/></linearGradient></defs><rect x="0.6" y="0.6" width="14.6" height="14.8" rx="3.4" fill="#fdfdfd" stroke="#3a3a3a" stroke-width="1.1"/><path d="M3.6 5.8h8.6v7.2c0 .9-.7 1.4-1.4 1.4H5c-.8 0-1.4-.6-1.4-1.4z" fill="url(#cg)"/></svg>
<span class="tx" id="r11" style="left:142.4px;top:439px;transform:scaleX(0.8402)">内部<i class="md">・</i>フロント (1)</span>
<div class="rb" style="left:84.0px;top:462px;width:146.5px"></div>
<svg class="ic" style="left:87.3px;top:466.8px" width="16" height="10" viewBox="0 0 16 10"><path d="M0 5C2.2 1.7 5 0 8 0s5.8 1.7 8 5c-2.2 3.3-5 5-8 5S2.2 8.3 0 5z" fill="#8f8f8f"/><circle cx="8" cy="5" r="3" fill="#f2f2f2"/><circle cx="8" cy="5" r="1.7" fill="#8f8f8f"/></svg>
<svg class="ic" style="left:112.3px;top:464.0px" width="16" height="16" viewBox="0 0 16 16"><defs><linearGradient id="cg" x1="0" y1="0" x2="1" y2="0"><stop offset="0" stop-color="#aab0b8"/><stop offset="0.5" stop-color="#f4f6f8"/><stop offset="1" stop-color="#c9ced4"/></linearGradient></defs><rect x="0.6" y="0.6" width="14.6" height="14.8" rx="3.4" fill="#fdfdfd" stroke="#3a3a3a" stroke-width="1.1"/><path d="M3.6 5.8h8.6v7.2c0 .9-.7 1.4-1.4 1.4H5c-.8 0-1.4-.6-1.4-1.4z" fill="url(#cg)"/></svg>
<span class="tx" id="r12" style="left:142.4px;top:463px;transform:scaleX(0.7558)">フロント<i class="md">・</i>5インチ蓋</span>
<div class="rb" style="left:84.0px;top:486px;width:144.0px"></div>
<svg class="ic" style="left:87.3px;top:490.8px" width="16" height="10" viewBox="0 0 16 10"><path d="M0 5C2.2 1.7 5 0 8 0s5.8 1.7 8 5c-2.2 3.3-5 5-8 5S2.2 8.3 0 5z" fill="#8f8f8f"/><circle cx="8" cy="5" r="3" fill="#f2f2f2"/><circle cx="8" cy="5" r="1.7" fill="#8f8f8f"/></svg>
<svg class="ic" style="left:112.3px;top:488.0px" width="16" height="16" viewBox="0 0 16 16"><defs><linearGradient id="cg" x1="0" y1="0" x2="1" y2="0"><stop offset="0" stop-color="#aab0b8"/><stop offset="0.5" stop-color="#f4f6f8"/><stop offset="1" stop-color="#c9ced4"/></linearGradient></defs><rect x="0.6" y="0.6" width="14.6" height="14.8" rx="3.4" fill="#fdfdfd" stroke="#3a3a3a" stroke-width="1.1"/><path d="M3.6 5.8h8.6v7.2c0 .9-.7 1.4-1.4 1.4H5c-.8 0-1.4-.6-1.4-1.4z" fill="url(#cg)"/></svg>
<span class="tx" id="r13" style="left:142.4px;top:487px;transform:scaleX(0.7765)">フロントパネル (1)</span>
<div class="rb" style="left:84.0px;top:510px;width:92.5px"></div>
<svg class="ic" style="left:87.3px;top:514.8px" width="16" height="10" viewBox="0 0 16 10"><path d="M0 5C2.2 1.7 5 0 8 0s5.8 1.7 8 5c-2.2 3.3-5 5-8 5S2.2 8.3 0 5z" fill="#8f8f8f"/><circle cx="8" cy="5" r="3" fill="#f2f2f2"/><circle cx="8" cy="5" r="1.7" fill="#8f8f8f"/></svg>
<svg class="ic" style="left:112.3px;top:512.0px" width="16" height="16" viewBox="0 0 16 16"><defs><linearGradient id="cg" x1="0" y1="0" x2="1" y2="0"><stop offset="0" stop-color="#aab0b8"/><stop offset="0.5" stop-color="#f4f6f8"/><stop offset="1" stop-color="#c9ced4"/></linearGradient></defs><rect x="0.6" y="0.6" width="14.6" height="14.8" rx="3.4" fill="#fdfdfd" stroke="#3a3a3a" stroke-width="1.1"/><path d="M3.6 5.8h8.6v7.2c0 .9-.7 1.4-1.4 1.4H5c-.8 0-1.4-.6-1.4-1.4z" fill="url(#cg)"/></svg>
<span class="tx" id="r14" style="left:142.4px;top:511px;transform:scaleX(0.8483)">LED0</span>
<div class="rb" style="left:84.0px;top:534px;width:92.2px"></div>
<svg class="ic" style="left:87.3px;top:538.8px" width="16" height="10" viewBox="0 0 16 10"><path d="M0 5C2.2 1.7 5 0 8 0s5.8 1.7 8 5c-2.2 3.3-5 5-8 5S2.2 8.3 0 5z" fill="#8f8f8f"/><circle cx="8" cy="5" r="3" fill="#f2f2f2"/><circle cx="8" cy="5" r="1.7" fill="#8f8f8f"/></svg>
<svg class="ic" style="left:112.3px;top:536.0px" width="16" height="16" viewBox="0 0 16 16"><defs><linearGradient id="cg" x1="0" y1="0" x2="1" y2="0"><stop offset="0" stop-color="#aab0b8"/><stop offset="0.5" stop-color="#f4f6f8"/><stop offset="1" stop-color="#c9ced4"/></linearGradient></defs><rect x="0.6" y="0.6" width="14.6" height="14.8" rx="3.4" fill="#fdfdfd" stroke="#3a3a3a" stroke-width="1.1"/><path d="M3.6 5.8h8.6v7.2c0 .9-.7 1.4-1.4 1.4H5c-.8 0-1.4-.6-1.4-1.4z" fill="url(#cg)"/></svg>
<span class="tx" id="r15" style="left:142.4px;top:535px;transform:scaleX(0.8379)">LED1</span>
<div class="rb" style="left:84.0px;top:558px;width:153.0px"></div>
<svg class="ic" style="left:87.3px;top:562.8px" width="16" height="10" viewBox="0 0 16 10"><path d="M0 5C2.2 1.7 5 0 8 0s5.8 1.7 8 5c-2.2 3.3-5 5-8 5S2.2 8.3 0 5z" fill="#8f8f8f"/><circle cx="8" cy="5" r="3" fill="#f2f2f2"/><circle cx="8" cy="5" r="1.7" fill="#8f8f8f"/></svg>
<svg class="ic" style="left:112.3px;top:560.0px" width="16" height="16" viewBox="0 0 16 16"><defs><linearGradient id="cg" x1="0" y1="0" x2="1" y2="0"><stop offset="0" stop-color="#aab0b8"/><stop offset="0.5" stop-color="#f4f6f8"/><stop offset="1" stop-color="#c9ced4"/></linearGradient></defs><rect x="0.6" y="0.6" width="14.6" height="14.8" rx="3.4" fill="#fdfdfd" stroke="#3a3a3a" stroke-width="1.1"/><path d="M3.6 5.8h8.6v7.2c0 .9-.7 1.4-1.4 1.4H5c-.8 0-1.4-.6-1.4-1.4z" fill="url(#cg)"/></svg>
<span class="tx" id="r16" style="left:142.4px;top:559px;transform:scaleX(0.7807)">フロント<i class="md">・</i>電源ボタン</span>
<div class="rb" style="left:84.0px;top:582px;width:197.1px"></div>
<svg class="ic" style="left:87.3px;top:586.8px" width="16" height="10" viewBox="0 0 16 10"><path d="M0 5C2.2 1.7 5 0 8 0s5.8 1.7 8 5c-2.2 3.3-5 5-8 5S2.2 8.3 0 5z" fill="#8f8f8f"/><circle cx="8" cy="5" r="3" fill="#f2f2f2"/><circle cx="8" cy="5" r="1.7" fill="#8f8f8f"/></svg>
<svg class="ic" style="left:112.3px;top:584.0px" width="16" height="16" viewBox="0 0 16 16"><defs><linearGradient id="cg" x1="0" y1="0" x2="1" y2="0"><stop offset="0" stop-color="#aab0b8"/><stop offset="0.5" stop-color="#f4f6f8"/><stop offset="1" stop-color="#c9ced4"/></linearGradient></defs><rect x="0.6" y="0.6" width="14.6" height="14.8" rx="3.4" fill="#fdfdfd" stroke="#3a3a3a" stroke-width="1.1"/><path d="M3.6 5.8h8.6v7.2c0 .9-.7 1.4-1.4 1.4H5c-.8 0-1.4-.6-1.4-1.4z" fill="url(#cg)"/></svg>
<span class="tx" id="r17" style="left:142.4px;top:583px;transform:scaleX(0.7783)">フロント<i class="md">・</i>リセットボタン (1) (1)</span>
<div class="rb" style="left:84.0px;top:606px;width:186.3px"></div>
<svg class="ic" style="left:87.3px;top:610.8px" width="16" height="10" viewBox="0 0 16 10"><path d="M0 5C2.2 1.7 5 0 8 0s5.8 1.7 8 5c-2.2 3.3-5 5-8 5S2.2 8.3 0 5z" fill="#8f8f8f"/><circle cx="8" cy="5" r="3" fill="#f2f2f2"/><circle cx="8" cy="5" r="1.7" fill="#8f8f8f"/></svg>
<svg class="ic" style="left:112.3px;top:608.0px" width="16" height="16" viewBox="0 0 16 16"><defs><linearGradient id="cg" x1="0" y1="0" x2="1" y2="0"><stop offset="0" stop-color="#aab0b8"/><stop offset="0.5" stop-color="#f4f6f8"/><stop offset="1" stop-color="#c9ced4"/></linearGradient></defs><rect x="0.6" y="0.6" width="14.6" height="14.8" rx="3.4" fill="#fdfdfd" stroke="#3a3a3a" stroke-width="1.1"/><path d="M3.6 5.8h8.6v7.2c0 .9-.7 1.4-1.4 1.4H5c-.8 0-1.4-.6-1.4-1.4z" fill="url(#cg)"/></svg>
<span class="tx" id="r18" style="left:142.4px;top:607px;transform:scaleX(0.7133)">フロント<i class="md">・</i>ヘッドフォンジャック</span>
<div class="rb" style="left:84.0px;top:630px;width:137.5px"></div>
<svg class="ic" style="left:87.3px;top:634.8px" width="16" height="10" viewBox="0 0 16 10"><path d="M0 5C2.2 1.7 5 0 8 0s5.8 1.7 8 5c-2.2 3.3-5 5-8 5S2.2 8.3 0 5z" fill="#8f8f8f"/><circle cx="8" cy="5" r="3" fill="#f2f2f2"/><circle cx="8" cy="5" r="1.7" fill="#8f8f8f"/></svg>
<svg class="ic" style="left:112.3px;top:632.0px" width="16" height="16" viewBox="0 0 16 16"><defs><linearGradient id="cg" x1="0" y1="0" x2="1" y2="0"><stop offset="0" stop-color="#aab0b8"/><stop offset="0.5" stop-color="#f4f6f8"/><stop offset="1" stop-color="#c9ced4"/></linearGradient></defs><rect x="0.6" y="0.6" width="14.6" height="14.8" rx="3.4" fill="#fdfdfd" stroke="#3a3a3a" stroke-width="1.1"/><path d="M3.6 5.8h8.6v7.2c0 .9-.7 1.4-1.4 1.4H5c-.8 0-1.4-.6-1.4-1.4z" fill="url(#cg)"/></svg>
<span class="tx" id="r19" style="left:142.4px;top:631px;transform:scaleX(0.7175)">フロント<i class="md">・</i>ポケット</span>
<div class="rb" style="left:84.0px;top:654px;width:170.9px"></div>
<svg class="ic" style="left:87.3px;top:658.8px" width="16" height="10" viewBox="0 0 16 10"><path d="M0 5C2.2 1.7 5 0 8 0s5.8 1.7 8 5c-2.2 3.3-5 5-8 5S2.2 8.3 0 5z" fill="#8f8f8f"/><circle cx="8" cy="5" r="3" fill="#f2f2f2"/><circle cx="8" cy="5" r="1.7" fill="#8f8f8f"/></svg>
<svg class="ic" style="left:112.3px;top:656.0px" width="16" height="16" viewBox="0 0 16 16"><defs><linearGradient id="cg" x1="0" y1="0" x2="1" y2="0"><stop offset="0" stop-color="#aab0b8"/><stop offset="0.5" stop-color="#f4f6f8"/><stop offset="1" stop-color="#c9ced4"/></linearGradient></defs><rect x="0.6" y="0.6" width="14.6" height="14.8" rx="3.4" fill="#fdfdfd" stroke="#3a3a3a" stroke-width="1.1"/><path d="M3.6 5.8h8.6v7.2c0 .9-.7 1.4-1.4 1.4H5c-.8 0-1.4-.6-1.4-1.4z" fill="url(#cg)"/></svg>
<span class="tx" id="r20" style="left:142.4px;top:655px;transform:scaleX(0.7518)">フロント<i class="md">・</i>マウスポート<i class="md">・</i>蓋</span>
<div class="rb" style="left:84.0px;top:678px;width:110.5px"></div>
<svg class="ic" style="left:87.3px;top:682.8px" width="16" height="10" viewBox="0 0 16 10"><path d="M0 5C2.2 1.7 5 0 8 0s5.8 1.7 8 5c-2.2 3.3-5 5-8 5S2.2 8.3 0 5z" fill="#8f8f8f"/><circle cx="8" cy="5" r="3" fill="#f2f2f2"/><circle cx="8" cy="5" r="1.7" fill="#8f8f8f"/></svg>
<svg class="ic" style="left:112.3px;top:680.0px" width="16" height="16" viewBox="0 0 16 16"><defs><linearGradient id="cg" x1="0" y1="0" x2="1" y2="0"><stop offset="0" stop-color="#aab0b8"/><stop offset="0.5" stop-color="#f4f6f8"/><stop offset="1" stop-color="#c9ced4"/></linearGradient></defs><rect x="0.6" y="0.6" width="14.6" height="14.8" rx="3.4" fill="#fdfdfd" stroke="#3a3a3a" stroke-width="1.1"/><path d="M3.6 5.8h8.6v7.2c0 .9-.7 1.4-1.4 1.4H5c-.8 0-1.4-.6-1.4-1.4z" fill="url(#cg)"/></svg>
<span class="tx" id="r21" style="left:142.4px;top:679px;transform:scaleX(0.8038)">ボディ213</span>
<div class="rb" style="left:84.0px;top:702px;width:110.5px"></div>
<svg class="ic" style="left:87.3px;top:706.8px" width="16" height="10" viewBox="0 0 16 10"><path d="M0 5C2.2 1.7 5 0 8 0s5.8 1.7 8 5c-2.2 3.3-5 5-8 5S2.2 8.3 0 5z" fill="#8f8f8f"/><circle cx="8" cy="5" r="3" fill="#f2f2f2"/><circle cx="8" cy="5" r="1.7" fill="#8f8f8f"/></svg>
<svg class="ic" style="left:112.3px;top:704.0px" width="16" height="16" viewBox="0 0 16 16"><defs><linearGradient id="cg" x1="0" y1="0" x2="1" y2="0"><stop offset="0" stop-color="#aab0b8"/><stop offset="0.5" stop-color="#f4f6f8"/><stop offset="1" stop-color="#c9ced4"/></linearGradient></defs><rect x="0.6" y="0.6" width="14.6" height="14.8" rx="3.4" fill="#fdfdfd" stroke="#3a3a3a" stroke-width="1.1"/><path d="M3.6 5.8h8.6v7.2c0 .9-.7 1.4-1.4 1.4H5c-.8 0-1.4-.6-1.4-1.4z" fill="url(#cg)"/></svg>
<span class="tx" id="r22" style="left:142.4px;top:703px;transform:scaleX(0.8038)">ボディ212</span>
<div class="rb" style="left:84.0px;top:726px;width:118.7px"></div>
<svg class="ic" style="left:87.3px;top:730.8px" width="16" height="10" viewBox="0 0 16 10"><path d="M0 5C2.2 1.7 5 0 8 0s5.8 1.7 8 5c-2.2 3.3-5 5-8 5S2.2 8.3 0 5z" fill="#8f8f8f"/><circle cx="8" cy="5" r="3" fill="#f2f2f2"/><circle cx="8" cy="5" r="1.7" fill="#8f8f8f"/></svg>
<svg class="ic" style="left:112.3px;top:728.0px" width="16" height="16" viewBox="0 0 16 16"><defs><linearGradient id="cg" x1="0" y1="0" x2="1" y2="0"><stop offset="0" stop-color="#aab0b8"/><stop offset="0.5" stop-color="#f4f6f8"/><stop offset="1" stop-color="#c9ced4"/></linearGradient></defs><rect x="0.6" y="0.6" width="14.6" height="14.8" rx="3.4" fill="#fdfdfd" stroke="#3a3a3a" stroke-width="1.1"/><path d="M3.6 5.8h8.6v7.2c0 .9-.7 1.4-1.4 1.4H5c-.8 0-1.4-.6-1.4-1.4z" fill="url(#cg)"/></svg>
<span class="tx" id="r23" style="left:142.4px;top:727px;transform:scaleX(0.8759)">FDD1<i class="md">・</i>LED</span>
<div class="rb" style="left:84.0px;top:750px;width:118.7px"></div>
<svg class="ic" style="left:87.3px;top:754.8px" width="16" height="10" viewBox="0 0 16 10"><path d="M0 5C2.2 1.7 5 0 8 0s5.8 1.7 8 5c-2.2 3.3-5 5-8 5S2.2 8.3 0 5z" fill="#8f8f8f"/><circle cx="8" cy="5" r="3" fill="#f2f2f2"/><circle cx="8" cy="5" r="1.7" fill="#8f8f8f"/></svg>
<svg class="ic" style="left:112.3px;top:752.0px" width="16" height="16" viewBox="0 0 16 16"><defs><linearGradient id="cg" x1="0" y1="0" x2="1" y2="0"><stop offset="0" stop-color="#aab0b8"/><stop offset="0.5" stop-color="#f4f6f8"/><stop offset="1" stop-color="#c9ced4"/></linearGradient></defs><rect x="0.6" y="0.6" width="14.6" height="14.8" rx="3.4" fill="#fdfdfd" stroke="#3a3a3a" stroke-width="1.1"/><path d="M3.6 5.8h8.6v7.2c0 .9-.7 1.4-1.4 1.4H5c-.8 0-1.4-.6-1.4-1.4z" fill="url(#cg)"/></svg>
<span class="tx" id="r24" style="left:142.4px;top:751px;transform:scaleX(0.8759)">FDD0<i class="md">・</i>LED</span>
<div class="rb" style="left:84.0px;top:774px;width:164.7px"></div>
<svg class="ic" style="left:87.3px;top:778.8px" width="16" height="10" viewBox="0 0 16 10"><path d="M0 5C2.2 1.7 5 0 8 0s5.8 1.7 8 5c-2.2 3.3-5 5-8 5S2.2 8.3 0 5z" fill="#8f8f8f"/><circle cx="8" cy="5" r="3" fill="#f2f2f2"/><circle cx="8" cy="5" r="1.7" fill="#8f8f8f"/></svg>
<svg class="ic" style="left:112.3px;top:776.0px" width="16" height="16" viewBox="0 0 16 16"><defs><linearGradient id="cg" x1="0" y1="0" x2="1" y2="0"><stop offset="0" stop-color="#aab0b8"/><stop offset="0.5" stop-color="#f4f6f8"/><stop offset="1" stop-color="#c9ced4"/></linearGradient></defs><rect x="0.6" y="0.6" width="14.6" height="14.8" rx="3.4" fill="#fdfdfd" stroke="#3a3a3a" stroke-width="1.1"/><path d="M3.6 5.8h8.6v7.2c0 .9-.7 1.4-1.4 1.4H5c-.8 0-1.4-.6-1.4-1.4z" fill="url(#cg)"/></svg>
<span class="tx" id="r25" style="left:142.4px;top:775px;transform:scaleX(0.7622)">FDD1<i class="md">・</i>イジェクトボタン</span>
<div class="rb" style="left:84.0px;top:798px;width:164.2px"></div>
<svg class="ic" style="left:87.3px;top:802.8px" width="16" height="10" viewBox="0 0 16 10"><path d="M0 5C2.2 1.7 5 0 8 0s5.8 1.7 8 5c-2.2 3.3-5 5-8 5S2.2 8.3 0 5z" fill="#8f8f8f"/><circle cx="8" cy="5" r="3" fill="#f2f2f2"/><circle cx="8" cy="5" r="1.7" fill="#8f8f8f"/></svg>
<svg class="ic" style="left:112.3px;top:800.0px" width="16" height="16" viewBox="0 0 16 16"><defs><linearGradient id="cg" x1="0" y1="0" x2="1" y2="0"><stop offset="0" stop-color="#aab0b8"/><stop offset="0.5" stop-color="#f4f6f8"/><stop offset="1" stop-color="#c9ced4"/></linearGradient></defs><rect x="0.6" y="0.6" width="14.6" height="14.8" rx="3.4" fill="#fdfdfd" stroke="#3a3a3a" stroke-width="1.1"/><path d="M3.6 5.8h8.6v7.2c0 .9-.7 1.4-1.4 1.4H5c-.8 0-1.4-.6-1.4-1.4z" fill="url(#cg)"/></svg>
<span class="tx" id="r26" style="left:142.4px;top:799px;transform:scaleX(0.7583)">FDD0<i class="md">・</i>イジェクトボタン</span>
<div class="rb" style="left:84.0px;top:822px;width:119.8px"></div>
<svg class="ic" style="left:87.3px;top:826.8px" width="16" height="10" viewBox="0 0 16 10"><path d="M0 5C2.2 1.7 5 0 8 0s5.8 1.7 8 5c-2.2 3.3-5 5-8 5S2.2 8.3 0 5z" fill="#8f8f8f"/><circle cx="8" cy="5" r="3" fill="#f2f2f2"/><circle cx="8" cy="5" r="1.7" fill="#8f8f8f"/></svg>
<svg class="ic" style="left:112.3px;top:824.0px" width="16" height="16" viewBox="0 0 16 16"><defs><linearGradient id="cg" x1="0" y1="0" x2="1" y2="0"><stop offset="0" stop-color="#aab0b8"/><stop offset="0.5" stop-color="#f4f6f8"/><stop offset="1" stop-color="#c9ced4"/></linearGradient></defs><rect x="0.6" y="0.6" width="14.6" height="14.8" rx="3.4" fill="#fdfdfd" stroke="#3a3a3a" stroke-width="1.1"/><path d="M3.6 5.8h8.6v7.2c0 .9-.7 1.4-1.4 1.4H5c-.8 0-1.4-.6-1.4-1.4z" fill="url(#cg)"/></svg>
<span class="tx" id="r27" style="left:142.4px;top:823px;transform:scaleX(0.8371)">ボディ<i class="md">・</i>天面</span>
<div class="rb" style="left:84.0px;top:846px;width:119.8px"></div>
<svg class="ic" style="left:87.3px;top:850.8px" width="16" height="10" viewBox="0 0 16 10"><path d="M0 5C2.2 1.7 5 0 8 0s5.8 1.7 8 5c-2.2 3.3-5 5-8 5S2.2 8.3 0 5z" fill="#8f8f8f"/><circle cx="8" cy="5" r="3" fill="#f2f2f2"/><circle cx="8" cy="5" r="1.7" fill="#8f8f8f"/></svg>
<svg class="ic" style="left:112.3px;top:848.0px" width="16" height="16" viewBox="0 0 16 16"><defs><linearGradient id="cg" x1="0" y1="0" x2="1" y2="0"><stop offset="0" stop-color="#aab0b8"/><stop offset="0.5" stop-color="#f4f6f8"/><stop offset="1" stop-color="#c9ced4"/></linearGradient></defs><rect x="0.6" y="0.6" width="14.6" height="14.8" rx="3.4" fill="#fdfdfd" stroke="#3a3a3a" stroke-width="1.1"/><path d="M3.6 5.8h8.6v7.2c0 .9-.7 1.4-1.4 1.4H5c-.8 0-1.4-.6-1.4-1.4z" fill="url(#cg)"/></svg>
<span class="tx" id="r28" style="left:142.4px;top:847px;transform:scaleX(0.8371)">ボディ<i class="md">・</i>底面</span>
<div class="rb" style="left:84.0px;top:870px;width:144.4px"></div>
<svg class="ic" style="left:87.3px;top:874.8px" width="16" height="10" viewBox="0 0 16 10"><path d="M0 5C2.2 1.7 5 0 8 0s5.8 1.7 8 5c-2.2 3.3-5 5-8 5S2.2 8.3 0 5z" fill="#8f8f8f"/><circle cx="8" cy="5" r="3" fill="#f2f2f2"/><circle cx="8" cy="5" r="1.7" fill="#8f8f8f"/></svg>
<svg class="ic" style="left:112.3px;top:872.0px" width="16" height="16" viewBox="0 0 16 16"><defs><linearGradient id="cg" x1="0" y1="0" x2="1" y2="0"><stop offset="0" stop-color="#aab0b8"/><stop offset="0.5" stop-color="#f4f6f8"/><stop offset="1" stop-color="#c9ced4"/></linearGradient></defs><rect x="0.6" y="0.6" width="14.6" height="14.8" rx="3.4" fill="#fdfdfd" stroke="#3a3a3a" stroke-width="1.1"/><path d="M3.6 5.8h8.6v7.2c0 .9-.7 1.4-1.4 1.4H5c-.8 0-1.4-.6-1.4-1.4z" fill="url(#cg)"/></svg>
<span class="tx" id="r29" style="left:142.4px;top:871px;transform:scaleX(0.8315)">内部<i class="md">・</i>マウンタ (1)</span>
<div class="rb" style="left:84.0px;top:894px;width:137.2px"></div>
<svg class="ic" style="left:87.3px;top:898.8px" width="16" height="10" viewBox="0 0 16 10"><path d="M0 5C2.2 1.7 5 0 8 0s5.8 1.7 8 5c-2.2 3.3-5 5-8 5S2.2 8.3 0 5z" fill="#8f8f8f"/><circle cx="8" cy="5" r="3" fill="#f2f2f2"/><circle cx="8" cy="5" r="1.7" fill="#8f8f8f"/></svg>
<svg class="ic" style="left:112.3px;top:896.0px" width="16" height="16" viewBox="0 0 16 16"><defs><linearGradient id="cg" x1="0" y1="0" x2="1" y2="0"><stop offset="0" stop-color="#aab0b8"/><stop offset="0.5" stop-color="#f4f6f8"/><stop offset="1" stop-color="#c9ced4"/></linearGradient></defs><rect x="0.6" y="0.6" width="14.6" height="14.8" rx="3.4" fill="#fdfdfd" stroke="#3a3a3a" stroke-width="1.1"/><path d="M3.6 5.8h8.6v7.2c0 .9-.7 1.4-1.4 1.4H5c-.8 0-1.4-.6-1.4-1.4z" fill="url(#cg)"/></svg>
<span class="tx" id="r30" style="left:142.4px;top:895px;transform:scaleX(0.8772)">ボディ<i class="md">・</i>背面<i class="md">・</i>緑</span>
<div class="rb" style="left:84.0px;top:918px;width:161.7px"></div>
<svg class="ic" style="left:87.3px;top:922.8px" width="16" height="10" viewBox="0 0 16 10"><path d="M0 5C2.2 1.7 5 0 8 0s5.8 1.7 8 5c-2.2 3.3-5 5-8 5S2.2 8.3 0 5z" fill="#8f8f8f"/><circle cx="8" cy="5" r="3" fill="#f2f2f2"/><circle cx="8" cy="5" r="1.7" fill="#8f8f8f"/></svg>
<svg class="ic" style="left:112.3px;top:920.0px" width="16" height="16" viewBox="0 0 16 16"><defs><linearGradient id="cg" x1="0" y1="0" x2="1" y2="0"><stop offset="0" stop-color="#aab0b8"/><stop offset="0.5" stop-color="#f4f6f8"/><stop offset="1" stop-color="#c9ced4"/></linearGradient></defs><rect x="0.6" y="0.6" width="14.6" height="14.8" rx="3.4" fill="#fdfdfd" stroke="#3a3a3a" stroke-width="1.1"/><path d="M3.6 5.8h8.6v7.2c0 .9-.7 1.4-1.4 1.4H5c-.8 0-1.4-.6-1.4-1.4z" fill="url(#cg)"/></svg>
<span class="tx" id="r31" style="left:142.4px;top:919px;transform:scaleX(0.8606)">内部<i class="md">・</i>フロント (1) (1)</span>
<div class="rb" style="left:84.0px;top:942px;width:178.4px"></div>
<svg class="ic" style="left:87.3px;top:946.8px" width="16" height="10" viewBox="0 0 16 10"><path d="M0 5C2.2 1.7 5 0 8 0s5.8 1.7 8 5c-2.2 3.3-5 5-8 5S2.2 8.3 0 5z" fill="#8f8f8f"/><circle cx="8" cy="5" r="3" fill="#f2f2f2"/><circle cx="8" cy="5" r="1.7" fill="#8f8f8f"/></svg>
<svg class="ic" style="left:112.3px;top:944.0px" width="16" height="16" viewBox="0 0 16 16"><defs><linearGradient id="cg" x1="0" y1="0" x2="1" y2="0"><stop offset="0" stop-color="#aab0b8"/><stop offset="0.5" stop-color="#f4f6f8"/><stop offset="1" stop-color="#c9ced4"/></linearGradient></defs><rect x="0.6" y="0.6" width="14.6" height="14.8" rx="3.4" fill="#fdfdfd" stroke="#3a3a3a" stroke-width="1.1"/><path d="M3.6 5.8h8.6v7.2c0 .9-.7 1.4-1.4 1.4H5c-.8 0-1.4-.6-1.4-1.4z" fill="url(#cg)"/></svg>
<span class="tx" id="r32" style="left:142.4px;top:943px;transform:scaleX(0.8770)">内部<i class="md">・</i>フロント (1) (1) (1)</span>
<div class="rb" style="left:84.0px;top:966px;width:137.5px"></div>
<svg class="ic" style="left:87.3px;top:970.8px" width="16" height="10" viewBox="0 0 16 10"><path d="M0 5C2.2 1.7 5 0 8 0s5.8 1.7 8 5c-2.2 3.3-5 5-8 5S2.2 8.3 0 5z" fill="#8f8f8f"/><circle cx="8" cy="5" r="3" fill="#f2f2f2"/><circle cx="8" cy="5" r="1.7" fill="#8f8f8f"/></svg>
<svg class="ic" style="left:112.3px;top:968.0px" width="16" height="16" viewBox="0 0 16 16"><defs><linearGradient id="cg" x1="0" y1="0" x2="1" y2="0"><stop offset="0" stop-color="#aab0b8"/><stop offset="0.5" stop-color="#f4f6f8"/><stop offset="1" stop-color="#c9ced4"/></linearGradient></defs><rect x="0.6" y="0.6" width="14.6" height="14.8" rx="3.4" fill="#fdfdfd" stroke="#3a3a3a" stroke-width="1.1"/><path d="M3.6 5.8h8.6v7.2c0 .9-.7 1.4-1.4 1.4H5c-.8 0-1.4-.6-1.4-1.4z" fill="url(#cg)"/></svg>
<span class="tx" id="r33" style="left:142.4px;top:967px;transform:scaleX(0.8810)">ボディ<i class="md">・</i>底面 (1)</span>
<div class="rb" style="left:84.0px;top:990px;width:131.8px"></div>
<svg class="ic" style="left:87.3px;top:994.8px" width="16" height="10" viewBox="0 0 16 10"><path d="M0 5C2.2 1.7 5 0 8 0s5.8 1.7 8 5c-2.2 3.3-5 5-8 5S2.2 8.3 0 5z" fill="#8f8f8f"/><circle cx="8" cy="5" r="3" fill="#f2f2f2"/><circle cx="8" cy="5" r="1.7" fill="#8f8f8f"/></svg>
<svg class="ic" style="left:112.3px;top:992.0px" width="16" height="16" viewBox="0 0 16 16"><defs><linearGradient id="cg" x1="0" y1="0" x2="1" y2="0"><stop offset="0" stop-color="#aab0b8"/><stop offset="0.5" stop-color="#f4f6f8"/><stop offset="1" stop-color="#c9ced4"/></linearGradient></defs><rect x="0.6" y="0.6" width="14.6" height="14.8" rx="3.4" fill="#fdfdfd" stroke="#3a3a3a" stroke-width="1.1"/><path d="M3.6 5.8h8.6v7.2c0 .9-.7 1.4-1.4 1.4H5c-.8 0-1.4-.6-1.4-1.4z" fill="url(#cg)"/></svg>
<span class="tx" id="r34" style="left:142.4px;top:991px;transform:scaleX(0.8635)">ボディ<i class="md">・</i>右側面</span>
<div class="rb" style="left:84.0px;top:1014px;width:131.8px"></div>
<svg class="ic" style="left:87.3px;top:1018.8px" width="16" height="10" viewBox="0 0 16 10"><path d="M0 5C2.2 1.7 5 0 8 0s5.8 1.7 8 5c-2.2 3.3-5 5-8 5S2.2 8.3 0 5z" fill="#8f8f8f"/><circle cx="8" cy="5" r="3" fill="#f2f2f2"/><circle cx="8" cy="5" r="1.7" fill="#8f8f8f"/></svg>
<svg class="ic" style="left:112.3px;top:1016.0px" width="16" height="16" viewBox="0 0 16 16"><defs><linearGradient id="cg" x1="0" y1="0" x2="1" y2="0"><stop offset="0" stop-color="#aab0b8"/><stop offset="0.5" stop-color="#f4f6f8"/><stop offset="1" stop-color="#c9ced4"/></linearGradient></defs><rect x="0.6" y="0.6" width="14.6" height="14.8" rx="3.4" fill="#fdfdfd" stroke="#3a3a3a" stroke-width="1.1"/><path d="M3.6 5.8h8.6v7.2c0 .9-.7 1.4-1.4 1.4H5c-.8 0-1.4-.6-1.4-1.4z" fill="url(#cg)"/></svg>
<span class="tx" id="r35" style="left:142.4px;top:1015px;transform:scaleX(0.8635)">ボディ<i class="md">・</i>左側面</span>
<div class="rb" style="left:84.0px;top:1038px;width:162.4px"></div>
<svg class="ic" style="left:87.3px;top:1042.8px" width="16" height="10" viewBox="0 0 16 10"><path d="M0 5C2.2 1.7 5 0 8 0s5.8 1.7 8 5c-2.2 3.3-5 5-8 5S2.2 8.3 0 5z" fill="#8f8f8f"/><circle cx="8" cy="5" r="3" fill="#f2f2f2"/><circle cx="8" cy="5" r="1.7" fill="#8f8f8f"/></svg>
<svg class="ic" style="left:112.3px;top:1040.0px" width="16" height="16" viewBox="0 0 16 16"><defs><linearGradient id="cg" x1="0" y1="0" x2="1" y2="0"><stop offset="0" stop-color="#aab0b8"/><stop offset="0.5" stop-color="#f4f6f8"/><stop offset="1" stop-color="#c9ced4"/></linearGradient></defs><rect x="0.6" y="0.6" width="14.6" height="14.8" rx="3.4" fill="#fdfdfd" stroke="#3a3a3a" stroke-width="1.1"/><path d="M3.6 5.8h8.6v7.2c0 .9-.7 1.4-1.4 1.4H5c-.8 0-1.4-.6-1.4-1.4z" fill="url(#cg)"/></svg>
<span class="tx" id="r36" style="left:142.4px;top:1039px;transform:scaleX(0.8363)">ボディ<i class="md">・</i>左側面<i class="md">・</i>ガイド</span>
<div class="rb" style="left:84.0px;top:1062px;width:162.4px"></div>
<svg class="ic" style="left:87.3px;top:1066.8px" width="16" height="10" viewBox="0 0 16 10"><path d="M0 5C2.2 1.7 5 0 8 0s5.8 1.7 8 5c-2.2 3.3-5 5-8 5S2.2 8.3 0 5z" fill="#8f8f8f"/><circle cx="8" cy="5" r="3" fill="#f2f2f2"/><circle cx="8" cy="5" r="1.7" fill="#8f8f8f"/></svg>
<svg class="ic" style="left:112.3px;top:1064.0px" width="16" height="16" viewBox="0 0 16 16"><defs><linearGradient id="cg" x1="0" y1="0" x2="1" y2="0"><stop offset="0" stop-color="#aab0b8"/><stop offset="0.5" stop-color="#f4f6f8"/><stop offset="1" stop-color="#c9ced4"/></linearGradient></defs><rect x="0.6" y="0.6" width="14.6" height="14.8" rx="3.4" fill="#fdfdfd" stroke="#3a3a3a" stroke-width="1.1"/><path d="M3.6 5.8h8.6v7.2c0 .9-.7 1.4-1.4 1.4H5c-.8 0-1.4-.6-1.4-1.4z" fill="url(#cg)"/></svg>
<span class="tx" id="r37" style="left:142.4px;top:1063px;transform:scaleX(0.8363)">ボディ<i class="md">・</i>右側面<i class="md">・</i>ガイド</span>
<div class="rb" style="left:65.8px;top:1086px;width:109.1px"></div>
<svg class="ic" style="left:47.8px;top:1088px" width="12" height="15" viewBox="0 0 12 15"><path d="M1.2 1.2L9.6 7.5L1.2 13.8z" fill="#eee" stroke="#222" stroke-width="1.1" stroke-linejoin="round"/></svg>
<svg class="ic" style="left:69.3px;top:1090.8px" width="16" height="10" viewBox="0 0 16 10"><path d="M0 5C2.2 1.7 5 0 8 0s5.8 1.7 8 5c-2.2 3.3-5 5-8 5S2.2 8.3 0 5z" fill="#8f8f8f"/><circle cx="8" cy="5" r="3" fill="#f2f2f2"/><circle cx="8" cy="5" r="1.7" fill="#8f8f8f"/></svg>
<svg class="ic" style="left:94.0px;top:1089.4px" width="17" height="13" viewBox="0 0 17 13"><path d="M0 1.2h5.2l1 1.6H0z M0 3.6h16.2v9H0z" fill="#8f8f8f"/></svg>
<span class="tx" id="r38" style="left:124.2px;top:1087px;transform:scaleX(0.7103)">キャンバス</span>
<span class="tt" id="t_title" style="left:31.0px;top:2.5px;font-size:12.5px;line-height:18px;color:#000;transform:scaleX(0.9470)">Autodesk Fusion 個人用(商用利用不可)</span>
<span class="tt" id="t_doc" style="left:906.0px;top:32.5px;font-size:12px;line-height:18px;color:#333;transform:scaleX(1.0280)">pc-9821Ap_open v2</span>
<span class="tt" id="t_design" style="left:52.5px;top:86.5px;font-size:11.5px;line-height:18px;color:#222;transform:scaleX(0.7500)">デザイン</span>
<span class="tt" id="t_solid" style="left:158.0px;top:58.0px;font-size:11.5px;line-height:18px;color:#0a8ad8;transform:scaleX(0.7065)">ソリッド</span>
<span class="tt" id="t_surf" style="left:236.5px;top:58.0px;font-size:11.5px;line-height:18px;color:#333;transform:scaleX(0.6842)">サーフェス</span>
<span class="tt" id="t_mesh" style="left:319.5px;top:58.0px;font-size:11.5px;line-height:18px;color:#333;transform:scaleX(0.6739)">メッシュ</span>
<span class="tt" id="t_form" style="left:397.5px;top:58.0px;font-size:11.5px;line-height:18px;color:#333;transform:scaleX(0.6739)">フォーム</span>
<span class="tt" id="t_sheet" style="left:475.5px;top:58.0px;font-size:11.5px;line-height:18px;color:#333;transform:scaleX(0.7222)">シート メタル</span>
<span class="tt" id="t_plas" style="left:573.5px;top:58.0px;font-size:11.5px;line-height:18px;color:#333;transform:scaleX(0.6812)">プラスチック</span>
<span class="tt" id="t_util" style="left:666.5px;top:58.0px;font-size:11.5px;line-height:18px;color:#333;transform:scaleX(0.6709)">ユーティリティ</span>
<span class="tt" id="t_create" style="left:229.5px;top:117.5px;font-size:11.5px;line-height:18px;color:#333;transform:scaleX(0.8913)">作成</span>
<span class="tt" id="t_modify" style="left:476.5px;top:117.5px;font-size:11.5px;line-height:18px;color:#333;transform:scaleX(0.8913)">修正</span>
<span class="tt" id="t_asm" style="left:650.5px;top:117.5px;font-size:11.5px;line-height:18px;color:#333;transform:scaleX(0.7193)">アセンブリ</span>
<span class="tt" id="t_conf" style="left:739.5px;top:117.5px;font-size:11.5px;line-height:18px;color:#333;transform:scaleX(0.6800)">コンフィギュレーション</span>
<span class="tt" id="t_cons" style="left:864.0px;top:117.5px;font-size:11.5px;line-height:18px;color:#333;transform:scaleX(0.9348)">構築</span>
<span class="tt" id="t_insp" style="left:922.5px;top:117.5px;font-size:11.5px;line-height:18px;color:#333;transform:scaleX(0.9130)">検査</span>
<span class="tt" id="t_ins" style="left:998.5px;top:117.5px;font-size:11.5px;line-height:18px;color:#333;transform:scaleX(0.9130)">挿入</span>
<span class="tt" id="t_sel" style="left:1078.5px;top:117.5px;font-size:11.5px;line-height:18px;color:#333;transform:scaleX(0.9130)">選択</span>
<span class="tt" id="t_brow" style="left:37.4px;top:147.5px;font-size:11.5px;line-height:18px;color:#444;transform:scaleX(0.7087)">ブラウザ</span>
<span class="tt" id="t_comm" style="left:37.4px;top:1134.5px;font-size:11.5px;line-height:18px;color:#444;transform:scaleX(0.6761)">コメント</span>
<!-- nav bar -->
<div class="abs" style="left:850px;top:1130px;width:237px;height:24px;background:#f1f1f1"></div>
<svg class="abs" style="left:0;top:0;overflow:visible" width="1928" height="1168">
<path d="M861.500 1148.800v-13" stroke="#333" stroke-width="2.600"/><path d="M861.500 1148.800v-13" stroke="#fff" stroke-width="1"/><path d="M858.300 1137.200l3.200-3.400 3.200 3.400z" fill="#fff" stroke="#333" stroke-width="0.800"/><path d="M856 1140.200c-2 .6-3 1.600-3 2.600 0 2 3.800 3.400 8.500 3.400s7.500-1.400 7.500-3.400c0-1.200-1.200-2.200-3.600-2.800" fill="none" stroke="#333" stroke-width="1.100"/><path d="M857.800 1142.600l-3.800 2.600 4.400 1.800z" fill="#333"/>
<path d="M874.4 1139.8h5.600l-2.800 3.600z" fill="#333"/>
<path d="M886.800 1139.600h15.200v9.600h-15.200z" fill="#f4f4f4" stroke="#333" stroke-width="1"/><rect x="889.600" y="1142.600" width="9.600" height="3.800" fill="#b7bcc8" stroke="#333" stroke-width="0.800"/><path d="M888.600 1139.200l4-4.200 2 1.600 5-1v3.600" fill="none" stroke="#333" stroke-width="0.900"/>
<path d="M915.600 1142.600c-1.200-1-2.600-.2-1.800 1.200l3.200 4.600c.8 1 2 1.400 3.400 1.400h2.600c2 0 3.200-1.200 3.400-3.200l.6-6c.1-1.400-1.700-1.600-2-.2l-.4 2.200v-5.400c0-1.400-2-1.400-2 0v4.600-5.800c0-1.400-2.100-1.400-2.100 0v5.800-4.800c0-1.400-2-1.400-2 0v8z" fill="#fff" stroke="#333" stroke-width="0.900" stroke-linejoin="round"/>
<circle cx="943.600" cy="1141.200" r="4.600" fill="#cfe6ee" stroke="#333" stroke-width="1"/><path d="M947 1144.800l3.600 3.800" stroke="#333" stroke-width="2.200" stroke-linecap="round"/><path d="M950.600 1137.200h4M952.600 1135.200v4M950.600 1141.200h4" stroke="#333" stroke-width="0.900"/>
<rect x="964.600" y="1134.400" width="14.600" height="14.600" fill="none" stroke="#333" stroke-width="0.900" stroke-dasharray="2.200 1.400"/><circle cx="971.200" cy="1140.800" r="5.600" fill="#d5e7ea" stroke="#333" stroke-width="1"/><path d="M975.400 1145l3.800 3.800" stroke="#333" stroke-width="2.200" stroke-linecap="round"/>
<path d="M985.4 1139.8h5.600l-2.800 3.600z" fill="#333"/>
<rect x="997.600" y="1134.400" width="15" height="11.400" rx="1" fill="#f0f0f0" stroke="#333" stroke-width="1"/><rect x="999.600" y="1136.400" width="11" height="7.400" fill="#8fb0e0" stroke="#4a6ea8" stroke-width="0.600"/><path d="M1002.600 1148.600h5M1003.600 1146v2.400M1006.600 1146v2.400" stroke="#555" stroke-width="1"/>
<path d="M1015.6 1139.8h5.600l-2.800 3.600z" fill="#333"/>
<rect x="1028.400" y="1134.400" width="15.200" height="15.200" fill="#d8d8de" stroke="#333" stroke-width="0.900"/>
<path d="M1031.4 1134.400v15.200M1028.400 1137.4h15.200" stroke="#555" stroke-width="0.700"/>
<path d="M1034.5 1134.400v15.200M1028.400 1140.5h15.200" stroke="#555" stroke-width="0.700"/>
<path d="M1037.5 1134.400v15.200M1028.400 1143.5h15.200" stroke="#555" stroke-width="0.700"/>
<path d="M1040.6 1134.400v15.200M1028.400 1146.6h15.200" stroke="#555" stroke-width="0.700"/>
<path d="M1046.6 1139.8h5.600l-2.800 3.600z" fill="#333"/>
<rect x="1059.400" y="1135.400" width="15" height="12.600" rx="1" fill="#9db7e3" stroke="#2e4f8a" stroke-width="1"/><path d="M1066.900 1135.400v12.600M1059.400 1141.700h15" stroke="#2e4f8a" stroke-width="1"/>
<rect x="1061.2" y="1137.2" width="4" height="2.600" fill="#c5d6f2" stroke="#5878b3" stroke-width="0.400"/>
<rect x="1068.8" y="1137.2" width="4" height="2.600" fill="#c5d6f2" stroke="#5878b3" stroke-width="0.400"/>
<rect x="1061.2" y="1143.5" width="4" height="2.600" fill="#c5d6f2" stroke="#5878b3" stroke-width="0.400"/>
<rect x="1068.8" y="1143.5" width="4" height="2.600" fill="#c5d6f2" stroke="#5878b3" stroke-width="0.400"/>
<path d="M1077.6 1139.8h5.600l-2.800 3.600z" fill="#333"/>
<defs><filter id="vcb" x="-30%" y="-30%" width="160%" height="160%"><feGaussianBlur stdDeviation="3"/></filter></defs>
<path d="M1840.4 221.7L1866.7 244.5L1901.5 227.7L1873.9 212.1Z" fill="#000" fill-opacity="0.13" filter="url(#vcb)"/>
<path d="M1830.2 181.6L1866.7 166.0L1899.7 186.4L1861.3 207.4Z" fill="#efefef" fill-opacity="0.75"/>
<path d="M1830.2 181.6L1861.3 207.4L1861.9 243.3L1833.8 218.1Z" fill="#e6e6e6" fill-opacity="0.75"/>
<path d="M1861.3 207.4L1899.7 186.4L1896.1 222.9L1861.9 243.3Z" fill="#e2e2e2" fill-opacity="0.75"/>
<path d="M1830.2 181.6L1866.7 166.0L1899.7 186.4L1861.3 207.4L1830.2 181.6" fill="none" stroke="#555" stroke-width="0.700" stroke-dasharray="3.200 1.600"/>
<path d="M1861.3 207.4L1861.9 243.3L1896.1 222.9L1899.7 186.4" fill="none" stroke="#555" stroke-width="0.700" stroke-dasharray="3.200 1.600"/>
<path d="M1833.8 218.4L1828.4 176.4" stroke="#5d5dfb" stroke-width="1.600"/>
<path d="M1833.8 218.4L1866.7 250.5" stroke="#f08a8a" stroke-width="1.600"/>
<text x="1823.0" y="173.8" font-family="Liberation Sans,sans-serif" font-style="italic" font-size="11.500" fill="#7a7aff">Z</text>
<text x="1867.3" y="260.1" font-family="Liberation Sans,sans-serif" font-size="11.500" fill="#f58a8a">X</text>
<text transform="matrix(0.770 0.640 -0.920 0.390 1862.5 186.7)" x="0" y="0" text-anchor="middle" font-family="Noto Sans CJK JP,sans-serif" font-size="19" fill="#8b909b" dominant-baseline="central">上</text>
<text transform="matrix(0.750 0.670 0.080 1.000 1845.9 212.7)" x="0" y="0" text-anchor="middle" font-family="Noto Sans CJK JP,sans-serif" font-size="18" fill="#8b909b" dominant-baseline="central">前</text>
<text transform="matrix(0.860 -0.510 -0.050 1.000 1880.2 215.1)" x="0" y="0" text-anchor="middle" font-family="Noto Sans CJK JP,sans-serif" font-size="19" fill="#8b909b" dominant-baseline="central">右</text>
<ellipse cx="1327.500" cy="517.500" rx="8" ry="5.200" fill="#fff" fill-opacity="0.700" stroke="#a9a9a9" stroke-width="2.200"/>
</svg>
</body></html>
